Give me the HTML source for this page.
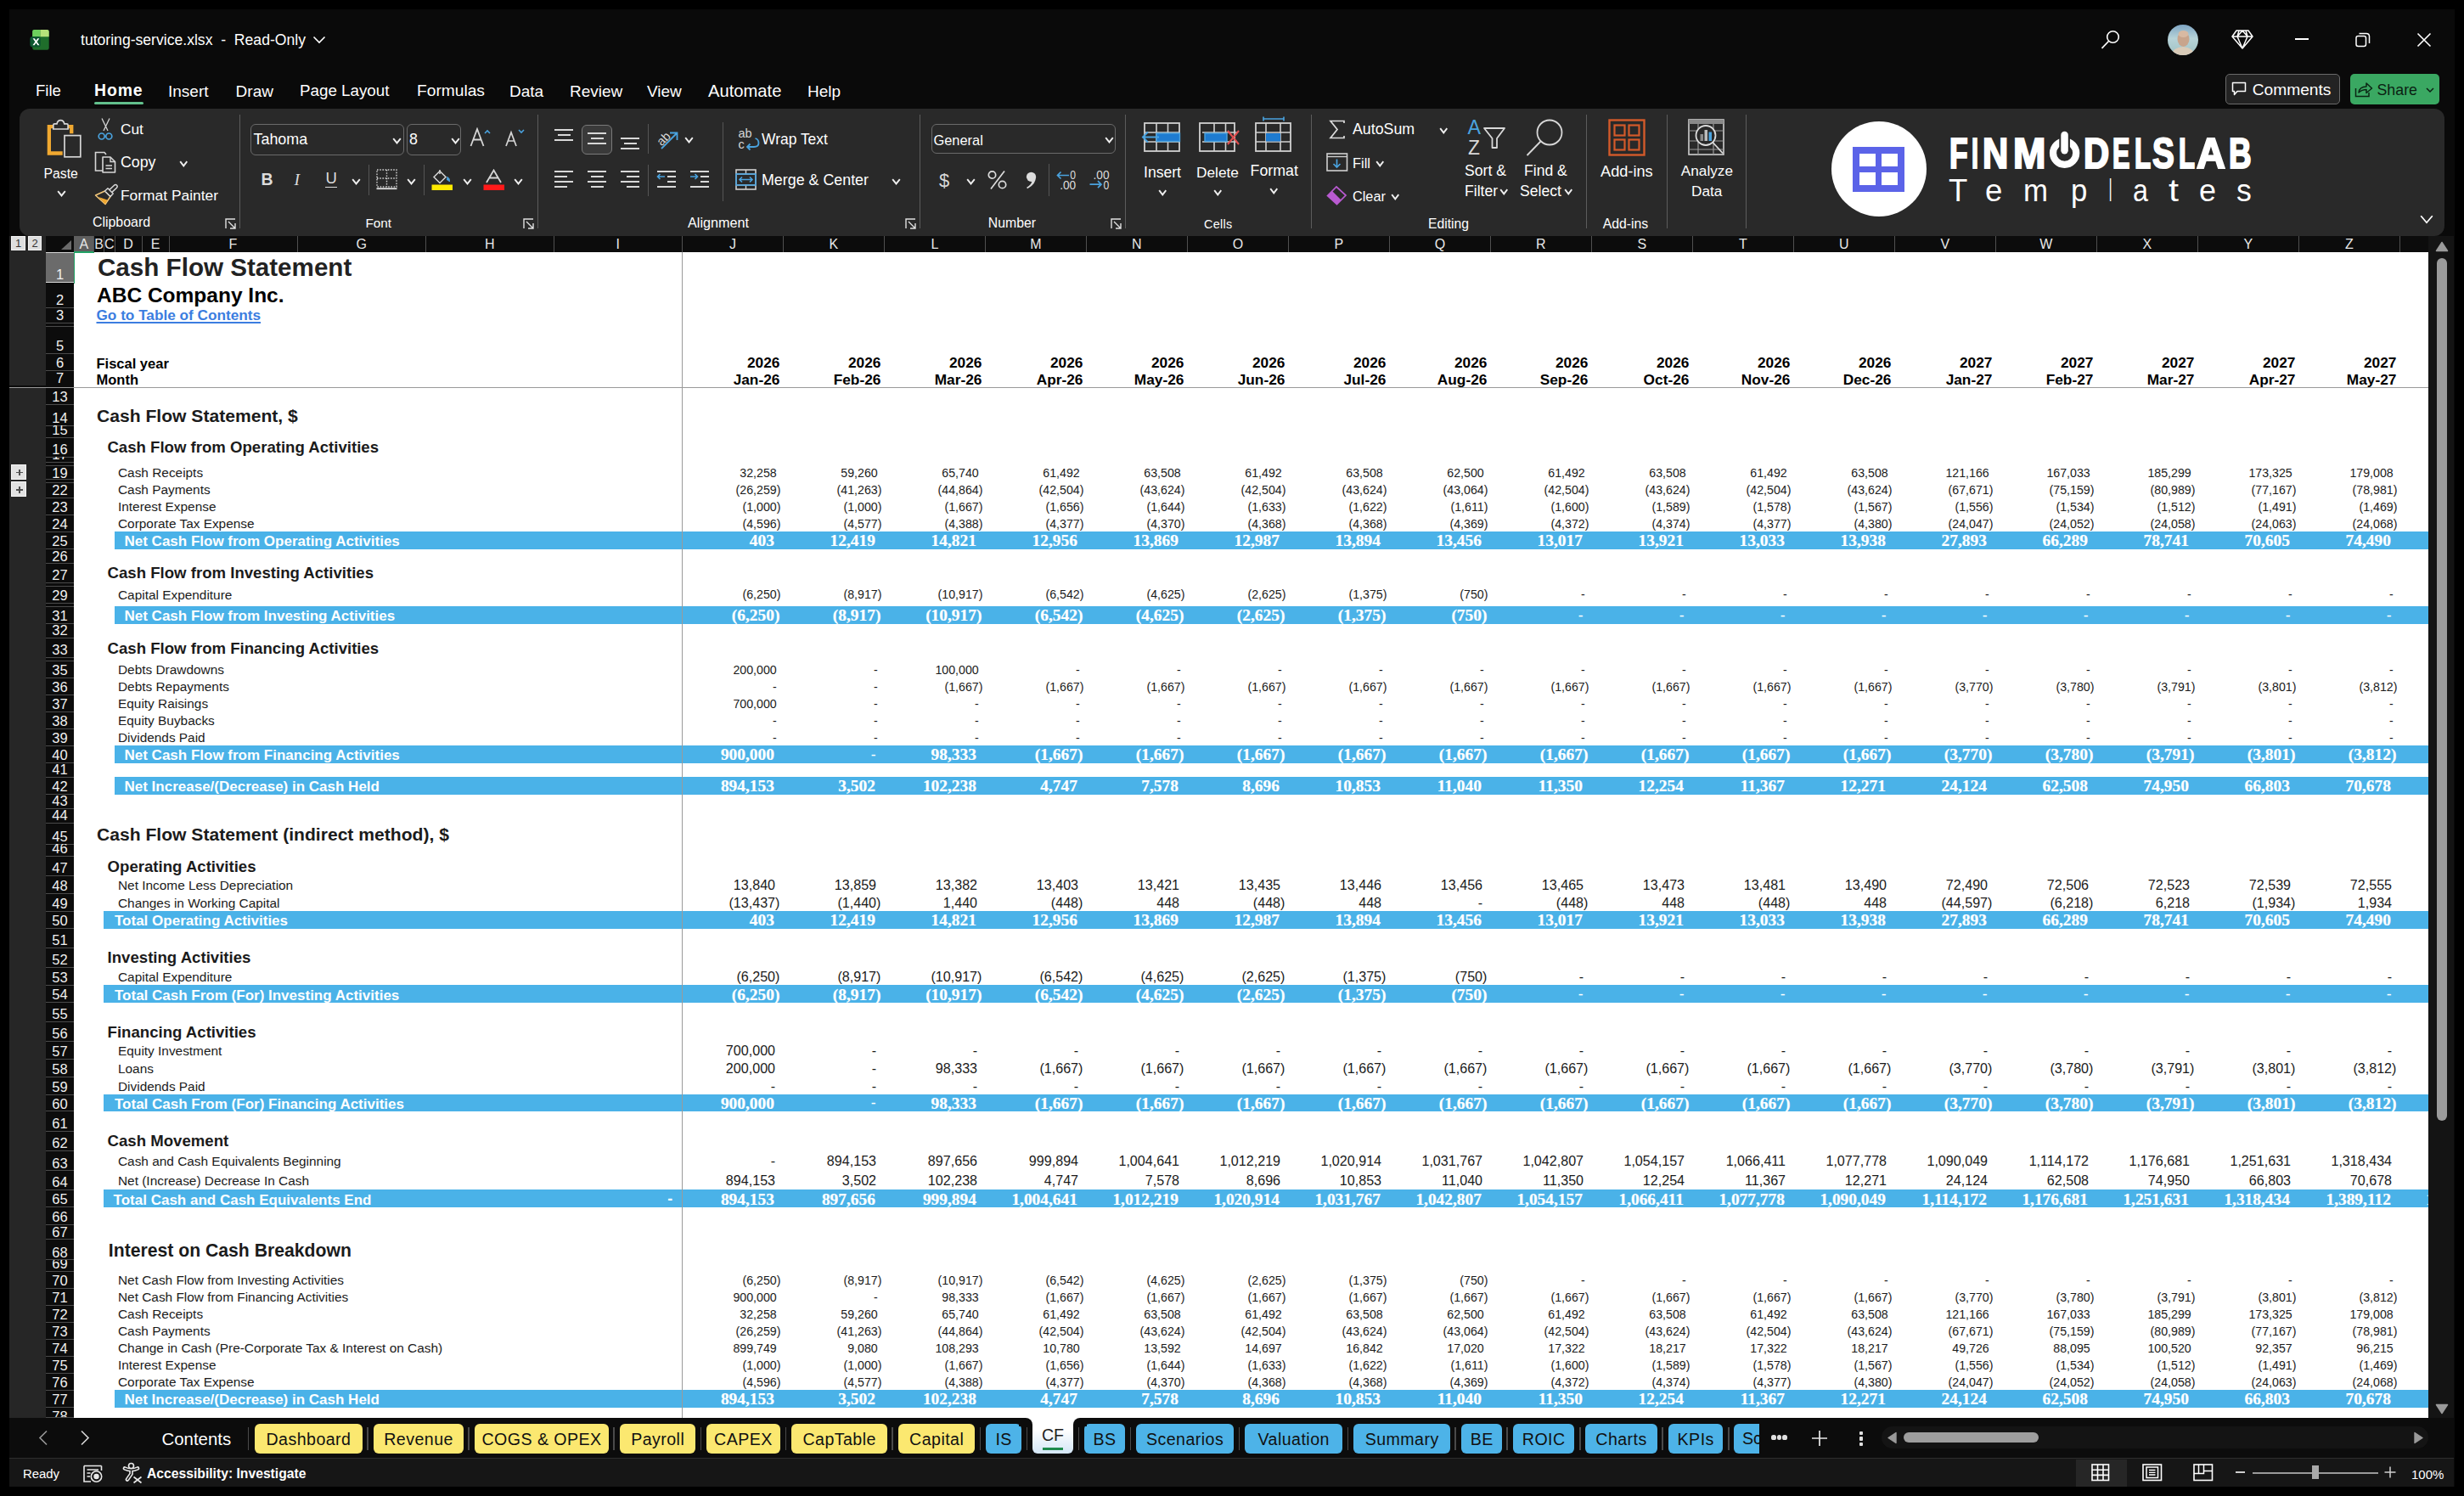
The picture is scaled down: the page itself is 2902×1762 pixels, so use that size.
<!DOCTYPE html>
<html><head><meta charset="utf-8"><title>Cash Flow Statement</title>
<style>html,body{margin:0;padding:0;width:2902px;height:1762px;overflow:hidden;background:#000;font-family:'Liberation Sans',sans-serif}
body{position:relative}</style></head><body>
<div style="position:absolute;left:0.00px;top:0.00px;width:2902.00px;height:1762.00px;background:#000000;"></div>
<div style="position:absolute;left:11.00px;top:11.00px;width:2880.00px;height:1740.00px;background:#0a0a0a;"></div>
<svg style="position:absolute;left:34.00px;top:34.00px;" width="26" height="26" viewBox="0 0 26 26">
      <rect x="4.2" y="0.9" width="19.5" height="23.8" rx="2.2" fill="#1f6e2b"/>
      <path d="M6.4 0.9 H13.5 V9.2 H4.2 V3.1 Q4.2 0.9 6.4 0.9 Z" fill="#6dd15d"/>
      <path d="M13.5 0.9 H21.5 Q23.7 0.9 23.7 3.1 V9.2 H13.5 Z" fill="#b7e37a"/>
      <rect x="1.4" y="9" width="12.4" height="12.4" rx="3" fill="#0d5730"/>
      <path d="M4.6 11.3 L7.4 15.2 L4.4 19.3 H6.6 L8.5 16.6 L10.4 19.3 H12.5 L9.6 15.2 L12.3 11.3 H10.2 L8.5 13.8 L6.8 11.3 Z" fill="#ffffff"/>
    </svg>
<div style="position:absolute;left:95.00px;top:39.30px;font-family:'Liberation Sans', sans-serif;font-size:17.6px;line-height:17.6px;font-weight:normal;color:#ffffff;white-space:pre;">tutoring-service.xlsx  -  Read-Only</div>
<svg style="position:absolute;left:368.00px;top:42.00px;" width="16" height="10" viewBox="0 0 16 10"><path d="M1.5 1.5 L8 8 L14.5 1.5" stroke="#fff" stroke-width="1.6" fill="none"/></svg>
<svg style="position:absolute;left:2474.00px;top:35.00px;" width="25" height="25" viewBox="0 0 25 25"><circle cx="14.5" cy="8.5" r="6.8" stroke="#fff" stroke-width="1.6" fill="none"/><path d="M9.5 13.5 L1.5 21.8" stroke="#fff" stroke-width="1.7"/></svg>
<svg style="position:absolute;left:2553.00px;top:29.00px;" width="36" height="36" viewBox="0 0 36 36"><defs><clipPath id="av"><circle cx="18" cy="18" r="18"/></clipPath><linearGradient id="avg" x1="0" y1="0" x2="0" y2="1"><stop offset="0" stop-color="#7fa6c4"/><stop offset="0.45" stop-color="#b7d3d8"/><stop offset="1" stop-color="#9fc2c4"/></linearGradient></defs>
      <g clip-path="url(#av)"><rect width="36" height="36" fill="url(#avg)"/>
      <path d="M4 36 Q6 27 18 26 Q30 27 32 36 Z" fill="#d9cbb8"/>
      <ellipse cx="18.5" cy="17" rx="7" ry="9" fill="#c8a48c"/>
      <ellipse cx="18.5" cy="11" rx="6" ry="4" fill="#d8b9a2"/></g></svg>
<svg style="position:absolute;left:2628.00px;top:35.00px;" width="26" height="23" viewBox="0 0 26 23"><path d="M6 1 H20 L25 8 L13 22 L1 8 Z M1 8 H25 M9 1 L7 8 L13 22 L19 8 L17 1 M7 8 L13 1 L19 8" stroke="#fff" stroke-width="1.5" fill="none" stroke-linejoin="round"/></svg>
<div style="position:absolute;left:2703.00px;top:45.30px;width:16.00px;height:1.60px;background:#ffffff;"></div>
<svg style="position:absolute;left:2774.00px;top:38.00px;" width="18" height="18" viewBox="0 0 18 18"><rect x="1" y="4.5" width="11.5" height="12" rx="2.2" stroke="#fff" stroke-width="1.5" fill="none"/><path d="M4.5 1.5 H13 Q16.5 1.5 16.5 5 V13" stroke="#fff" stroke-width="1.5" fill="none"/></svg>
<svg style="position:absolute;left:2846.00px;top:38.00px;" width="18" height="18" viewBox="0 0 18 18"><path d="M1.5 1.5 L16.5 16.5 M16.5 1.5 L1.5 16.5" stroke="#fff" stroke-width="1.6"/></svg>
<div style="position:absolute;left:2621px;top:87.3px;width:132.5px;height:33.4px;border:1px solid #6a6a6a;border-radius:5px;background:#232323"></div>
<svg style="position:absolute;left:2628.00px;top:96.00px;" width="19" height="18" viewBox="0 0 19 18"><path d="M1.5 1.5 H16.5 V11.5 H7 L3.5 15.5 V11.5 H1.5 Z" stroke="#fff" stroke-width="1.5" fill="none" stroke-linejoin="round"/></svg>
<div style="position:absolute;left:2652.70px;top:96.35px;font-family:'Liberation Sans', sans-serif;font-size:19.2px;line-height:19.2px;font-weight:normal;color:#ffffff;white-space:pre;">Comments</div>
<div style="position:absolute;left:2768px;top:87.3px;width:105px;height:35.4px;border-radius:5px;background:#3aa862"></div>
<svg style="position:absolute;left:2773.00px;top:96.00px;" width="22" height="19" viewBox="0 0 22 19"><path d="M1.5 8 V17.5 H17 V13" stroke="#0b2614" stroke-width="1.5" fill="none"/><path d="M5 13 Q6 6 14 6 V2 L20.5 8 L14 13.5 V9.5 Q9 9.5 5 13 Z" stroke="#0b2614" stroke-width="1.5" fill="none" stroke-linejoin="round"/></svg>
<div style="position:absolute;left:2799.50px;top:97.53px;font-family:'Liberation Sans', sans-serif;font-size:17.8px;line-height:17.8px;font-weight:normal;color:#0b1f12;white-space:pre;">Share</div>
<svg style="position:absolute;left:2857.00px;top:103.00px;" width="10" height="7" viewBox="0 0 10 7"><path d="M1 1 L5 5 L9 1" stroke="#0b1f12" stroke-width="1.5" fill="none"/></svg>
<div style="position:absolute;left:42.00px;top:97.86px;font-family:'Liberation Sans', sans-serif;font-size:18.6px;line-height:18.6px;font-weight:normal;color:#ffffff;white-space:pre;">File</div>
<div style="position:absolute;left:111.00px;top:97.18px;font-family:'Liberation Sans', sans-serif;font-size:19.4px;line-height:19.4px;font-weight:bold;color:#ffffff;white-space:pre;letter-spacing:0.9px">Home</div>
<div style="position:absolute;left:198.00px;top:97.52px;font-family:'Liberation Sans', sans-serif;font-size:19.0px;line-height:19.0px;font-weight:normal;color:#ffffff;white-space:pre;">Insert</div>
<div style="position:absolute;left:277.60px;top:97.52px;font-family:'Liberation Sans', sans-serif;font-size:19.0px;line-height:19.0px;font-weight:normal;color:#ffffff;white-space:pre;">Draw</div>
<div style="position:absolute;left:353.00px;top:97.69px;font-family:'Liberation Sans', sans-serif;font-size:18.8px;line-height:18.8px;font-weight:normal;color:#ffffff;white-space:pre;">Page Layout</div>
<div style="position:absolute;left:491.00px;top:97.35px;font-family:'Liberation Sans', sans-serif;font-size:19.2px;line-height:19.2px;font-weight:normal;color:#ffffff;white-space:pre;">Formulas</div>
<div style="position:absolute;left:600.00px;top:97.52px;font-family:'Liberation Sans', sans-serif;font-size:19.0px;line-height:19.0px;font-weight:normal;color:#ffffff;white-space:pre;">Data</div>
<div style="position:absolute;left:671.00px;top:97.52px;font-family:'Liberation Sans', sans-serif;font-size:19.0px;line-height:19.0px;font-weight:normal;color:#ffffff;white-space:pre;">Review</div>
<div style="position:absolute;left:762.00px;top:97.52px;font-family:'Liberation Sans', sans-serif;font-size:19.0px;line-height:19.0px;font-weight:normal;color:#ffffff;white-space:pre;">View</div>
<div style="position:absolute;left:834.00px;top:96.50px;font-family:'Liberation Sans', sans-serif;font-size:20.2px;line-height:20.2px;font-weight:normal;color:#ffffff;white-space:pre;">Automate</div>
<div style="position:absolute;left:951.00px;top:97.52px;font-family:'Liberation Sans', sans-serif;font-size:19.0px;line-height:19.0px;font-weight:normal;color:#ffffff;white-space:pre;">Help</div>
<div style="position:absolute;left:111px;top:119.8px;width:58px;height:3px;border-radius:2px;background:#62c08c"></div>
<div style="position:absolute;left:23px;top:128px;width:2856px;height:149.5px;border-radius:12px;background:#292929"></div>
<svg style="position:absolute;left:54.00px;top:140.00px;" width="44" height="48" viewBox="0 0 44 48">
      <path d="M8.8 9.2 H3.85 V40.5 H19.7" stroke="#f0a830" stroke-width="4.3" fill="none"/>
      <path d="M30.25 17.3 V9.2 H26.5" stroke="#f0a830" stroke-width="4.3" fill="none"/>
      <path d="M8.8 12 V7.2 Q8.8 5.8 10.3 5.8 H13 Q13.8 1.6 17.4 1.6 Q21 1.6 21.8 5.8 H24.6 Q26.1 5.8 26.1 7.2 V12 Z" stroke="#d6d6d6" stroke-width="1.7" fill="#292929"/>
      <rect x="22" y="19.6" width="18.8" height="25.2" stroke="#d6d6d6" stroke-width="1.7" fill="#292929"/>
    </svg>
<div style="position:absolute;left:51.50px;top:196.63px;font-family:'Liberation Sans', sans-serif;font-size:15.8px;line-height:15.8px;font-weight:normal;color:#ffffff;white-space:pre;">Paste</div>
<svg style="position:absolute;left:67.00px;top:223.50px;" width="11" height="9" viewBox="0 0 11 9"><path d="M1.2 1.2 L5.5 6.4 L9.8 1.2" stroke="#f0f0f0" stroke-width="1.9" fill="none" stroke-linejoin="miter"/></svg>
<svg style="position:absolute;left:115.00px;top:139.00px;" width="19" height="26" viewBox="0 0 19 26">
      <path d="M5 0.5 L12 15 M14 0.5 L7 15" stroke="#d6d6d6" stroke-width="1.3" fill="none"/>
      <circle cx="4.7" cy="21.5" r="3.5" stroke="#4aa3df" stroke-width="1.7" fill="none"/>
      <circle cx="13.3" cy="21.5" r="3.5" stroke="#4aa3df" stroke-width="1.7" fill="none"/>
    </svg>
<div style="position:absolute;left:142.00px;top:144.36px;font-family:'Liberation Sans', sans-serif;font-size:17.3px;line-height:17.3px;font-weight:normal;color:#ffffff;white-space:pre;">Cut</div>
<svg style="position:absolute;left:111.00px;top:178.00px;" width="26" height="27" viewBox="0 0 26 27">
      <path d="M12 23 H1.5 V1.5 H12 L14 4" stroke="#d6d6d6" stroke-width="1.6" fill="none"/>
      <path d="M10 7 H19 L24.5 12.5 V25 H10 Z" stroke="#d6d6d6" stroke-width="1.6" fill="#292929" stroke-linejoin="round"/>
      <path d="M19 7 V12.5 H24.5 M13.5 17 H21 M13.5 20.5 H21" stroke="#d6d6d6" stroke-width="1.4" fill="none"/>
    </svg>
<div style="position:absolute;left:142.00px;top:182.93px;font-family:'Liberation Sans', sans-serif;font-size:17.8px;line-height:17.8px;font-weight:normal;color:#ffffff;white-space:pre;">Copy</div>
<svg style="position:absolute;left:210.50px;top:188.50px;" width="10.5" height="8.5" viewBox="0 0 10.5 8.5"><path d="M1.2 1.2 L5.25 6.4 L9.3 1.2" stroke="#f0f0f0" stroke-width="1.9" fill="none" stroke-linejoin="miter"/></svg>
<svg style="position:absolute;left:111.00px;top:216.00px;" width="28" height="27" viewBox="0 0 28 27">
      <path d="M1.5 14 L12.5 9 L19 15.5 L13 24.5 Z" fill="none" stroke="#f3c77a" stroke-width="1.5" stroke-linejoin="round"/>
      <path d="M5 16 L13 24.5 L15.5 19.5 Z" fill="#f0a830"/>
      <path d="M12.5 9 L16 5.8 L22.2 12 L19 15.5 Z" fill="#292929" stroke="#d6d6d6" stroke-width="1.5" stroke-linejoin="round"/>
      <path d="M17.8 7.6 L23.5 2.2 Q25.2 0.8 26.6 2.2 Q27.9 3.6 26.4 5.2 L20.6 10.6" fill="none" stroke="#d6d6d6" stroke-width="1.5"/>
    </svg>
<div style="position:absolute;left:142.00px;top:222.27px;font-family:'Liberation Sans', sans-serif;font-size:17.4px;line-height:17.4px;font-weight:normal;color:#ffffff;white-space:pre;">Format Painter</div>
<div style="position:absolute;left:109.00px;top:254.04px;font-family:'Liberation Sans', sans-serif;font-size:15.9px;line-height:15.9px;font-weight:normal;color:#ffffff;white-space:pre;">Clipboard</div>
<svg style="position:absolute;left:264.50px;top:256.50px;" width="13" height="13" viewBox="0 0 13 13"><path d="M1 12 V1 H12" stroke="#e0e0e0" stroke-width="1.4" fill="none"/><path d="M12 6 V12 H6 M4 4 L11.5 11.5" stroke="#e0e0e0" stroke-width="1.4" fill="none"/></svg>
<div style="position:absolute;left:281.50px;top:135.00px;width:1.00px;height:134.00px;background:#5c5c5c;"></div>
<div style="position:absolute;left:295px;top:146px;width:179px;height:34.5px;border:1.2px solid #6a6a6a;border-radius:6px"></div>
<div style="position:absolute;left:298.50px;top:155.85px;font-family:'Liberation Sans', sans-serif;font-size:17.9px;line-height:17.9px;font-weight:normal;color:#ffffff;white-space:pre;">Tahoma</div>
<svg style="position:absolute;left:462.00px;top:161.50px;" width="11" height="9" viewBox="0 0 11 9"><path d="M1.2 1.2 L5.5 6.4 L9.8 1.2" stroke="#f0f0f0" stroke-width="1.9" fill="none" stroke-linejoin="miter"/></svg>
<div style="position:absolute;left:479.4px;top:146px;width:62px;height:34.5px;border:1.2px solid #6a6a6a;border-radius:6px"></div>
<div style="position:absolute;left:482.00px;top:155.85px;font-family:'Liberation Sans', sans-serif;font-size:17.9px;line-height:17.9px;font-weight:normal;color:#ffffff;white-space:pre;">8</div>
<svg style="position:absolute;left:530.50px;top:161.50px;" width="11" height="9" viewBox="0 0 11 9"><path d="M1.2 1.2 L5.5 6.4 L9.8 1.2" stroke="#f0f0f0" stroke-width="1.9" fill="none" stroke-linejoin="miter"/></svg>
<svg style="position:absolute;left:553.00px;top:150.00px;" width="26" height="24" viewBox="0 0 26 24"><path d="M1.5 22 L9 2 L16.5 22 M4.5 14.5 H13.5" stroke="#d6d6d6" stroke-width="1.8" fill="none"/><path d="M18 7 L21 4 L24 7" stroke="#4aa3df" stroke-width="1.6" fill="none"/></svg>
<svg style="position:absolute;left:594.00px;top:150.00px;" width="25" height="24" viewBox="0 0 25 24"><path d="M2 22 L8 6 L14 22 M4.5 16 H11.5" stroke="#d6d6d6" stroke-width="1.7" fill="none"/><path d="M17 3 L20 6 L23 3" stroke="#4aa3df" stroke-width="1.6" fill="none"/></svg>
<div style="position:absolute;left:307.50px;top:201.79px;font-family:'Liberation Sans', sans-serif;font-size:19.5px;line-height:19.5px;font-weight:bold;color:#dcdcdc;white-space:pre;">B</div>
<div style="position:absolute;left:346.50px;top:201.79px;font-family:'Liberation Sans', sans-serif;font-size:19.5px;line-height:19.5px;font-weight:normal;color:#dcdcdc;white-space:pre;font-family:'Liberation Serif',serif;font-style:italic">I</div>
<div style="position:absolute;left:383.50px;top:200.84px;font-family:'Liberation Sans', sans-serif;font-size:18.5px;line-height:18.5px;font-weight:normal;color:#dcdcdc;white-space:pre;">U</div>
<div style="position:absolute;left:383.00px;top:219.50px;width:14.00px;height:1.50px;background:#dcdcdc;"></div>
<svg style="position:absolute;left:414.00px;top:209.50px;" width="11" height="9" viewBox="0 0 11 9"><path d="M1.2 1.2 L5.5 6.4 L9.8 1.2" stroke="#f0f0f0" stroke-width="1.9" fill="none" stroke-linejoin="miter"/></svg>
<div style="position:absolute;left:433.90px;top:194.00px;width:1.00px;height:35.50px;background:#555;"></div>
<svg style="position:absolute;left:443.00px;top:199.00px;" width="25" height="25" viewBox="0 0 25 25"><path d="M1 1 H24 V21 H1 Z M12.5 1 V21 M1 11 H24" stroke="#cfcfcf" stroke-width="1.4" stroke-dasharray="1.6 1.6" fill="none"/><path d="M0.5 23.2 H24.5" stroke="#e0e0e0" stroke-width="1.8"/></svg>
<svg style="position:absolute;left:479.00px;top:209.50px;" width="11" height="9" viewBox="0 0 11 9"><path d="M1.2 1.2 L5.5 6.4 L9.8 1.2" stroke="#f0f0f0" stroke-width="1.9" fill="none" stroke-linejoin="miter"/></svg>
<div style="position:absolute;left:499.00px;top:194.00px;width:1.00px;height:35.50px;background:#555;"></div>
<svg style="position:absolute;left:508.00px;top:199.00px;" width="26" height="26" viewBox="0 0 26 26"><path d="M3 9.5 L10 2.5 L17 9.5 L10 16.5 Z" stroke="#d6d6d6" stroke-width="1.5" fill="none"/><path d="M10 1 V6" stroke="#d6d6d6" stroke-width="1.5"/><path d="M18.5 9 Q22 11 21.5 15 Q20 13 18 12.5" fill="#4aa3df" stroke="#4aa3df" stroke-width="1"/><rect x="0.5" y="18.5" width="24.5" height="6.5" fill="#ffea00"/></svg>
<svg style="position:absolute;left:544.50px;top:209.50px;" width="11" height="9" viewBox="0 0 11 9"><path d="M1.2 1.2 L5.5 6.4 L9.8 1.2" stroke="#f0f0f0" stroke-width="1.9" fill="none" stroke-linejoin="miter"/></svg>
<svg style="position:absolute;left:569.00px;top:199.00px;" width="26" height="26" viewBox="0 0 26 26"><path d="M4 16 L12.5 1.5 L21 16 M7.5 10.5 H17.5" stroke="#d6d6d6" stroke-width="1.8" fill="none"/><rect x="0.5" y="18.5" width="24.5" height="6.5" fill="#ff1a1a"/></svg>
<svg style="position:absolute;left:605.00px;top:209.50px;" width="11" height="9" viewBox="0 0 11 9"><path d="M1.2 1.2 L5.5 6.4 L9.8 1.2" stroke="#f0f0f0" stroke-width="1.9" fill="none" stroke-linejoin="miter"/></svg>
<div style="position:absolute;left:430.50px;top:255.05px;font-family:'Liberation Sans', sans-serif;font-size:15.3px;line-height:15.3px;font-weight:normal;color:#ffffff;white-space:pre;">Font</div>
<svg style="position:absolute;left:616.00px;top:257.00px;" width="13" height="13" viewBox="0 0 13 13"><path d="M1 12 V1 H12" stroke="#e0e0e0" stroke-width="1.4" fill="none"/><path d="M12 6 V12 H6 M4 4 L11.5 11.5" stroke="#e0e0e0" stroke-width="1.4" fill="none"/></svg>
<div style="position:absolute;left:633.10px;top:135.00px;width:1.00px;height:134.00px;background:#5c5c5c;"></div>
<div style="position:absolute;left:653.00px;top:152.20px;width:22.00px;height:1.60px;background:#d8d8d8;"></div>
<div style="position:absolute;left:656.50px;top:158.20px;width:15.00px;height:1.60px;background:#d8d8d8;"></div>
<div style="position:absolute;left:653.00px;top:164.20px;width:22.00px;height:1.60px;background:#d8d8d8;"></div>
<div style="position:absolute;left:685.4px;top:146.5px;width:34px;height:33.5px;border:1.2px solid #7a7a7a;border-radius:6px;background:#3a3a3a"></div>
<div style="position:absolute;left:692.00px;top:156.20px;width:22.00px;height:1.60px;background:#d8d8d8;"></div>
<div style="position:absolute;left:695.50px;top:162.20px;width:15.00px;height:1.60px;background:#d8d8d8;"></div>
<div style="position:absolute;left:692.00px;top:168.20px;width:22.00px;height:1.60px;background:#d8d8d8;"></div>
<div style="position:absolute;left:731.00px;top:162.20px;width:22.00px;height:1.60px;background:#d8d8d8;"></div>
<div style="position:absolute;left:734.50px;top:168.20px;width:15.00px;height:1.60px;background:#d8d8d8;"></div>
<div style="position:absolute;left:731.00px;top:174.20px;width:22.00px;height:1.60px;background:#d8d8d8;"></div>
<div style="position:absolute;left:763.00px;top:146.00px;width:1.00px;height:35.00px;background:#555;"></div>
<svg style="position:absolute;left:770.00px;top:148.00px;" width="32" height="30" viewBox="0 0 32 30"><text x="2" y="21" transform="rotate(-45 10 14)" font-family="Liberation Sans" font-size="14.5" fill="#d6d6d6">ab</text><path d="M9 27 L27 9 M19 8.5 H27.5 V17" stroke="#4aa3df" stroke-width="1.8" fill="none"/></svg>
<svg style="position:absolute;left:805.50px;top:161.00px;" width="11" height="9" viewBox="0 0 11 9"><path d="M1.2 1.2 L5.5 6.4 L9.8 1.2" stroke="#f0f0f0" stroke-width="1.9" fill="none" stroke-linejoin="miter"/></svg>
<div style="position:absolute;left:851.10px;top:143.70px;width:1.00px;height:93.30px;background:#555;"></div>
<svg style="position:absolute;left:868.00px;top:150.00px;" width="27" height="28" viewBox="0 0 27 28"><text x="1.5" y="12" font-family="Liberation Sans" font-size="14.5" fill="#d6d6d6">ab</text><text x="1.5" y="25" font-family="Liberation Sans" font-size="14.5" fill="#d6d6d6">c</text><path d="M21.5 13 Q25.5 14 25.5 18.5 Q25.5 23 20 23 H12 M15.5 19.5 L12 23 L15.5 26.5" stroke="#4aa3df" stroke-width="1.8" fill="none"/></svg>
<div style="position:absolute;left:897.00px;top:155.93px;font-family:'Liberation Sans', sans-serif;font-size:17.45px;line-height:17.45px;font-weight:normal;color:#ffffff;white-space:pre;">Wrap Text</div>
<div style="position:absolute;left:653.00px;top:201.20px;width:22.00px;height:1.60px;background:#d8d8d8;"></div>
<div style="position:absolute;left:653.00px;top:207.20px;width:15.00px;height:1.60px;background:#d8d8d8;"></div>
<div style="position:absolute;left:653.00px;top:213.20px;width:22.00px;height:1.60px;background:#d8d8d8;"></div>
<div style="position:absolute;left:653.00px;top:219.20px;width:15.00px;height:1.60px;background:#d8d8d8;"></div>
<div style="position:absolute;left:692.00px;top:201.20px;width:22.00px;height:1.60px;background:#d8d8d8;"></div>
<div style="position:absolute;left:695.50px;top:207.20px;width:15.00px;height:1.60px;background:#d8d8d8;"></div>
<div style="position:absolute;left:692.00px;top:213.20px;width:22.00px;height:1.60px;background:#d8d8d8;"></div>
<div style="position:absolute;left:695.50px;top:219.20px;width:15.00px;height:1.60px;background:#d8d8d8;"></div>
<div style="position:absolute;left:731.00px;top:201.20px;width:22.00px;height:1.60px;background:#d8d8d8;"></div>
<div style="position:absolute;left:738.00px;top:207.20px;width:15.00px;height:1.60px;background:#d8d8d8;"></div>
<div style="position:absolute;left:731.00px;top:213.20px;width:22.00px;height:1.60px;background:#d8d8d8;"></div>
<div style="position:absolute;left:738.00px;top:219.20px;width:15.00px;height:1.60px;background:#d8d8d8;"></div>
<div style="position:absolute;left:763.00px;top:194.00px;width:1.00px;height:36.50px;background:#555;"></div>
<div style="position:absolute;left:774.00px;top:201.20px;width:22.00px;height:1.60px;background:#d8d8d8;"></div>
<div style="position:absolute;left:774.00px;top:219.20px;width:22.00px;height:1.60px;background:#d8d8d8;"></div>
<div style="position:absolute;left:786.00px;top:207.20px;width:10.00px;height:1.60px;background:#d8d8d8;"></div>
<div style="position:absolute;left:786.00px;top:213.20px;width:10.00px;height:1.60px;background:#d8d8d8;"></div>
<svg style="position:absolute;left:773.00px;top:204.00px;" width="11" height="8" viewBox="0 0 11 8"><path d="M10 4 H1.5 M4.5 1 L1.5 4 L4.5 7" stroke="#4aa3df" stroke-width="1.6" fill="none"/></svg>
<div style="position:absolute;left:813.00px;top:201.20px;width:22.00px;height:1.60px;background:#d8d8d8;"></div>
<div style="position:absolute;left:813.00px;top:219.20px;width:22.00px;height:1.60px;background:#d8d8d8;"></div>
<div style="position:absolute;left:825.00px;top:207.20px;width:10.00px;height:1.60px;background:#d8d8d8;"></div>
<div style="position:absolute;left:825.00px;top:213.20px;width:10.00px;height:1.60px;background:#d8d8d8;"></div>
<svg style="position:absolute;left:812.00px;top:204.00px;" width="11" height="8" viewBox="0 0 11 8"><path d="M1 4 H9.5 M6.5 1 L9.5 4 L6.5 7" stroke="#4aa3df" stroke-width="1.6" fill="none"/></svg>
<svg style="position:absolute;left:866.00px;top:199.00px;" width="25" height="25" viewBox="0 0 25 25"><rect x="1" y="1" width="23" height="23" stroke="#d0d0d0" stroke-width="1.6" fill="none"/><path d="M1 6 H24 M1 19 H24 M12.5 1 V6 M12.5 19 V24" stroke="#d0d0d0" stroke-width="1.4"/><rect x="1" y="6" width="23" height="13" stroke="#4aa3df" stroke-width="1.6" fill="none"/><path d="M5 12.5 H20 M8 9.5 L5 12.5 L8 15.5 M17 9.5 L20 12.5 L17 15.5" stroke="#4aa3df" stroke-width="1.6" fill="none"/></svg>
<div style="position:absolute;left:897.00px;top:203.89px;font-family:'Liberation Sans', sans-serif;font-size:17.85px;line-height:17.85px;font-weight:normal;color:#ffffff;white-space:pre;">Merge &amp; Center</div>
<svg style="position:absolute;left:1049.50px;top:209.50px;" width="11" height="9" viewBox="0 0 11 9"><path d="M1.2 1.2 L5.5 6.4 L9.8 1.2" stroke="#f0f0f0" stroke-width="1.9" fill="none" stroke-linejoin="miter"/></svg>
<div style="position:absolute;left:810.00px;top:254.09px;font-family:'Liberation Sans', sans-serif;font-size:16.2px;line-height:16.2px;font-weight:normal;color:#ffffff;white-space:pre;">Alignment</div>
<svg style="position:absolute;left:1066.00px;top:257.00px;" width="13" height="13" viewBox="0 0 13 13"><path d="M1 12 V1 H12" stroke="#e0e0e0" stroke-width="1.4" fill="none"/><path d="M12 6 V12 H6 M4 4 L11.5 11.5" stroke="#e0e0e0" stroke-width="1.4" fill="none"/></svg>
<div style="position:absolute;left:1083.00px;top:135.00px;width:1.00px;height:134.00px;background:#5c5c5c;"></div>
<div style="position:absolute;left:1096.6px;top:146.4px;width:215px;height:33px;border:1.2px solid #6a6a6a;border-radius:6px"></div>
<div style="position:absolute;left:1099.50px;top:156.92px;font-family:'Liberation Sans', sans-serif;font-size:16.4px;line-height:16.4px;font-weight:normal;color:#ffffff;white-space:pre;">General</div>
<svg style="position:absolute;left:1300.50px;top:161.00px;" width="11" height="9" viewBox="0 0 11 9"><path d="M1.2 1.2 L5.5 6.4 L9.8 1.2" stroke="#f0f0f0" stroke-width="1.9" fill="none" stroke-linejoin="miter"/></svg>
<div style="position:absolute;left:1106.00px;top:201.88px;font-family:'Liberation Sans', sans-serif;font-size:22px;line-height:22px;font-weight:normal;color:#d8d8d8;white-space:pre;">$</div>
<svg style="position:absolute;left:1137.50px;top:210.00px;" width="11" height="9" viewBox="0 0 11 9"><path d="M1.2 1.2 L5.5 6.4 L9.8 1.2" stroke="#f0f0f0" stroke-width="1.9" fill="none" stroke-linejoin="miter"/></svg>
<svg style="position:absolute;left:1162.00px;top:200.00px;" width="26" height="24" viewBox="0 0 26 24"><circle cx="6.5" cy="6" r="4.2" stroke="#dcdcdc" stroke-width="1.7" fill="none"/><circle cx="18.5" cy="17.5" r="4.2" stroke="#dcdcdc" stroke-width="1.7" fill="none"/><path d="M21 1.5 L5 22.5" stroke="#dcdcdc" stroke-width="1.7"/></svg>
<svg style="position:absolute;left:1207.00px;top:201.00px;" width="16" height="23" viewBox="0 0 16 23"><circle cx="7.5" cy="7.3" r="5.6" fill="#dcdcdc"/><path d="M12.9 6.5 Q13.5 16 3 21.3 L2.2 19.8 Q8.5 16 8.3 11.5 Z" fill="#dcdcdc"/></svg>
<div style="position:absolute;left:1235.00px;top:193.40px;width:1.00px;height:37.30px;background:#555;"></div>
<svg style="position:absolute;left:1243.00px;top:198.00px;" width="27" height="27" viewBox="0 0 27 27"><text x="17.3" y="12.7" font-family="Liberation Sans" font-size="14" fill="#dcdcdc" textLength="6.8" lengthAdjust="spacingAndGlyphs">0</text><text x="5.2" y="24.8" font-family="Liberation Sans" font-size="14" fill="#dcdcdc" textLength="19" lengthAdjust="spacingAndGlyphs">.00</text><path d="M16 8.5 H2.5 M6.5 4.5 L2.5 8.5 L6.5 12.5" stroke="#4aa3df" stroke-width="1.7" fill="none"/></svg>
<svg style="position:absolute;left:1282.00px;top:198.00px;" width="27" height="27" viewBox="0 0 27 27"><text x="5.5" y="12.7" font-family="Liberation Sans" font-size="14" fill="#dcdcdc" textLength="19" lengthAdjust="spacingAndGlyphs">.00</text><text x="17.5" y="24.8" font-family="Liberation Sans" font-size="14" fill="#dcdcdc" textLength="6.8" lengthAdjust="spacingAndGlyphs">0</text><path d="M1.5 19.2 H15 M11 15.2 L15 19.2 L11 23.2" stroke="#4aa3df" stroke-width="1.7" fill="none"/></svg>
<div style="position:absolute;left:1163.80px;top:254.63px;font-family:'Liberation Sans', sans-serif;font-size:15.8px;line-height:15.8px;font-weight:normal;color:#ffffff;white-space:pre;">Number</div>
<svg style="position:absolute;left:1308.00px;top:257.00px;" width="13" height="13" viewBox="0 0 13 13"><path d="M1 12 V1 H12" stroke="#e0e0e0" stroke-width="1.4" fill="none"/><path d="M12 6 V12 H6 M4 4 L11.5 11.5" stroke="#e0e0e0" stroke-width="1.4" fill="none"/></svg>
<div style="position:absolute;left:1325.00px;top:135.00px;width:1.00px;height:134.00px;background:#5c5c5c;"></div>
<svg style="position:absolute;left:1344.00px;top:144.00px;" width="50" height="36" viewBox="0 0 50 36"><rect x="4" y="1" width="41" height="33" stroke="#d0d0d0" stroke-width="1.8" fill="none"/><path d="M4 12 H45 M4 23 H45 M18 1 V34 M31.5 1 V34" stroke="#d0d0d0" stroke-width="1.6"/><rect x="18" y="13" width="27.5" height="9.5" fill="#1e7bd0" stroke="#4aa3df" stroke-width="1.4"/><path d="M21 17.5 H2 M8 11.5 L2 17.5 L8 23.5" stroke="#4aa3df" stroke-width="2" fill="none"/></svg>
<svg style="position:absolute;left:1412.00px;top:144.00px;" width="50" height="36" viewBox="0 0 50 36"><rect x="1" y="1" width="41" height="33" stroke="#d0d0d0" stroke-width="1.8" fill="none"/><path d="M4 12 H45 M4 23 H45 M18 1 V34 M31.5 1 V34" stroke="#d0d0d0" stroke-width="1.6"/><rect x="7" y="13" width="26" height="9.5" fill="#1e7bd0" stroke="#4aa3df" stroke-width="1.4"/><path d="M34 10 L47 26 M47 10 L34 26" stroke="#e05050" stroke-width="2"/></svg>
<svg style="position:absolute;left:1478.00px;top:137.00px;" width="45" height="43" viewBox="0 0 45 43"><path d="M10 3 H34 M10 0.5 V5.5 M34 0.5 V5.5" stroke="#4aa3df" stroke-width="1.6"/><rect x="1" y="8" width="41" height="33" stroke="#d0d0d0" stroke-width="1.8" fill="none"/><path d="M1 19 H42 M1 30 H42 M13 8 V41 M30 8 V41" stroke="#d0d0d0" stroke-width="1.6"/><rect x="13" y="20" width="17" height="9.5" fill="#1e7bd0"/></svg>
<div style="position:absolute;left:1347.00px;top:195.10px;font-family:'Liberation Sans', sans-serif;font-size:17.6px;line-height:17.6px;font-weight:normal;color:#ffffff;white-space:pre;">Insert</div>
<svg style="position:absolute;left:1363.50px;top:222.50px;" width="10.5" height="8.5" viewBox="0 0 10.5 8.5"><path d="M1.2 1.2 L5.25 6.4 L9.3 1.2" stroke="#f0f0f0" stroke-width="1.9" fill="none" stroke-linejoin="miter"/></svg>
<div style="position:absolute;left:1409.00px;top:195.36px;font-family:'Liberation Sans', sans-serif;font-size:17.3px;line-height:17.3px;font-weight:normal;color:#ffffff;white-space:pre;">Delete</div>
<svg style="position:absolute;left:1428.50px;top:222.50px;" width="10.5" height="8.5" viewBox="0 0 10.5 8.5"><path d="M1.2 1.2 L5.25 6.4 L9.3 1.2" stroke="#f0f0f0" stroke-width="1.9" fill="none" stroke-linejoin="miter"/></svg>
<div style="position:absolute;left:1472.60px;top:192.73px;font-family:'Liberation Sans', sans-serif;font-size:17.8px;line-height:17.8px;font-weight:normal;color:#ffffff;white-space:pre;">Format</div>
<svg style="position:absolute;left:1494.50px;top:220.50px;" width="10.5" height="8.5" viewBox="0 0 10.5 8.5"><path d="M1.2 1.2 L5.25 6.4 L9.3 1.2" stroke="#f0f0f0" stroke-width="1.9" fill="none" stroke-linejoin="miter"/></svg>
<div style="position:absolute;left:1418.00px;top:256.81px;font-family:'Liberation Sans', sans-serif;font-size:14.4px;line-height:14.4px;font-weight:normal;color:#ffffff;white-space:pre;letter-spacing:0.3px">Cells</div>
<div style="position:absolute;left:1544.10px;top:135.00px;width:1.00px;height:134.00px;background:#5c5c5c;"></div>
<svg style="position:absolute;left:1565.00px;top:141.00px;" width="20" height="23" viewBox="0 0 20 23"><path d="M18 4 V1.5 H2 L10 11.5 L2 21.5 H18 V19" stroke="#dcdcdc" stroke-width="1.7" fill="none"/></svg>
<div style="position:absolute;left:1593.00px;top:143.93px;font-family:'Liberation Sans', sans-serif;font-size:17.8px;line-height:17.8px;font-weight:normal;color:#ffffff;white-space:pre;">AutoSum</div>
<svg style="position:absolute;left:1694.50px;top:149.50px;" width="10.5" height="8.5" viewBox="0 0 10.5 8.5"><path d="M1.2 1.2 L5.25 6.4 L9.3 1.2" stroke="#f0f0f0" stroke-width="1.9" fill="none" stroke-linejoin="miter"/></svg>
<svg style="position:absolute;left:1562.00px;top:180.00px;" width="26" height="22" viewBox="0 0 26 22"><rect x="1" y="1" width="23.5" height="20" stroke="#d0d0d0" stroke-width="1.6" fill="none"/><path d="M1 4.5 H24.5" stroke="#d0d0d0" stroke-width="1.4"/><path d="M12.5 7.5 V17 M8.5 13 L12.5 17 L16.5 13" stroke="#4aa3df" stroke-width="1.7" fill="none"/></svg>
<div style="position:absolute;left:1593.00px;top:183.82px;font-family:'Liberation Sans', sans-serif;font-size:16.4px;line-height:16.4px;font-weight:normal;color:#ffffff;white-space:pre;">Fill</div>
<svg style="position:absolute;left:1619.50px;top:188.50px;" width="10.5" height="8.5" viewBox="0 0 10.5 8.5"><path d="M1.2 1.2 L5.25 6.4 L9.3 1.2" stroke="#f0f0f0" stroke-width="1.9" fill="none" stroke-linejoin="miter"/></svg>
<svg style="position:absolute;left:1562.00px;top:217.00px;" width="25" height="25" viewBox="0 0 25 25"><path d="M1.5 13.5 L12 3 L23 13 L12.5 23.5 Z" stroke="#b85ad0" stroke-width="1.7" fill="none"/><path d="M1.5 13.5 L7 8 L17.5 18.5 L12.5 23.5 Z" fill="#b85ad0"/></svg>
<div style="position:absolute;left:1593.00px;top:223.20px;font-family:'Liberation Sans', sans-serif;font-size:16.3px;line-height:16.3px;font-weight:normal;color:#ffffff;white-space:pre;">Clear</div>
<svg style="position:absolute;left:1637.50px;top:228.00px;" width="10.5" height="8.5" viewBox="0 0 10.5 8.5"><path d="M1.2 1.2 L5.25 6.4 L9.3 1.2" stroke="#f0f0f0" stroke-width="1.9" fill="none" stroke-linejoin="miter"/></svg>
<svg style="position:absolute;left:1728.00px;top:140.00px;" width="46" height="44" viewBox="0 0 46 44"><text x="0.5" y="18" font-family="Liberation Sans" font-size="24" fill="#4aa3df" textLength="15.5" lengthAdjust="spacingAndGlyphs">A</text><text x="1" y="42" font-family="Liberation Sans" font-size="23" fill="#d8d8d8" textLength="14" lengthAdjust="spacingAndGlyphs">Z</text><path d="M20 11 H44 L35 23 V34 H29.5 V23 Z" stroke="#d8d8d8" stroke-width="1.8" fill="none" stroke-linejoin="round"/></svg>
<div style="position:absolute;left:1725.00px;top:193.10px;font-family:'Liberation Sans', sans-serif;font-size:17.6px;line-height:17.6px;font-weight:normal;color:#ffffff;white-space:pre;">Sort &amp;</div>
<div style="position:absolute;left:1725.00px;top:217.10px;font-family:'Liberation Sans', sans-serif;font-size:17.6px;line-height:17.6px;font-weight:normal;color:#ffffff;white-space:pre;">Filter</div>
<svg style="position:absolute;left:1765.50px;top:222.00px;" width="10.5" height="8.5" viewBox="0 0 10.5 8.5"><path d="M1.2 1.2 L5.25 6.4 L9.3 1.2" stroke="#f0f0f0" stroke-width="1.9" fill="none" stroke-linejoin="miter"/></svg>
<svg style="position:absolute;left:1797.00px;top:140.00px;" width="46" height="46" viewBox="0 0 46 46"><circle cx="28" cy="16" r="14.5" stroke="#d8d8d8" stroke-width="1.8" fill="none"/><path d="M17.5 26.5 L1.5 43" stroke="#d8d8d8" stroke-width="1.8"/></svg>
<div style="position:absolute;left:1795.00px;top:193.10px;font-family:'Liberation Sans', sans-serif;font-size:17.6px;line-height:17.6px;font-weight:normal;color:#ffffff;white-space:pre;">Find &amp;</div>
<div style="position:absolute;left:1790.00px;top:217.10px;font-family:'Liberation Sans', sans-serif;font-size:17.6px;line-height:17.6px;font-weight:normal;color:#ffffff;white-space:pre;">Select</div>
<svg style="position:absolute;left:1841.50px;top:222.00px;" width="10.5" height="8.5" viewBox="0 0 10.5 8.5"><path d="M1.2 1.2 L5.25 6.4 L9.3 1.2" stroke="#f0f0f0" stroke-width="1.9" fill="none" stroke-linejoin="miter"/></svg>
<div style="position:absolute;left:1682.00px;top:255.71px;font-family:'Liberation Sans', sans-serif;font-size:15.7px;line-height:15.7px;font-weight:normal;color:#ffffff;white-space:pre;">Editing</div>
<div style="position:absolute;left:1867.90px;top:135.00px;width:1.00px;height:134.00px;background:#5c5c5c;"></div>
<svg style="position:absolute;left:1894.00px;top:140.00px;" width="44" height="44" viewBox="0 0 44 44"><rect x="1.5" y="1.5" width="41" height="41" stroke="#d35a2a" stroke-width="2.4" fill="none"/><rect x="7.5" y="7.5" width="12" height="12" stroke="#d35a2a" stroke-width="2.2" fill="none"/><rect x="24.5" y="7.5" width="12" height="12" stroke="#d35a2a" stroke-width="2.2" fill="none"/><rect x="7.5" y="24.5" width="12" height="12" stroke="#d35a2a" stroke-width="2.2" fill="none"/><rect x="24.5" y="24.5" width="12" height="12" stroke="#d35a2a" stroke-width="2.2" fill="none"/></svg>
<div style="position:absolute;left:1885.00px;top:192.59px;font-family:'Liberation Sans', sans-serif;font-size:18.2px;line-height:18.2px;font-weight:normal;color:#ffffff;white-space:pre;">Add-ins</div>
<div style="position:absolute;left:1887.70px;top:255.63px;font-family:'Liberation Sans', sans-serif;font-size:15.8px;line-height:15.8px;font-weight:normal;color:#ffffff;white-space:pre;">Add-ins</div>
<div style="position:absolute;left:1962.90px;top:135.00px;width:1.00px;height:134.00px;background:#5c5c5c;"></div>
<svg style="position:absolute;left:1988.00px;top:140.00px;" width="44" height="44" viewBox="0 0 44 44"><rect x="1" y="1" width="41" height="41" stroke="#cfcfcf" stroke-width="1.6" fill="none"/><rect x="1" y="1" width="41" height="5" fill="#8a8a8a"/><path d="M1 14 H42 M1 26 H42 M1 36 H42 M12 6 V42 M30 6 V42" stroke="#9a9a9a" stroke-width="1.2"/><circle cx="21" cy="19.5" r="11.5" stroke="#dcdcdc" stroke-width="1.8" fill="#292929"/><rect x="14.5" y="18" width="3.5" height="8" fill="#8a8a8a"/><rect x="19.5" y="13" width="3.5" height="13" fill="#bcbcbc"/><rect x="24.5" y="15.5" width="3.5" height="10.5" fill="#4aa3df"/><path d="M29.5 28 L41 40.5" stroke="#dcdcdc" stroke-width="1.8"/></svg>
<div style="position:absolute;left:1979.80px;top:193.44px;font-family:'Liberation Sans', sans-serif;font-size:17.2px;line-height:17.2px;font-weight:normal;color:#ffffff;white-space:pre;">Analyze</div>
<div style="position:absolute;left:1992.00px;top:217.44px;font-family:'Liberation Sans', sans-serif;font-size:17.2px;line-height:17.2px;font-weight:normal;color:#ffffff;white-space:pre;">Data</div>
<div style="position:absolute;left:2055.50px;top:135.00px;width:1.00px;height:134.00px;background:#5c5c5c;"></div>
<div style="position:absolute;left:2156.5px;top:142.5px;width:112px;height:112px;border-radius:50%;background:#ffffff"></div>
<div style="position:absolute;left:2181.60px;top:173.00px;width:61.40px;height:52.60px;background:#5b63e8;"></div>
<div style="position:absolute;left:2190.00px;top:181.00px;width:19.00px;height:14.60px;background:#ffffff;"></div>
<div style="position:absolute;left:2216.00px;top:181.00px;width:19.00px;height:14.60px;background:#ffffff;"></div>
<div style="position:absolute;left:2190.00px;top:203.00px;width:19.00px;height:15.00px;background:#ffffff;"></div>
<div style="position:absolute;left:2216.00px;top:203.00px;width:19.00px;height:15.00px;background:#ffffff;"></div>
<div style="position:absolute;left:2295.60px;top:155.68px;font-family:'Liberation Sans', sans-serif;font-size:50px;line-height:50px;font-weight:bold;color:#fff;white-space:pre;transform:scaleX(0.708);transform-origin:0.00px 0;-webkit-text-stroke:2.2px #fff">F</div>
<div style="position:absolute;left:2321.50px;top:155.68px;font-family:'Liberation Sans', sans-serif;font-size:50px;line-height:50px;font-weight:bold;color:#fff;white-space:pre;transform:scaleX(0.576);transform-origin:0.00px 0;-webkit-text-stroke:2.2px #fff">I</div>
<div style="position:absolute;left:2334.90px;top:155.68px;font-family:'Liberation Sans', sans-serif;font-size:50px;line-height:50px;font-weight:bold;color:#fff;white-space:pre;transform:scaleX(0.837);transform-origin:0.00px 0;-webkit-text-stroke:2.2px #fff">N</div>
<div style="position:absolute;left:2371.00px;top:155.68px;font-family:'Liberation Sans', sans-serif;font-size:50px;line-height:50px;font-weight:bold;color:#fff;white-space:pre;transform:scaleX(0.921);transform-origin:0.00px 0;-webkit-text-stroke:2.2px #fff">M</div>
<div style="position:absolute;left:2453.50px;top:155.68px;font-family:'Liberation Sans', sans-serif;font-size:50px;line-height:50px;font-weight:bold;color:#fff;white-space:pre;transform:scaleX(0.837);transform-origin:0.00px 0;-webkit-text-stroke:2.2px #fff">D</div>
<div style="position:absolute;left:2488.30px;top:155.68px;font-family:'Liberation Sans', sans-serif;font-size:50px;line-height:50px;font-weight:bold;color:#fff;white-space:pre;transform:scaleX(0.611);transform-origin:0.00px 0;-webkit-text-stroke:2.2px #fff">E</div>
<div style="position:absolute;left:2513.70px;top:155.68px;font-family:'Liberation Sans', sans-serif;font-size:50px;line-height:50px;font-weight:bold;color:#fff;white-space:pre;transform:scaleX(0.626);transform-origin:0.00px 0;-webkit-text-stroke:2.2px #fff">L</div>
<div style="position:absolute;left:2535.10px;top:155.68px;font-family:'Liberation Sans', sans-serif;font-size:50px;line-height:50px;font-weight:bold;color:#fff;white-space:pre;transform:scaleX(0.772);transform-origin:0.00px 0;-webkit-text-stroke:2.2px #fff">S</div>
<div style="position:absolute;left:2565.50px;top:155.68px;font-family:'Liberation Sans', sans-serif;font-size:50px;line-height:50px;font-weight:bold;color:#fff;white-space:pre;transform:scaleX(0.623);transform-origin:0.00px 0;-webkit-text-stroke:2.2px #fff">L</div>
<div style="position:absolute;left:2586.90px;top:155.68px;font-family:'Liberation Sans', sans-serif;font-size:50px;line-height:50px;font-weight:bold;color:#fff;white-space:pre;transform:scaleX(0.939);transform-origin:0.00px 0;-webkit-text-stroke:2.2px #fff">A</div>
<div style="position:absolute;left:2624.50px;top:155.68px;font-family:'Liberation Sans', sans-serif;font-size:50px;line-height:50px;font-weight:bold;color:#fff;white-space:pre;transform:scaleX(0.737);transform-origin:0.00px 0;-webkit-text-stroke:2.2px #fff">B</div>
<svg style="position:absolute;left:2410.00px;top:150.00px;" width="44" height="52" viewBox="0 0 44 52"><circle cx="21.6" cy="30.3" r="13.6" stroke="#fff" stroke-width="8.2" fill="none"/>
      <rect x="15.3" y="10" width="12.6" height="14" fill="#292929"/>
      <rect x="17.3" y="4.7" width="8.5" height="26.8" rx="4.2" fill="#fff"/></svg>
<div style="position:absolute;left:2295.40px;top:206.73px;font-family:'Liberation Sans', sans-serif;font-size:36px;line-height:36px;font-weight:normal;color:#fff;white-space:pre;transform:scaleX(1.014);transform-origin:0.00px 0;">T</div>
<div style="position:absolute;left:2338.00px;top:206.73px;font-family:'Liberation Sans', sans-serif;font-size:36px;line-height:36px;font-weight:normal;color:#fff;white-space:pre;transform:scaleX(1.015);transform-origin:0.00px 0;">e</div>
<div style="position:absolute;left:2383.00px;top:206.73px;font-family:'Liberation Sans', sans-serif;font-size:36px;line-height:36px;font-weight:normal;color:#fff;white-space:pre;transform:scaleX(0.967);transform-origin:0.00px 0;">m</div>
<div style="position:absolute;left:2438.70px;top:206.73px;font-family:'Liberation Sans', sans-serif;font-size:36px;line-height:36px;font-weight:normal;color:#fff;white-space:pre;transform:scaleX(0.965);transform-origin:0.00px 0;">p</div>
<div style="position:absolute;left:2483.80px;top:206.73px;font-family:'Liberation Sans', sans-serif;font-size:36px;line-height:36px;font-weight:normal;color:#fff;white-space:pre;transform:scaleX(0.400);transform-origin:0.00px 0;">l</div>
<div style="position:absolute;left:2512.00px;top:206.73px;font-family:'Liberation Sans', sans-serif;font-size:36px;line-height:36px;font-weight:normal;color:#fff;white-space:pre;transform:scaleX(0.896);transform-origin:0.00px 0;">a</div>
<div style="position:absolute;left:2554.00px;top:206.73px;font-family:'Liberation Sans', sans-serif;font-size:36px;line-height:36px;font-weight:normal;color:#fff;white-space:pre;transform:scaleX(1.200);transform-origin:0.00px 0;">t</div>
<div style="position:absolute;left:2590.00px;top:206.73px;font-family:'Liberation Sans', sans-serif;font-size:36px;line-height:36px;font-weight:normal;color:#fff;white-space:pre;transform:scaleX(1.000);transform-origin:0.00px 0;">e</div>
<div style="position:absolute;left:2633.80px;top:206.73px;font-family:'Liberation Sans', sans-serif;font-size:36px;line-height:36px;font-weight:normal;color:#fff;white-space:pre;transform:scaleX(0.989);transform-origin:0.00px 0;">s</div>
<svg style="position:absolute;left:2849.50px;top:252.50px;" width="16" height="11" viewBox="0 0 16 11"><path d="M1.2 1.2 L8.0 9.2 L14.8 1.2" stroke="#ffffff" stroke-width="1.7" fill="none" stroke-linejoin="miter"/></svg>
<div style="position:absolute;left:11.00px;top:278.00px;width:43.00px;height:1392.00px;background:#262626;"></div>
<div style="position:absolute;left:54.00px;top:278.00px;width:2806.00px;height:19.00px;background:#0c0c0c;"></div>
<div style="position:absolute;left:54.00px;top:297.00px;width:33.00px;height:1373.00px;background:#0c0c0c;"></div>
<div style="position:absolute;left:87.00px;top:297.00px;width:2773.00px;height:1373.00px;background:#ffffff;"></div>
<div style="position:absolute;left:13.2px;top:278.3px;width:14.8px;height:14.899999999999999px;border:1.5px solid #f4f4f4;background:#dedede;color:#333;font-family:'Liberation Sans', sans-serif;font-size:13px;line-height:15px;text-align:center">1</div>
<div style="position:absolute;left:32.7px;top:278.3px;width:14.8px;height:14.899999999999999px;border:1.5px solid #f4f4f4;background:#dedede;color:#333;font-family:'Liberation Sans', sans-serif;font-size:13px;line-height:15px;text-align:center">2</div>
<div style="position:absolute;left:13.4px;top:547.0px;width:15.6px;height:15.8px;border:1.5px solid #f8f8f8;background:#e2e2e2"></div>
<div style="position:absolute;left:19.00px;top:555.50px;width:8.00px;height:1.80px;background:#505050;"></div>
<div style="position:absolute;left:22.10px;top:552.50px;width:1.80px;height:7.80px;background:#505050;"></div>
<div style="position:absolute;left:13.4px;top:567.3px;width:15.6px;height:15.8px;border:1.5px solid #f8f8f8;background:#e2e2e2"></div>
<div style="position:absolute;left:19.00px;top:575.80px;width:8.00px;height:1.80px;background:#505050;"></div>
<div style="position:absolute;left:22.10px;top:572.80px;width:1.80px;height:7.80px;background:#505050;"></div>
<svg style="position:absolute;left:72.00px;top:283.00px;" width="13" height="12" viewBox="0 0 13 12"><polygon points="12,0 12,11 0,11" fill="#6a6a6a"/></svg>
<div style="position:absolute;left:87.00px;top:278.00px;width:23.60px;height:19.00px;background:#5e5e5e;"></div>
<div style="position:absolute;left:87.00px;top:295.50px;width:23.60px;height:2.00px;background:#21a366;"></div>
<div style="position:absolute;left:110.10px;top:278.00px;width:1.00px;height:19.00px;background:#505050;"></div>
<div style="position:absolute;left:-401.20px;width:1000px;top:280.46px;font-family:'Liberation Sans', sans-serif;font-size:16px;line-height:16px;font-weight:normal;color:#e8e8e8;white-space:pre;text-align:center;">A</div>
<div style="position:absolute;left:122.10px;top:278.00px;width:1.00px;height:19.00px;background:#505050;"></div>
<div style="position:absolute;left:-383.40px;width:1000px;top:280.46px;font-family:'Liberation Sans', sans-serif;font-size:16px;line-height:16px;font-weight:normal;color:#e8e8e8;white-space:pre;text-align:center;">B</div>
<div style="position:absolute;left:134.50px;top:278.00px;width:1.00px;height:19.00px;background:#505050;"></div>
<div style="position:absolute;left:-371.20px;width:1000px;top:280.46px;font-family:'Liberation Sans', sans-serif;font-size:16px;line-height:16px;font-weight:normal;color:#e8e8e8;white-space:pre;text-align:center;">C</div>
<div style="position:absolute;left:166.50px;top:278.00px;width:1.00px;height:19.00px;background:#505050;"></div>
<div style="position:absolute;left:-349.00px;width:1000px;top:280.46px;font-family:'Liberation Sans', sans-serif;font-size:16px;line-height:16px;font-weight:normal;color:#e8e8e8;white-space:pre;text-align:center;">D</div>
<div style="position:absolute;left:198.50px;top:278.00px;width:1.00px;height:19.00px;background:#505050;"></div>
<div style="position:absolute;left:-317.00px;width:1000px;top:280.46px;font-family:'Liberation Sans', sans-serif;font-size:16px;line-height:16px;font-weight:normal;color:#e8e8e8;white-space:pre;text-align:center;">E</div>
<div style="position:absolute;left:349.50px;top:278.00px;width:1.00px;height:19.00px;background:#505050;"></div>
<div style="position:absolute;left:-225.50px;width:1000px;top:280.46px;font-family:'Liberation Sans', sans-serif;font-size:16px;line-height:16px;font-weight:normal;color:#e8e8e8;white-space:pre;text-align:center;">F</div>
<div style="position:absolute;left:501.10px;top:278.00px;width:1.00px;height:19.00px;background:#505050;"></div>
<div style="position:absolute;left:-74.20px;width:1000px;top:280.46px;font-family:'Liberation Sans', sans-serif;font-size:16px;line-height:16px;font-weight:normal;color:#e8e8e8;white-space:pre;text-align:center;">G</div>
<div style="position:absolute;left:651.50px;top:278.00px;width:1.00px;height:19.00px;background:#505050;"></div>
<div style="position:absolute;left:76.80px;width:1000px;top:280.46px;font-family:'Liberation Sans', sans-serif;font-size:16px;line-height:16px;font-weight:normal;color:#e8e8e8;white-space:pre;text-align:center;">H</div>
<div style="position:absolute;left:802.90px;top:278.00px;width:1.00px;height:19.00px;background:#505050;"></div>
<div style="position:absolute;left:227.70px;width:1000px;top:280.46px;font-family:'Liberation Sans', sans-serif;font-size:16px;line-height:16px;font-weight:normal;color:#e8e8e8;white-space:pre;text-align:center;">I</div>
<div style="position:absolute;left:921.90px;top:278.00px;width:1.00px;height:19.00px;background:#505050;"></div>
<div style="position:absolute;left:362.90px;width:1000px;top:280.46px;font-family:'Liberation Sans', sans-serif;font-size:16px;line-height:16px;font-weight:normal;color:#e8e8e8;white-space:pre;text-align:center;">J</div>
<div style="position:absolute;left:1040.90px;top:278.00px;width:1.00px;height:19.00px;background:#505050;"></div>
<div style="position:absolute;left:481.90px;width:1000px;top:280.46px;font-family:'Liberation Sans', sans-serif;font-size:16px;line-height:16px;font-weight:normal;color:#e8e8e8;white-space:pre;text-align:center;">K</div>
<div style="position:absolute;left:1159.90px;top:278.00px;width:1.00px;height:19.00px;background:#505050;"></div>
<div style="position:absolute;left:600.90px;width:1000px;top:280.46px;font-family:'Liberation Sans', sans-serif;font-size:16px;line-height:16px;font-weight:normal;color:#e8e8e8;white-space:pre;text-align:center;">L</div>
<div style="position:absolute;left:1278.90px;top:278.00px;width:1.00px;height:19.00px;background:#505050;"></div>
<div style="position:absolute;left:719.90px;width:1000px;top:280.46px;font-family:'Liberation Sans', sans-serif;font-size:16px;line-height:16px;font-weight:normal;color:#e8e8e8;white-space:pre;text-align:center;">M</div>
<div style="position:absolute;left:1397.90px;top:278.00px;width:1.00px;height:19.00px;background:#505050;"></div>
<div style="position:absolute;left:838.90px;width:1000px;top:280.46px;font-family:'Liberation Sans', sans-serif;font-size:16px;line-height:16px;font-weight:normal;color:#e8e8e8;white-space:pre;text-align:center;">N</div>
<div style="position:absolute;left:1516.90px;top:278.00px;width:1.00px;height:19.00px;background:#505050;"></div>
<div style="position:absolute;left:957.90px;width:1000px;top:280.46px;font-family:'Liberation Sans', sans-serif;font-size:16px;line-height:16px;font-weight:normal;color:#e8e8e8;white-space:pre;text-align:center;">O</div>
<div style="position:absolute;left:1635.90px;top:278.00px;width:1.00px;height:19.00px;background:#505050;"></div>
<div style="position:absolute;left:1076.90px;width:1000px;top:280.46px;font-family:'Liberation Sans', sans-serif;font-size:16px;line-height:16px;font-weight:normal;color:#e8e8e8;white-space:pre;text-align:center;">P</div>
<div style="position:absolute;left:1754.90px;top:278.00px;width:1.00px;height:19.00px;background:#505050;"></div>
<div style="position:absolute;left:1195.90px;width:1000px;top:280.46px;font-family:'Liberation Sans', sans-serif;font-size:16px;line-height:16px;font-weight:normal;color:#e8e8e8;white-space:pre;text-align:center;">Q</div>
<div style="position:absolute;left:1873.90px;top:278.00px;width:1.00px;height:19.00px;background:#505050;"></div>
<div style="position:absolute;left:1314.90px;width:1000px;top:280.46px;font-family:'Liberation Sans', sans-serif;font-size:16px;line-height:16px;font-weight:normal;color:#e8e8e8;white-space:pre;text-align:center;">R</div>
<div style="position:absolute;left:1992.90px;top:278.00px;width:1.00px;height:19.00px;background:#505050;"></div>
<div style="position:absolute;left:1433.90px;width:1000px;top:280.46px;font-family:'Liberation Sans', sans-serif;font-size:16px;line-height:16px;font-weight:normal;color:#e8e8e8;white-space:pre;text-align:center;">S</div>
<div style="position:absolute;left:2111.90px;top:278.00px;width:1.00px;height:19.00px;background:#505050;"></div>
<div style="position:absolute;left:1552.90px;width:1000px;top:280.46px;font-family:'Liberation Sans', sans-serif;font-size:16px;line-height:16px;font-weight:normal;color:#e8e8e8;white-space:pre;text-align:center;">T</div>
<div style="position:absolute;left:2230.90px;top:278.00px;width:1.00px;height:19.00px;background:#505050;"></div>
<div style="position:absolute;left:1671.90px;width:1000px;top:280.46px;font-family:'Liberation Sans', sans-serif;font-size:16px;line-height:16px;font-weight:normal;color:#e8e8e8;white-space:pre;text-align:center;">U</div>
<div style="position:absolute;left:2349.90px;top:278.00px;width:1.00px;height:19.00px;background:#505050;"></div>
<div style="position:absolute;left:1790.90px;width:1000px;top:280.46px;font-family:'Liberation Sans', sans-serif;font-size:16px;line-height:16px;font-weight:normal;color:#e8e8e8;white-space:pre;text-align:center;">V</div>
<div style="position:absolute;left:2468.90px;top:278.00px;width:1.00px;height:19.00px;background:#505050;"></div>
<div style="position:absolute;left:1909.90px;width:1000px;top:280.46px;font-family:'Liberation Sans', sans-serif;font-size:16px;line-height:16px;font-weight:normal;color:#e8e8e8;white-space:pre;text-align:center;">W</div>
<div style="position:absolute;left:2587.90px;top:278.00px;width:1.00px;height:19.00px;background:#505050;"></div>
<div style="position:absolute;left:2028.90px;width:1000px;top:280.46px;font-family:'Liberation Sans', sans-serif;font-size:16px;line-height:16px;font-weight:normal;color:#e8e8e8;white-space:pre;text-align:center;">X</div>
<div style="position:absolute;left:2706.90px;top:278.00px;width:1.00px;height:19.00px;background:#505050;"></div>
<div style="position:absolute;left:2147.90px;width:1000px;top:280.46px;font-family:'Liberation Sans', sans-serif;font-size:16px;line-height:16px;font-weight:normal;color:#e8e8e8;white-space:pre;text-align:center;">Y</div>
<div style="position:absolute;left:2825.90px;top:278.00px;width:1.00px;height:19.00px;background:#505050;"></div>
<div style="position:absolute;left:2266.90px;width:1000px;top:280.46px;font-family:'Liberation Sans', sans-serif;font-size:16px;line-height:16px;font-weight:normal;color:#e8e8e8;white-space:pre;text-align:center;">Z</div>
<div style="position:absolute;left:2944.90px;top:278.00px;width:1.00px;height:19.00px;background:#505050;"></div>
<div style="position:absolute;left:54.00px;top:297.00px;width:33.00px;height:35.70px;background:#6b6b6b;"></div>
<div style="position:absolute;left:54px;top:297.00px;width:33px;height:35.70px;overflow:hidden"><div style="position:absolute;left:0;width:33px;top:18.43px;font-family:'Liberation Sans', sans-serif;font-size:16.5px;line-height:16.5px;color:#f0f0f0;text-align:center">1</div></div>
<div style="position:absolute;left:54.00px;top:332.10px;width:33.00px;height:1.20px;background:#4a4a4a;"></div>
<div style="position:absolute;left:54px;top:332.70px;width:33px;height:29.70px;overflow:hidden"><div style="position:absolute;left:0;width:33px;top:12.43px;font-family:'Liberation Sans', sans-serif;font-size:16.5px;line-height:16.5px;color:#f0f0f0;text-align:center">2</div></div>
<div style="position:absolute;left:54.00px;top:361.80px;width:33.00px;height:1.20px;background:#4a4a4a;"></div>
<div style="position:absolute;left:54px;top:362.40px;width:33px;height:17.90px;overflow:hidden"><div style="position:absolute;left:0;width:33px;top:0.63px;font-family:'Liberation Sans', sans-serif;font-size:16.5px;line-height:16.5px;color:#f0f0f0;text-align:center">3</div></div>
<div style="position:absolute;left:54.00px;top:379.70px;width:33.00px;height:1.20px;background:#4a4a4a;"></div>
<div style="position:absolute;left:54.00px;top:383.70px;width:33.00px;height:1.20px;background:#4a4a4a;"></div>
<div style="position:absolute;left:54px;top:384.30px;width:33px;height:32.00px;overflow:hidden"><div style="position:absolute;left:0;width:33px;top:14.73px;font-family:'Liberation Sans', sans-serif;font-size:16.5px;line-height:16.5px;color:#f0f0f0;text-align:center">5</div></div>
<div style="position:absolute;left:54.00px;top:415.70px;width:33.00px;height:1.20px;background:#4a4a4a;"></div>
<div style="position:absolute;left:54px;top:416.30px;width:33px;height:20.30px;overflow:hidden"><div style="position:absolute;left:0;width:33px;top:3.03px;font-family:'Liberation Sans', sans-serif;font-size:16.5px;line-height:16.5px;color:#f0f0f0;text-align:center">6</div></div>
<div style="position:absolute;left:54.00px;top:436.00px;width:33.00px;height:1.20px;background:#4a4a4a;"></div>
<div style="position:absolute;left:54px;top:436.60px;width:33px;height:17.60px;overflow:hidden"><div style="position:absolute;left:0;width:33px;top:0.33px;font-family:'Liberation Sans', sans-serif;font-size:16.5px;line-height:16.5px;color:#f0f0f0;text-align:center">7</div></div>
<div style="position:absolute;left:54.00px;top:453.60px;width:33.00px;height:1.20px;background:#4a4a4a;"></div>
<div style="position:absolute;left:54px;top:458.20px;width:33px;height:18.00px;overflow:hidden"><div style="position:absolute;left:0;width:33px;top:0.73px;font-family:'Liberation Sans', sans-serif;font-size:16.5px;line-height:16.5px;color:#f0f0f0;text-align:center">13</div></div>
<div style="position:absolute;left:54.00px;top:475.60px;width:33.00px;height:1.20px;background:#4a4a4a;"></div>
<div style="position:absolute;left:54px;top:476.20px;width:33px;height:25.10px;overflow:hidden"><div style="position:absolute;left:0;width:33px;top:7.83px;font-family:'Liberation Sans', sans-serif;font-size:16.5px;line-height:16.5px;color:#f0f0f0;text-align:center">14</div></div>
<div style="position:absolute;left:54.00px;top:500.70px;width:33.00px;height:1.20px;background:#4a4a4a;"></div>
<div style="position:absolute;left:54px;top:501.30px;width:33px;height:14.00px;overflow:hidden"><div style="position:absolute;left:0;width:33px;top:-3.27px;font-family:'Liberation Sans', sans-serif;font-size:16.5px;line-height:16.5px;color:#f0f0f0;text-align:center">15</div></div>
<div style="position:absolute;left:54.00px;top:514.70px;width:33.00px;height:1.20px;background:#4a4a4a;"></div>
<div style="position:absolute;left:54px;top:515.30px;width:33px;height:22.90px;overflow:hidden"><div style="position:absolute;left:0;width:33px;top:5.63px;font-family:'Liberation Sans', sans-serif;font-size:16.5px;line-height:16.5px;color:#f0f0f0;text-align:center">16</div></div>
<div style="position:absolute;left:54.00px;top:537.60px;width:33.00px;height:1.20px;background:#4a4a4a;"></div>
<div style="position:absolute;left:54px;top:538.20px;width:33px;height:6.30px;overflow:hidden"><div style="position:absolute;left:0;width:33px;top:-10.97px;font-family:'Liberation Sans', sans-serif;font-size:16.5px;line-height:16.5px;color:#f0f0f0;text-align:center">17</div></div>
<div style="position:absolute;left:54.00px;top:543.90px;width:33.00px;height:1.20px;background:#4a4a4a;"></div>
<div style="position:absolute;left:54.00px;top:548.10px;width:33.00px;height:1.20px;background:#4a4a4a;"></div>
<div style="position:absolute;left:54px;top:548.70px;width:33px;height:15.70px;overflow:hidden"><div style="position:absolute;left:0;width:33px;top:0.43px;font-family:'Liberation Sans', sans-serif;font-size:16.5px;line-height:16.5px;color:#f0f0f0;text-align:center">19</div></div>
<div style="position:absolute;left:54.00px;top:563.80px;width:33.00px;height:1.20px;background:#4a4a4a;"></div>
<div style="position:absolute;left:54px;top:568.40px;width:33px;height:18.20px;overflow:hidden"><div style="position:absolute;left:0;width:33px;top:0.93px;font-family:'Liberation Sans', sans-serif;font-size:16.5px;line-height:16.5px;color:#f0f0f0;text-align:center">22</div></div>
<div style="position:absolute;left:54.00px;top:586.00px;width:33.00px;height:1.20px;background:#4a4a4a;"></div>
<div style="position:absolute;left:54px;top:586.60px;width:33px;height:19.80px;overflow:hidden"><div style="position:absolute;left:0;width:33px;top:2.53px;font-family:'Liberation Sans', sans-serif;font-size:16.5px;line-height:16.5px;color:#f0f0f0;text-align:center">23</div></div>
<div style="position:absolute;left:54.00px;top:605.80px;width:33.00px;height:1.20px;background:#4a4a4a;"></div>
<div style="position:absolute;left:54px;top:606.40px;width:33px;height:19.80px;overflow:hidden"><div style="position:absolute;left:0;width:33px;top:2.53px;font-family:'Liberation Sans', sans-serif;font-size:16.5px;line-height:16.5px;color:#f0f0f0;text-align:center">24</div></div>
<div style="position:absolute;left:54.00px;top:625.60px;width:33.00px;height:1.20px;background:#4a4a4a;"></div>
<div style="position:absolute;left:54px;top:626.20px;width:33px;height:20.30px;overflow:hidden"><div style="position:absolute;left:0;width:33px;top:3.03px;font-family:'Liberation Sans', sans-serif;font-size:16.5px;line-height:16.5px;color:#f0f0f0;text-align:center">25</div></div>
<div style="position:absolute;left:54.00px;top:645.90px;width:33.00px;height:1.20px;background:#4a4a4a;"></div>
<div style="position:absolute;left:54px;top:646.50px;width:33px;height:17.30px;overflow:hidden"><div style="position:absolute;left:0;width:33px;top:0.03px;font-family:'Liberation Sans', sans-serif;font-size:16.5px;line-height:16.5px;color:#f0f0f0;text-align:center">26</div></div>
<div style="position:absolute;left:54.00px;top:663.20px;width:33.00px;height:1.20px;background:#4a4a4a;"></div>
<div style="position:absolute;left:54px;top:663.80px;width:33px;height:22.70px;overflow:hidden"><div style="position:absolute;left:0;width:33px;top:5.43px;font-family:'Liberation Sans', sans-serif;font-size:16.5px;line-height:16.5px;color:#f0f0f0;text-align:center">27</div></div>
<div style="position:absolute;left:54.00px;top:685.90px;width:33.00px;height:1.20px;background:#4a4a4a;"></div>
<div style="position:absolute;left:54.00px;top:689.60px;width:33.00px;height:1.20px;background:#4a4a4a;"></div>
<div style="position:absolute;left:54px;top:690.20px;width:33px;height:19.90px;overflow:hidden"><div style="position:absolute;left:0;width:33px;top:2.63px;font-family:'Liberation Sans', sans-serif;font-size:16.5px;line-height:16.5px;color:#f0f0f0;text-align:center">29</div></div>
<div style="position:absolute;left:54.00px;top:709.50px;width:33.00px;height:1.20px;background:#4a4a4a;"></div>
<div style="position:absolute;left:54.00px;top:713.80px;width:33.00px;height:1.20px;background:#4a4a4a;"></div>
<div style="position:absolute;left:54px;top:714.40px;width:33px;height:20.00px;overflow:hidden"><div style="position:absolute;left:0;width:33px;top:2.73px;font-family:'Liberation Sans', sans-serif;font-size:16.5px;line-height:16.5px;color:#f0f0f0;text-align:center">31</div></div>
<div style="position:absolute;left:54.00px;top:733.80px;width:33.00px;height:1.20px;background:#4a4a4a;"></div>
<div style="position:absolute;left:54px;top:734.40px;width:33px;height:17.30px;overflow:hidden"><div style="position:absolute;left:0;width:33px;top:0.03px;font-family:'Liberation Sans', sans-serif;font-size:16.5px;line-height:16.5px;color:#f0f0f0;text-align:center">32</div></div>
<div style="position:absolute;left:54.00px;top:751.10px;width:33.00px;height:1.20px;background:#4a4a4a;"></div>
<div style="position:absolute;left:54px;top:751.70px;width:33px;height:22.90px;overflow:hidden"><div style="position:absolute;left:0;width:33px;top:5.63px;font-family:'Liberation Sans', sans-serif;font-size:16.5px;line-height:16.5px;color:#f0f0f0;text-align:center">33</div></div>
<div style="position:absolute;left:54.00px;top:774.00px;width:33.00px;height:1.20px;background:#4a4a4a;"></div>
<div style="position:absolute;left:54.00px;top:778.00px;width:33.00px;height:1.20px;background:#4a4a4a;"></div>
<div style="position:absolute;left:54px;top:778.60px;width:33px;height:19.90px;overflow:hidden"><div style="position:absolute;left:0;width:33px;top:2.63px;font-family:'Liberation Sans', sans-serif;font-size:16.5px;line-height:16.5px;color:#f0f0f0;text-align:center">35</div></div>
<div style="position:absolute;left:54.00px;top:797.90px;width:33.00px;height:1.20px;background:#4a4a4a;"></div>
<div style="position:absolute;left:54px;top:798.50px;width:33px;height:20.20px;overflow:hidden"><div style="position:absolute;left:0;width:33px;top:2.93px;font-family:'Liberation Sans', sans-serif;font-size:16.5px;line-height:16.5px;color:#f0f0f0;text-align:center">36</div></div>
<div style="position:absolute;left:54.00px;top:818.10px;width:33.00px;height:1.20px;background:#4a4a4a;"></div>
<div style="position:absolute;left:54px;top:818.70px;width:33px;height:19.60px;overflow:hidden"><div style="position:absolute;left:0;width:33px;top:2.33px;font-family:'Liberation Sans', sans-serif;font-size:16.5px;line-height:16.5px;color:#f0f0f0;text-align:center">37</div></div>
<div style="position:absolute;left:54.00px;top:837.70px;width:33.00px;height:1.20px;background:#4a4a4a;"></div>
<div style="position:absolute;left:54px;top:838.30px;width:33px;height:20.10px;overflow:hidden"><div style="position:absolute;left:0;width:33px;top:2.83px;font-family:'Liberation Sans', sans-serif;font-size:16.5px;line-height:16.5px;color:#f0f0f0;text-align:center">38</div></div>
<div style="position:absolute;left:54.00px;top:857.80px;width:33.00px;height:1.20px;background:#4a4a4a;"></div>
<div style="position:absolute;left:54px;top:858.40px;width:33px;height:20.00px;overflow:hidden"><div style="position:absolute;left:0;width:33px;top:2.73px;font-family:'Liberation Sans', sans-serif;font-size:16.5px;line-height:16.5px;color:#f0f0f0;text-align:center">39</div></div>
<div style="position:absolute;left:54.00px;top:877.80px;width:33.00px;height:1.20px;background:#4a4a4a;"></div>
<div style="position:absolute;left:54px;top:878.40px;width:33px;height:20.00px;overflow:hidden"><div style="position:absolute;left:0;width:33px;top:2.73px;font-family:'Liberation Sans', sans-serif;font-size:16.5px;line-height:16.5px;color:#f0f0f0;text-align:center">40</div></div>
<div style="position:absolute;left:54.00px;top:897.80px;width:33.00px;height:1.20px;background:#4a4a4a;"></div>
<div style="position:absolute;left:54px;top:898.40px;width:33px;height:17.20px;overflow:hidden"><div style="position:absolute;left:0;width:33px;top:-0.07px;font-family:'Liberation Sans', sans-serif;font-size:16.5px;line-height:16.5px;color:#f0f0f0;text-align:center">41</div></div>
<div style="position:absolute;left:54.00px;top:915.00px;width:33.00px;height:1.20px;background:#4a4a4a;"></div>
<div style="position:absolute;left:54px;top:915.60px;width:33px;height:20.00px;overflow:hidden"><div style="position:absolute;left:0;width:33px;top:2.73px;font-family:'Liberation Sans', sans-serif;font-size:16.5px;line-height:16.5px;color:#f0f0f0;text-align:center">42</div></div>
<div style="position:absolute;left:54.00px;top:935.00px;width:33.00px;height:1.20px;background:#4a4a4a;"></div>
<div style="position:absolute;left:54px;top:935.60px;width:33px;height:17.00px;overflow:hidden"><div style="position:absolute;left:0;width:33px;top:-0.27px;font-family:'Liberation Sans', sans-serif;font-size:16.5px;line-height:16.5px;color:#f0f0f0;text-align:center">43</div></div>
<div style="position:absolute;left:54.00px;top:952.00px;width:33.00px;height:1.20px;background:#4a4a4a;"></div>
<div style="position:absolute;left:54px;top:952.60px;width:33px;height:16.90px;overflow:hidden"><div style="position:absolute;left:0;width:33px;top:-0.37px;font-family:'Liberation Sans', sans-serif;font-size:16.5px;line-height:16.5px;color:#f0f0f0;text-align:center">44</div></div>
<div style="position:absolute;left:54.00px;top:968.90px;width:33.00px;height:1.20px;background:#4a4a4a;"></div>
<div style="position:absolute;left:54px;top:969.50px;width:33px;height:24.90px;overflow:hidden"><div style="position:absolute;left:0;width:33px;top:7.63px;font-family:'Liberation Sans', sans-serif;font-size:16.5px;line-height:16.5px;color:#f0f0f0;text-align:center">45</div></div>
<div style="position:absolute;left:54.00px;top:993.80px;width:33.00px;height:1.20px;background:#4a4a4a;"></div>
<div style="position:absolute;left:54px;top:994.40px;width:33px;height:14.20px;overflow:hidden"><div style="position:absolute;left:0;width:33px;top:-3.07px;font-family:'Liberation Sans', sans-serif;font-size:16.5px;line-height:16.5px;color:#f0f0f0;text-align:center">46</div></div>
<div style="position:absolute;left:54.00px;top:1008.00px;width:33.00px;height:1.20px;background:#4a4a4a;"></div>
<div style="position:absolute;left:54px;top:1008.60px;width:33px;height:23.10px;overflow:hidden"><div style="position:absolute;left:0;width:33px;top:5.83px;font-family:'Liberation Sans', sans-serif;font-size:16.5px;line-height:16.5px;color:#f0f0f0;text-align:center">47</div></div>
<div style="position:absolute;left:54.00px;top:1031.10px;width:33.00px;height:1.20px;background:#4a4a4a;"></div>
<div style="position:absolute;left:54px;top:1031.70px;width:33px;height:20.70px;overflow:hidden"><div style="position:absolute;left:0;width:33px;top:3.43px;font-family:'Liberation Sans', sans-serif;font-size:16.5px;line-height:16.5px;color:#f0f0f0;text-align:center">48</div></div>
<div style="position:absolute;left:54.00px;top:1051.80px;width:33.00px;height:1.20px;background:#4a4a4a;"></div>
<div style="position:absolute;left:54px;top:1052.40px;width:33px;height:20.90px;overflow:hidden"><div style="position:absolute;left:0;width:33px;top:3.63px;font-family:'Liberation Sans', sans-serif;font-size:16.5px;line-height:16.5px;color:#f0f0f0;text-align:center">49</div></div>
<div style="position:absolute;left:54.00px;top:1072.70px;width:33.00px;height:1.20px;background:#4a4a4a;"></div>
<div style="position:absolute;left:54px;top:1073.30px;width:33px;height:20.10px;overflow:hidden"><div style="position:absolute;left:0;width:33px;top:2.83px;font-family:'Liberation Sans', sans-serif;font-size:16.5px;line-height:16.5px;color:#f0f0f0;text-align:center">50</div></div>
<div style="position:absolute;left:54.00px;top:1092.80px;width:33.00px;height:1.20px;background:#4a4a4a;"></div>
<div style="position:absolute;left:54px;top:1093.40px;width:33px;height:22.90px;overflow:hidden"><div style="position:absolute;left:0;width:33px;top:5.63px;font-family:'Liberation Sans', sans-serif;font-size:16.5px;line-height:16.5px;color:#f0f0f0;text-align:center">51</div></div>
<div style="position:absolute;left:54.00px;top:1115.70px;width:33.00px;height:1.20px;background:#4a4a4a;"></div>
<div style="position:absolute;left:54px;top:1116.30px;width:33px;height:23.10px;overflow:hidden"><div style="position:absolute;left:0;width:33px;top:5.83px;font-family:'Liberation Sans', sans-serif;font-size:16.5px;line-height:16.5px;color:#f0f0f0;text-align:center">52</div></div>
<div style="position:absolute;left:54.00px;top:1138.80px;width:33.00px;height:1.20px;background:#4a4a4a;"></div>
<div style="position:absolute;left:54px;top:1139.40px;width:33px;height:21.30px;overflow:hidden"><div style="position:absolute;left:0;width:33px;top:4.03px;font-family:'Liberation Sans', sans-serif;font-size:16.5px;line-height:16.5px;color:#f0f0f0;text-align:center">53</div></div>
<div style="position:absolute;left:54.00px;top:1160.10px;width:33.00px;height:1.20px;background:#4a4a4a;"></div>
<div style="position:absolute;left:54px;top:1160.70px;width:33px;height:20.00px;overflow:hidden"><div style="position:absolute;left:0;width:33px;top:2.73px;font-family:'Liberation Sans', sans-serif;font-size:16.5px;line-height:16.5px;color:#f0f0f0;text-align:center">54</div></div>
<div style="position:absolute;left:54.00px;top:1180.10px;width:33.00px;height:1.20px;background:#4a4a4a;"></div>
<div style="position:absolute;left:54px;top:1180.70px;width:33px;height:22.90px;overflow:hidden"><div style="position:absolute;left:0;width:33px;top:5.63px;font-family:'Liberation Sans', sans-serif;font-size:16.5px;line-height:16.5px;color:#f0f0f0;text-align:center">55</div></div>
<div style="position:absolute;left:54.00px;top:1203.00px;width:33.00px;height:1.20px;background:#4a4a4a;"></div>
<div style="position:absolute;left:54px;top:1203.60px;width:33px;height:23.00px;overflow:hidden"><div style="position:absolute;left:0;width:33px;top:5.73px;font-family:'Liberation Sans', sans-serif;font-size:16.5px;line-height:16.5px;color:#f0f0f0;text-align:center">56</div></div>
<div style="position:absolute;left:54.00px;top:1226.00px;width:33.00px;height:1.20px;background:#4a4a4a;"></div>
<div style="position:absolute;left:54px;top:1226.60px;width:33px;height:20.70px;overflow:hidden"><div style="position:absolute;left:0;width:33px;top:3.43px;font-family:'Liberation Sans', sans-serif;font-size:16.5px;line-height:16.5px;color:#f0f0f0;text-align:center">57</div></div>
<div style="position:absolute;left:54.00px;top:1246.70px;width:33.00px;height:1.20px;background:#4a4a4a;"></div>
<div style="position:absolute;left:54px;top:1247.30px;width:33px;height:21.10px;overflow:hidden"><div style="position:absolute;left:0;width:33px;top:3.83px;font-family:'Liberation Sans', sans-serif;font-size:16.5px;line-height:16.5px;color:#f0f0f0;text-align:center">58</div></div>
<div style="position:absolute;left:54.00px;top:1267.80px;width:33.00px;height:1.20px;background:#4a4a4a;"></div>
<div style="position:absolute;left:54px;top:1268.40px;width:33px;height:20.80px;overflow:hidden"><div style="position:absolute;left:0;width:33px;top:3.53px;font-family:'Liberation Sans', sans-serif;font-size:16.5px;line-height:16.5px;color:#f0f0f0;text-align:center">59</div></div>
<div style="position:absolute;left:54.00px;top:1288.60px;width:33.00px;height:1.20px;background:#4a4a4a;"></div>
<div style="position:absolute;left:54px;top:1289.20px;width:33px;height:19.70px;overflow:hidden"><div style="position:absolute;left:0;width:33px;top:2.43px;font-family:'Liberation Sans', sans-serif;font-size:16.5px;line-height:16.5px;color:#f0f0f0;text-align:center">60</div></div>
<div style="position:absolute;left:54.00px;top:1308.30px;width:33.00px;height:1.20px;background:#4a4a4a;"></div>
<div style="position:absolute;left:54px;top:1308.90px;width:33px;height:23.70px;overflow:hidden"><div style="position:absolute;left:0;width:33px;top:6.43px;font-family:'Liberation Sans', sans-serif;font-size:16.5px;line-height:16.5px;color:#f0f0f0;text-align:center">61</div></div>
<div style="position:absolute;left:54.00px;top:1332.00px;width:33.00px;height:1.20px;background:#4a4a4a;"></div>
<div style="position:absolute;left:54px;top:1332.60px;width:33px;height:22.90px;overflow:hidden"><div style="position:absolute;left:0;width:33px;top:5.63px;font-family:'Liberation Sans', sans-serif;font-size:16.5px;line-height:16.5px;color:#f0f0f0;text-align:center">62</div></div>
<div style="position:absolute;left:54.00px;top:1354.90px;width:33.00px;height:1.20px;background:#4a4a4a;"></div>
<div style="position:absolute;left:54px;top:1355.50px;width:33px;height:23.30px;overflow:hidden"><div style="position:absolute;left:0;width:33px;top:6.03px;font-family:'Liberation Sans', sans-serif;font-size:16.5px;line-height:16.5px;color:#f0f0f0;text-align:center">63</div></div>
<div style="position:absolute;left:54.00px;top:1378.20px;width:33.00px;height:1.20px;background:#4a4a4a;"></div>
<div style="position:absolute;left:54px;top:1378.80px;width:33px;height:22.80px;overflow:hidden"><div style="position:absolute;left:0;width:33px;top:5.53px;font-family:'Liberation Sans', sans-serif;font-size:16.5px;line-height:16.5px;color:#f0f0f0;text-align:center">64</div></div>
<div style="position:absolute;left:54.00px;top:1401.00px;width:33.00px;height:1.20px;background:#4a4a4a;"></div>
<div style="position:absolute;left:54px;top:1401.60px;width:33px;height:20.10px;overflow:hidden"><div style="position:absolute;left:0;width:33px;top:2.83px;font-family:'Liberation Sans', sans-serif;font-size:16.5px;line-height:16.5px;color:#f0f0f0;text-align:center">65</div></div>
<div style="position:absolute;left:54.00px;top:1421.10px;width:33.00px;height:1.20px;background:#4a4a4a;"></div>
<div style="position:absolute;left:54px;top:1421.70px;width:33px;height:20.50px;overflow:hidden"><div style="position:absolute;left:0;width:33px;top:3.23px;font-family:'Liberation Sans', sans-serif;font-size:16.5px;line-height:16.5px;color:#f0f0f0;text-align:center">66</div></div>
<div style="position:absolute;left:54.00px;top:1441.60px;width:33.00px;height:1.20px;background:#4a4a4a;"></div>
<div style="position:absolute;left:54px;top:1442.20px;width:33px;height:17.60px;overflow:hidden"><div style="position:absolute;left:0;width:33px;top:0.33px;font-family:'Liberation Sans', sans-serif;font-size:16.5px;line-height:16.5px;color:#f0f0f0;text-align:center">67</div></div>
<div style="position:absolute;left:54.00px;top:1459.20px;width:33.00px;height:1.20px;background:#4a4a4a;"></div>
<div style="position:absolute;left:54px;top:1459.80px;width:33px;height:24.10px;overflow:hidden"><div style="position:absolute;left:0;width:33px;top:6.83px;font-family:'Liberation Sans', sans-serif;font-size:16.5px;line-height:16.5px;color:#f0f0f0;text-align:center">68</div></div>
<div style="position:absolute;left:54.00px;top:1483.30px;width:33.00px;height:1.20px;background:#4a4a4a;"></div>
<div style="position:absolute;left:54px;top:1483.90px;width:33px;height:13.50px;overflow:hidden"><div style="position:absolute;left:0;width:33px;top:-3.77px;font-family:'Liberation Sans', sans-serif;font-size:16.5px;line-height:16.5px;color:#f0f0f0;text-align:center">69</div></div>
<div style="position:absolute;left:54.00px;top:1496.80px;width:33.00px;height:1.20px;background:#4a4a4a;"></div>
<div style="position:absolute;left:54px;top:1497.40px;width:33px;height:19.90px;overflow:hidden"><div style="position:absolute;left:0;width:33px;top:2.63px;font-family:'Liberation Sans', sans-serif;font-size:16.5px;line-height:16.5px;color:#f0f0f0;text-align:center">70</div></div>
<div style="position:absolute;left:54.00px;top:1516.70px;width:33.00px;height:1.20px;background:#4a4a4a;"></div>
<div style="position:absolute;left:54px;top:1517.30px;width:33px;height:19.90px;overflow:hidden"><div style="position:absolute;left:0;width:33px;top:2.63px;font-family:'Liberation Sans', sans-serif;font-size:16.5px;line-height:16.5px;color:#f0f0f0;text-align:center">71</div></div>
<div style="position:absolute;left:54.00px;top:1536.60px;width:33.00px;height:1.20px;background:#4a4a4a;"></div>
<div style="position:absolute;left:54px;top:1537.20px;width:33px;height:20.10px;overflow:hidden"><div style="position:absolute;left:0;width:33px;top:2.83px;font-family:'Liberation Sans', sans-serif;font-size:16.5px;line-height:16.5px;color:#f0f0f0;text-align:center">72</div></div>
<div style="position:absolute;left:54.00px;top:1556.70px;width:33.00px;height:1.20px;background:#4a4a4a;"></div>
<div style="position:absolute;left:54px;top:1557.30px;width:33px;height:20.10px;overflow:hidden"><div style="position:absolute;left:0;width:33px;top:2.83px;font-family:'Liberation Sans', sans-serif;font-size:16.5px;line-height:16.5px;color:#f0f0f0;text-align:center">73</div></div>
<div style="position:absolute;left:54.00px;top:1576.80px;width:33.00px;height:1.20px;background:#4a4a4a;"></div>
<div style="position:absolute;left:54px;top:1577.40px;width:33px;height:19.90px;overflow:hidden"><div style="position:absolute;left:0;width:33px;top:2.63px;font-family:'Liberation Sans', sans-serif;font-size:16.5px;line-height:16.5px;color:#f0f0f0;text-align:center">74</div></div>
<div style="position:absolute;left:54.00px;top:1596.70px;width:33.00px;height:1.20px;background:#4a4a4a;"></div>
<div style="position:absolute;left:54px;top:1597.30px;width:33px;height:20.10px;overflow:hidden"><div style="position:absolute;left:0;width:33px;top:2.83px;font-family:'Liberation Sans', sans-serif;font-size:16.5px;line-height:16.5px;color:#f0f0f0;text-align:center">75</div></div>
<div style="position:absolute;left:54.00px;top:1616.80px;width:33.00px;height:1.20px;background:#4a4a4a;"></div>
<div style="position:absolute;left:54px;top:1617.40px;width:33px;height:19.90px;overflow:hidden"><div style="position:absolute;left:0;width:33px;top:2.63px;font-family:'Liberation Sans', sans-serif;font-size:16.5px;line-height:16.5px;color:#f0f0f0;text-align:center">76</div></div>
<div style="position:absolute;left:54.00px;top:1636.70px;width:33.00px;height:1.20px;background:#4a4a4a;"></div>
<div style="position:absolute;left:54px;top:1637.30px;width:33px;height:20.10px;overflow:hidden"><div style="position:absolute;left:0;width:33px;top:2.83px;font-family:'Liberation Sans', sans-serif;font-size:16.5px;line-height:16.5px;color:#f0f0f0;text-align:center">77</div></div>
<div style="position:absolute;left:54.00px;top:1656.80px;width:33.00px;height:1.20px;background:#4a4a4a;"></div>
<div style="position:absolute;left:54px;top:1657.40px;width:33px;height:12.60px;overflow:hidden"><div style="position:absolute;left:0;width:33px;top:2.73px;font-family:'Liberation Sans', sans-serif;font-size:16.5px;line-height:16.5px;color:#f0f0f0;text-align:center">78</div></div>
<div style="position:absolute;left:54.00px;top:1669.40px;width:33.00px;height:1.20px;background:#4a4a4a;"></div>
<div style="position:absolute;left:54.00px;top:296.50px;width:33.00px;height:1.30px;background:#d8d8d8;"></div>
<div style="position:absolute;left:54.00px;top:332.20px;width:33.00px;height:1.20px;background:#d8d8d8;"></div>
<div style="position:absolute;left:86.60px;top:296.00px;width:1.60px;height:38.00px;background:#21a366;"></div>
<div style="position:absolute;left:54.00px;top:567.80px;width:33.00px;height:1.20px;background:#4a4a4a;"></div>
<div style="position:absolute;left:11.00px;top:455.60px;width:2849.00px;height:1.40px;background:#9a9a9a;"></div>
<div style="position:absolute;left:11.00px;top:454.20px;width:76.00px;height:1.40px;background:#0c0c0c;"></div>
<div style="position:absolute;left:0;top:0;width:2902px;height:1762px;clip-path:inset(0 42px 92px 0)">
<div style="position:absolute;left:115.00px;top:300.44px;font-family:'Liberation Sans', sans-serif;font-size:29.6px;line-height:29.6px;font-weight:bold;color:#222222;white-space:pre;">Cash Flow Statement</div>
<div style="position:absolute;left:114.00px;top:336.06px;font-family:'Liberation Sans', sans-serif;font-size:24.5px;line-height:24.5px;font-weight:bold;color:#000000;white-space:pre;">ABC Company Inc.</div>
<div style="position:absolute;left:113.50px;top:362.84px;font-family:'Liberation Sans', sans-serif;font-size:17.2px;line-height:17.2px;font-weight:bold;color:#3b7de0;white-space:pre;text-decoration:underline;text-underline-offset:2px;text-decoration-thickness:1.5px">Go to Table of Contents</div>
<div style="position:absolute;left:113.50px;top:419.53px;font-family:'Liberation Sans', sans-serif;font-size:16.5px;line-height:16.5px;font-weight:bold;color:#000;white-space:pre;">Fiscal year</div>
<div style="position:absolute;left:113.50px;top:439.43px;font-family:'Liberation Sans', sans-serif;font-size:16.5px;line-height:16.5px;font-weight:bold;color:#000;white-space:pre;">Month</div>
<div style="position:absolute;right:1983.60px;top:418.96px;font-family:'Liberation Sans', sans-serif;font-size:17.3px;line-height:17.3px;font-weight:bold;color:#000;white-space:pre;text-align:right;">2026</div>
<div style="position:absolute;right:1983.60px;top:438.86px;font-family:'Liberation Sans', sans-serif;font-size:17.3px;line-height:17.3px;font-weight:bold;color:#000;white-space:pre;text-align:right;">Jan-26</div>
<div style="position:absolute;right:1864.60px;top:418.96px;font-family:'Liberation Sans', sans-serif;font-size:17.3px;line-height:17.3px;font-weight:bold;color:#000;white-space:pre;text-align:right;">2026</div>
<div style="position:absolute;right:1864.60px;top:438.86px;font-family:'Liberation Sans', sans-serif;font-size:17.3px;line-height:17.3px;font-weight:bold;color:#000;white-space:pre;text-align:right;">Feb-26</div>
<div style="position:absolute;right:1745.60px;top:418.96px;font-family:'Liberation Sans', sans-serif;font-size:17.3px;line-height:17.3px;font-weight:bold;color:#000;white-space:pre;text-align:right;">2026</div>
<div style="position:absolute;right:1745.60px;top:438.86px;font-family:'Liberation Sans', sans-serif;font-size:17.3px;line-height:17.3px;font-weight:bold;color:#000;white-space:pre;text-align:right;">Mar-26</div>
<div style="position:absolute;right:1626.60px;top:418.96px;font-family:'Liberation Sans', sans-serif;font-size:17.3px;line-height:17.3px;font-weight:bold;color:#000;white-space:pre;text-align:right;">2026</div>
<div style="position:absolute;right:1626.60px;top:438.86px;font-family:'Liberation Sans', sans-serif;font-size:17.3px;line-height:17.3px;font-weight:bold;color:#000;white-space:pre;text-align:right;">Apr-26</div>
<div style="position:absolute;right:1507.60px;top:418.96px;font-family:'Liberation Sans', sans-serif;font-size:17.3px;line-height:17.3px;font-weight:bold;color:#000;white-space:pre;text-align:right;">2026</div>
<div style="position:absolute;right:1507.60px;top:438.86px;font-family:'Liberation Sans', sans-serif;font-size:17.3px;line-height:17.3px;font-weight:bold;color:#000;white-space:pre;text-align:right;">May-26</div>
<div style="position:absolute;right:1388.60px;top:418.96px;font-family:'Liberation Sans', sans-serif;font-size:17.3px;line-height:17.3px;font-weight:bold;color:#000;white-space:pre;text-align:right;">2026</div>
<div style="position:absolute;right:1388.60px;top:438.86px;font-family:'Liberation Sans', sans-serif;font-size:17.3px;line-height:17.3px;font-weight:bold;color:#000;white-space:pre;text-align:right;">Jun-26</div>
<div style="position:absolute;right:1269.60px;top:418.96px;font-family:'Liberation Sans', sans-serif;font-size:17.3px;line-height:17.3px;font-weight:bold;color:#000;white-space:pre;text-align:right;">2026</div>
<div style="position:absolute;right:1269.60px;top:438.86px;font-family:'Liberation Sans', sans-serif;font-size:17.3px;line-height:17.3px;font-weight:bold;color:#000;white-space:pre;text-align:right;">Jul-26</div>
<div style="position:absolute;right:1150.60px;top:418.96px;font-family:'Liberation Sans', sans-serif;font-size:17.3px;line-height:17.3px;font-weight:bold;color:#000;white-space:pre;text-align:right;">2026</div>
<div style="position:absolute;right:1150.60px;top:438.86px;font-family:'Liberation Sans', sans-serif;font-size:17.3px;line-height:17.3px;font-weight:bold;color:#000;white-space:pre;text-align:right;">Aug-26</div>
<div style="position:absolute;right:1031.60px;top:418.96px;font-family:'Liberation Sans', sans-serif;font-size:17.3px;line-height:17.3px;font-weight:bold;color:#000;white-space:pre;text-align:right;">2026</div>
<div style="position:absolute;right:1031.60px;top:438.86px;font-family:'Liberation Sans', sans-serif;font-size:17.3px;line-height:17.3px;font-weight:bold;color:#000;white-space:pre;text-align:right;">Sep-26</div>
<div style="position:absolute;right:912.60px;top:418.96px;font-family:'Liberation Sans', sans-serif;font-size:17.3px;line-height:17.3px;font-weight:bold;color:#000;white-space:pre;text-align:right;">2026</div>
<div style="position:absolute;right:912.60px;top:438.86px;font-family:'Liberation Sans', sans-serif;font-size:17.3px;line-height:17.3px;font-weight:bold;color:#000;white-space:pre;text-align:right;">Oct-26</div>
<div style="position:absolute;right:793.60px;top:418.96px;font-family:'Liberation Sans', sans-serif;font-size:17.3px;line-height:17.3px;font-weight:bold;color:#000;white-space:pre;text-align:right;">2026</div>
<div style="position:absolute;right:793.60px;top:438.86px;font-family:'Liberation Sans', sans-serif;font-size:17.3px;line-height:17.3px;font-weight:bold;color:#000;white-space:pre;text-align:right;">Nov-26</div>
<div style="position:absolute;right:674.60px;top:418.96px;font-family:'Liberation Sans', sans-serif;font-size:17.3px;line-height:17.3px;font-weight:bold;color:#000;white-space:pre;text-align:right;">2026</div>
<div style="position:absolute;right:674.60px;top:438.86px;font-family:'Liberation Sans', sans-serif;font-size:17.3px;line-height:17.3px;font-weight:bold;color:#000;white-space:pre;text-align:right;">Dec-26</div>
<div style="position:absolute;right:555.60px;top:418.96px;font-family:'Liberation Sans', sans-serif;font-size:17.3px;line-height:17.3px;font-weight:bold;color:#000;white-space:pre;text-align:right;">2027</div>
<div style="position:absolute;right:555.60px;top:438.86px;font-family:'Liberation Sans', sans-serif;font-size:17.3px;line-height:17.3px;font-weight:bold;color:#000;white-space:pre;text-align:right;">Jan-27</div>
<div style="position:absolute;right:436.60px;top:418.96px;font-family:'Liberation Sans', sans-serif;font-size:17.3px;line-height:17.3px;font-weight:bold;color:#000;white-space:pre;text-align:right;">2027</div>
<div style="position:absolute;right:436.60px;top:438.86px;font-family:'Liberation Sans', sans-serif;font-size:17.3px;line-height:17.3px;font-weight:bold;color:#000;white-space:pre;text-align:right;">Feb-27</div>
<div style="position:absolute;right:317.60px;top:418.96px;font-family:'Liberation Sans', sans-serif;font-size:17.3px;line-height:17.3px;font-weight:bold;color:#000;white-space:pre;text-align:right;">2027</div>
<div style="position:absolute;right:317.60px;top:438.86px;font-family:'Liberation Sans', sans-serif;font-size:17.3px;line-height:17.3px;font-weight:bold;color:#000;white-space:pre;text-align:right;">Mar-27</div>
<div style="position:absolute;right:198.60px;top:418.96px;font-family:'Liberation Sans', sans-serif;font-size:17.3px;line-height:17.3px;font-weight:bold;color:#000;white-space:pre;text-align:right;">2027</div>
<div style="position:absolute;right:198.60px;top:438.86px;font-family:'Liberation Sans', sans-serif;font-size:17.3px;line-height:17.3px;font-weight:bold;color:#000;white-space:pre;text-align:right;">Apr-27</div>
<div style="position:absolute;right:79.60px;top:418.96px;font-family:'Liberation Sans', sans-serif;font-size:17.3px;line-height:17.3px;font-weight:bold;color:#000;white-space:pre;text-align:right;">2027</div>
<div style="position:absolute;right:79.60px;top:438.86px;font-family:'Liberation Sans', sans-serif;font-size:17.3px;line-height:17.3px;font-weight:bold;color:#000;white-space:pre;text-align:right;">May-27</div>
<div style="position:absolute;left:114.00px;top:479.14px;font-family:'Liberation Sans', sans-serif;font-size:21.1px;line-height:21.1px;font-weight:bold;color:#1b1b1b;white-space:pre;">Cash Flow Statement, $</div>
<div style="position:absolute;left:126.40px;top:518.16px;font-family:'Liberation Sans', sans-serif;font-size:18.6px;line-height:18.6px;font-weight:bold;color:#1b1b1b;white-space:pre;">Cash Flow from Operating Activities</div>
<div style="position:absolute;left:139.00px;top:549.46px;font-family:'Liberation Sans', sans-serif;font-size:15.4px;line-height:15.4px;font-weight:normal;color:#1b1b1b;white-space:pre;">Cash Receipts</div>
<div style="position:absolute;right:1982.60px;top:549.68px;font-family:'Liberation Sans', sans-serif;font-size:14.2px;line-height:14.2px;font-weight:normal;color:#1b1b1b;white-space:pre;text-align:right;">32,258<span style="visibility:hidden">)</span></div>
<div style="position:absolute;right:1863.60px;top:549.68px;font-family:'Liberation Sans', sans-serif;font-size:14.2px;line-height:14.2px;font-weight:normal;color:#1b1b1b;white-space:pre;text-align:right;">59,260<span style="visibility:hidden">)</span></div>
<div style="position:absolute;right:1744.60px;top:549.68px;font-family:'Liberation Sans', sans-serif;font-size:14.2px;line-height:14.2px;font-weight:normal;color:#1b1b1b;white-space:pre;text-align:right;">65,740<span style="visibility:hidden">)</span></div>
<div style="position:absolute;right:1625.60px;top:549.68px;font-family:'Liberation Sans', sans-serif;font-size:14.2px;line-height:14.2px;font-weight:normal;color:#1b1b1b;white-space:pre;text-align:right;">61,492<span style="visibility:hidden">)</span></div>
<div style="position:absolute;right:1506.60px;top:549.68px;font-family:'Liberation Sans', sans-serif;font-size:14.2px;line-height:14.2px;font-weight:normal;color:#1b1b1b;white-space:pre;text-align:right;">63,508<span style="visibility:hidden">)</span></div>
<div style="position:absolute;right:1387.60px;top:549.68px;font-family:'Liberation Sans', sans-serif;font-size:14.2px;line-height:14.2px;font-weight:normal;color:#1b1b1b;white-space:pre;text-align:right;">61,492<span style="visibility:hidden">)</span></div>
<div style="position:absolute;right:1268.60px;top:549.68px;font-family:'Liberation Sans', sans-serif;font-size:14.2px;line-height:14.2px;font-weight:normal;color:#1b1b1b;white-space:pre;text-align:right;">63,508<span style="visibility:hidden">)</span></div>
<div style="position:absolute;right:1149.60px;top:549.68px;font-family:'Liberation Sans', sans-serif;font-size:14.2px;line-height:14.2px;font-weight:normal;color:#1b1b1b;white-space:pre;text-align:right;">62,500<span style="visibility:hidden">)</span></div>
<div style="position:absolute;right:1030.60px;top:549.68px;font-family:'Liberation Sans', sans-serif;font-size:14.2px;line-height:14.2px;font-weight:normal;color:#1b1b1b;white-space:pre;text-align:right;">61,492<span style="visibility:hidden">)</span></div>
<div style="position:absolute;right:911.60px;top:549.68px;font-family:'Liberation Sans', sans-serif;font-size:14.2px;line-height:14.2px;font-weight:normal;color:#1b1b1b;white-space:pre;text-align:right;">63,508<span style="visibility:hidden">)</span></div>
<div style="position:absolute;right:792.60px;top:549.68px;font-family:'Liberation Sans', sans-serif;font-size:14.2px;line-height:14.2px;font-weight:normal;color:#1b1b1b;white-space:pre;text-align:right;">61,492<span style="visibility:hidden">)</span></div>
<div style="position:absolute;right:673.60px;top:549.68px;font-family:'Liberation Sans', sans-serif;font-size:14.2px;line-height:14.2px;font-weight:normal;color:#1b1b1b;white-space:pre;text-align:right;">63,508<span style="visibility:hidden">)</span></div>
<div style="position:absolute;right:554.60px;top:549.68px;font-family:'Liberation Sans', sans-serif;font-size:14.2px;line-height:14.2px;font-weight:normal;color:#1b1b1b;white-space:pre;text-align:right;">121,166<span style="visibility:hidden">)</span></div>
<div style="position:absolute;right:435.60px;top:549.68px;font-family:'Liberation Sans', sans-serif;font-size:14.2px;line-height:14.2px;font-weight:normal;color:#1b1b1b;white-space:pre;text-align:right;">167,033<span style="visibility:hidden">)</span></div>
<div style="position:absolute;right:316.60px;top:549.68px;font-family:'Liberation Sans', sans-serif;font-size:14.2px;line-height:14.2px;font-weight:normal;color:#1b1b1b;white-space:pre;text-align:right;">185,299<span style="visibility:hidden">)</span></div>
<div style="position:absolute;right:197.60px;top:549.68px;font-family:'Liberation Sans', sans-serif;font-size:14.2px;line-height:14.2px;font-weight:normal;color:#1b1b1b;white-space:pre;text-align:right;">173,325<span style="visibility:hidden">)</span></div>
<div style="position:absolute;right:78.60px;top:549.68px;font-family:'Liberation Sans', sans-serif;font-size:14.2px;line-height:14.2px;font-weight:normal;color:#1b1b1b;white-space:pre;text-align:right;">179,008<span style="visibility:hidden">)</span></div>
<div style="position:absolute;left:139.00px;top:569.36px;font-family:'Liberation Sans', sans-serif;font-size:15.4px;line-height:15.4px;font-weight:normal;color:#1b1b1b;white-space:pre;">Cash Payments</div>
<div style="position:absolute;right:1982.60px;top:569.98px;font-family:'Liberation Sans', sans-serif;font-size:14.2px;line-height:14.2px;font-weight:normal;color:#1b1b1b;white-space:pre;text-align:right;">(26,259)</div>
<div style="position:absolute;right:1863.60px;top:569.98px;font-family:'Liberation Sans', sans-serif;font-size:14.2px;line-height:14.2px;font-weight:normal;color:#1b1b1b;white-space:pre;text-align:right;">(41,263)</div>
<div style="position:absolute;right:1744.60px;top:569.98px;font-family:'Liberation Sans', sans-serif;font-size:14.2px;line-height:14.2px;font-weight:normal;color:#1b1b1b;white-space:pre;text-align:right;">(44,864)</div>
<div style="position:absolute;right:1625.60px;top:569.98px;font-family:'Liberation Sans', sans-serif;font-size:14.2px;line-height:14.2px;font-weight:normal;color:#1b1b1b;white-space:pre;text-align:right;">(42,504)</div>
<div style="position:absolute;right:1506.60px;top:569.98px;font-family:'Liberation Sans', sans-serif;font-size:14.2px;line-height:14.2px;font-weight:normal;color:#1b1b1b;white-space:pre;text-align:right;">(43,624)</div>
<div style="position:absolute;right:1387.60px;top:569.98px;font-family:'Liberation Sans', sans-serif;font-size:14.2px;line-height:14.2px;font-weight:normal;color:#1b1b1b;white-space:pre;text-align:right;">(42,504)</div>
<div style="position:absolute;right:1268.60px;top:569.98px;font-family:'Liberation Sans', sans-serif;font-size:14.2px;line-height:14.2px;font-weight:normal;color:#1b1b1b;white-space:pre;text-align:right;">(43,624)</div>
<div style="position:absolute;right:1149.60px;top:569.98px;font-family:'Liberation Sans', sans-serif;font-size:14.2px;line-height:14.2px;font-weight:normal;color:#1b1b1b;white-space:pre;text-align:right;">(43,064)</div>
<div style="position:absolute;right:1030.60px;top:569.98px;font-family:'Liberation Sans', sans-serif;font-size:14.2px;line-height:14.2px;font-weight:normal;color:#1b1b1b;white-space:pre;text-align:right;">(42,504)</div>
<div style="position:absolute;right:911.60px;top:569.98px;font-family:'Liberation Sans', sans-serif;font-size:14.2px;line-height:14.2px;font-weight:normal;color:#1b1b1b;white-space:pre;text-align:right;">(43,624)</div>
<div style="position:absolute;right:792.60px;top:569.98px;font-family:'Liberation Sans', sans-serif;font-size:14.2px;line-height:14.2px;font-weight:normal;color:#1b1b1b;white-space:pre;text-align:right;">(42,504)</div>
<div style="position:absolute;right:673.60px;top:569.98px;font-family:'Liberation Sans', sans-serif;font-size:14.2px;line-height:14.2px;font-weight:normal;color:#1b1b1b;white-space:pre;text-align:right;">(43,624)</div>
<div style="position:absolute;right:554.60px;top:569.98px;font-family:'Liberation Sans', sans-serif;font-size:14.2px;line-height:14.2px;font-weight:normal;color:#1b1b1b;white-space:pre;text-align:right;">(67,671)</div>
<div style="position:absolute;right:435.60px;top:569.98px;font-family:'Liberation Sans', sans-serif;font-size:14.2px;line-height:14.2px;font-weight:normal;color:#1b1b1b;white-space:pre;text-align:right;">(75,159)</div>
<div style="position:absolute;right:316.60px;top:569.98px;font-family:'Liberation Sans', sans-serif;font-size:14.2px;line-height:14.2px;font-weight:normal;color:#1b1b1b;white-space:pre;text-align:right;">(80,989)</div>
<div style="position:absolute;right:197.60px;top:569.98px;font-family:'Liberation Sans', sans-serif;font-size:14.2px;line-height:14.2px;font-weight:normal;color:#1b1b1b;white-space:pre;text-align:right;">(77,167)</div>
<div style="position:absolute;right:78.60px;top:569.98px;font-family:'Liberation Sans', sans-serif;font-size:14.2px;line-height:14.2px;font-weight:normal;color:#1b1b1b;white-space:pre;text-align:right;">(78,981)</div>
<div style="position:absolute;left:139.00px;top:589.16px;font-family:'Liberation Sans', sans-serif;font-size:15.4px;line-height:15.4px;font-weight:normal;color:#1b1b1b;white-space:pre;">Interest Expense</div>
<div style="position:absolute;right:1982.60px;top:589.78px;font-family:'Liberation Sans', sans-serif;font-size:14.2px;line-height:14.2px;font-weight:normal;color:#1b1b1b;white-space:pre;text-align:right;">(1,000)</div>
<div style="position:absolute;right:1863.60px;top:589.78px;font-family:'Liberation Sans', sans-serif;font-size:14.2px;line-height:14.2px;font-weight:normal;color:#1b1b1b;white-space:pre;text-align:right;">(1,000)</div>
<div style="position:absolute;right:1744.60px;top:589.78px;font-family:'Liberation Sans', sans-serif;font-size:14.2px;line-height:14.2px;font-weight:normal;color:#1b1b1b;white-space:pre;text-align:right;">(1,667)</div>
<div style="position:absolute;right:1625.60px;top:589.78px;font-family:'Liberation Sans', sans-serif;font-size:14.2px;line-height:14.2px;font-weight:normal;color:#1b1b1b;white-space:pre;text-align:right;">(1,656)</div>
<div style="position:absolute;right:1506.60px;top:589.78px;font-family:'Liberation Sans', sans-serif;font-size:14.2px;line-height:14.2px;font-weight:normal;color:#1b1b1b;white-space:pre;text-align:right;">(1,644)</div>
<div style="position:absolute;right:1387.60px;top:589.78px;font-family:'Liberation Sans', sans-serif;font-size:14.2px;line-height:14.2px;font-weight:normal;color:#1b1b1b;white-space:pre;text-align:right;">(1,633)</div>
<div style="position:absolute;right:1268.60px;top:589.78px;font-family:'Liberation Sans', sans-serif;font-size:14.2px;line-height:14.2px;font-weight:normal;color:#1b1b1b;white-space:pre;text-align:right;">(1,622)</div>
<div style="position:absolute;right:1149.60px;top:589.78px;font-family:'Liberation Sans', sans-serif;font-size:14.2px;line-height:14.2px;font-weight:normal;color:#1b1b1b;white-space:pre;text-align:right;">(1,611)</div>
<div style="position:absolute;right:1030.60px;top:589.78px;font-family:'Liberation Sans', sans-serif;font-size:14.2px;line-height:14.2px;font-weight:normal;color:#1b1b1b;white-space:pre;text-align:right;">(1,600)</div>
<div style="position:absolute;right:911.60px;top:589.78px;font-family:'Liberation Sans', sans-serif;font-size:14.2px;line-height:14.2px;font-weight:normal;color:#1b1b1b;white-space:pre;text-align:right;">(1,589)</div>
<div style="position:absolute;right:792.60px;top:589.78px;font-family:'Liberation Sans', sans-serif;font-size:14.2px;line-height:14.2px;font-weight:normal;color:#1b1b1b;white-space:pre;text-align:right;">(1,578)</div>
<div style="position:absolute;right:673.60px;top:589.78px;font-family:'Liberation Sans', sans-serif;font-size:14.2px;line-height:14.2px;font-weight:normal;color:#1b1b1b;white-space:pre;text-align:right;">(1,567)</div>
<div style="position:absolute;right:554.60px;top:589.78px;font-family:'Liberation Sans', sans-serif;font-size:14.2px;line-height:14.2px;font-weight:normal;color:#1b1b1b;white-space:pre;text-align:right;">(1,556)</div>
<div style="position:absolute;right:435.60px;top:589.78px;font-family:'Liberation Sans', sans-serif;font-size:14.2px;line-height:14.2px;font-weight:normal;color:#1b1b1b;white-space:pre;text-align:right;">(1,534)</div>
<div style="position:absolute;right:316.60px;top:589.78px;font-family:'Liberation Sans', sans-serif;font-size:14.2px;line-height:14.2px;font-weight:normal;color:#1b1b1b;white-space:pre;text-align:right;">(1,512)</div>
<div style="position:absolute;right:197.60px;top:589.78px;font-family:'Liberation Sans', sans-serif;font-size:14.2px;line-height:14.2px;font-weight:normal;color:#1b1b1b;white-space:pre;text-align:right;">(1,491)</div>
<div style="position:absolute;right:78.60px;top:589.78px;font-family:'Liberation Sans', sans-serif;font-size:14.2px;line-height:14.2px;font-weight:normal;color:#1b1b1b;white-space:pre;text-align:right;">(1,469)</div>
<div style="position:absolute;left:139.00px;top:608.96px;font-family:'Liberation Sans', sans-serif;font-size:15.4px;line-height:15.4px;font-weight:normal;color:#1b1b1b;white-space:pre;">Corporate Tax Expense</div>
<div style="position:absolute;right:1982.60px;top:609.58px;font-family:'Liberation Sans', sans-serif;font-size:14.2px;line-height:14.2px;font-weight:normal;color:#1b1b1b;white-space:pre;text-align:right;">(4,596)</div>
<div style="position:absolute;right:1863.60px;top:609.58px;font-family:'Liberation Sans', sans-serif;font-size:14.2px;line-height:14.2px;font-weight:normal;color:#1b1b1b;white-space:pre;text-align:right;">(4,577)</div>
<div style="position:absolute;right:1744.60px;top:609.58px;font-family:'Liberation Sans', sans-serif;font-size:14.2px;line-height:14.2px;font-weight:normal;color:#1b1b1b;white-space:pre;text-align:right;">(4,388)</div>
<div style="position:absolute;right:1625.60px;top:609.58px;font-family:'Liberation Sans', sans-serif;font-size:14.2px;line-height:14.2px;font-weight:normal;color:#1b1b1b;white-space:pre;text-align:right;">(4,377)</div>
<div style="position:absolute;right:1506.60px;top:609.58px;font-family:'Liberation Sans', sans-serif;font-size:14.2px;line-height:14.2px;font-weight:normal;color:#1b1b1b;white-space:pre;text-align:right;">(4,370)</div>
<div style="position:absolute;right:1387.60px;top:609.58px;font-family:'Liberation Sans', sans-serif;font-size:14.2px;line-height:14.2px;font-weight:normal;color:#1b1b1b;white-space:pre;text-align:right;">(4,368)</div>
<div style="position:absolute;right:1268.60px;top:609.58px;font-family:'Liberation Sans', sans-serif;font-size:14.2px;line-height:14.2px;font-weight:normal;color:#1b1b1b;white-space:pre;text-align:right;">(4,368)</div>
<div style="position:absolute;right:1149.60px;top:609.58px;font-family:'Liberation Sans', sans-serif;font-size:14.2px;line-height:14.2px;font-weight:normal;color:#1b1b1b;white-space:pre;text-align:right;">(4,369)</div>
<div style="position:absolute;right:1030.60px;top:609.58px;font-family:'Liberation Sans', sans-serif;font-size:14.2px;line-height:14.2px;font-weight:normal;color:#1b1b1b;white-space:pre;text-align:right;">(4,372)</div>
<div style="position:absolute;right:911.60px;top:609.58px;font-family:'Liberation Sans', sans-serif;font-size:14.2px;line-height:14.2px;font-weight:normal;color:#1b1b1b;white-space:pre;text-align:right;">(4,374)</div>
<div style="position:absolute;right:792.60px;top:609.58px;font-family:'Liberation Sans', sans-serif;font-size:14.2px;line-height:14.2px;font-weight:normal;color:#1b1b1b;white-space:pre;text-align:right;">(4,377)</div>
<div style="position:absolute;right:673.60px;top:609.58px;font-family:'Liberation Sans', sans-serif;font-size:14.2px;line-height:14.2px;font-weight:normal;color:#1b1b1b;white-space:pre;text-align:right;">(4,380)</div>
<div style="position:absolute;right:554.60px;top:609.58px;font-family:'Liberation Sans', sans-serif;font-size:14.2px;line-height:14.2px;font-weight:normal;color:#1b1b1b;white-space:pre;text-align:right;">(24,047)</div>
<div style="position:absolute;right:435.60px;top:609.58px;font-family:'Liberation Sans', sans-serif;font-size:14.2px;line-height:14.2px;font-weight:normal;color:#1b1b1b;white-space:pre;text-align:right;">(24,052)</div>
<div style="position:absolute;right:316.60px;top:609.58px;font-family:'Liberation Sans', sans-serif;font-size:14.2px;line-height:14.2px;font-weight:normal;color:#1b1b1b;white-space:pre;text-align:right;">(24,058)</div>
<div style="position:absolute;right:197.60px;top:609.58px;font-family:'Liberation Sans', sans-serif;font-size:14.2px;line-height:14.2px;font-weight:normal;color:#1b1b1b;white-space:pre;text-align:right;">(24,063)</div>
<div style="position:absolute;right:78.60px;top:609.58px;font-family:'Liberation Sans', sans-serif;font-size:14.2px;line-height:14.2px;font-weight:normal;color:#1b1b1b;white-space:pre;text-align:right;">(24,068)</div>
<div style="position:absolute;left:135.00px;top:625.90px;width:2725.00px;height:21.00px;background:#4ab2e8;"></div>
<div style="position:absolute;left:146.50px;top:629.11px;font-family:'Liberation Sans', sans-serif;font-size:17.0px;line-height:17.0px;font-weight:bold;color:#ffffff;white-space:pre;">Net Cash Flow from Operating Activities</div>
<div style="position:absolute;right:1983.60px;top:627.08px;font-family:'Liberation Serif', serif;font-size:19.4px;line-height:19.4px;font-weight:bold;color:#ffffff;white-space:pre;text-align:right;transform:scaleY(0.93);transform-origin:0 16.25px;-webkit-text-stroke:0.25px #ffffff">403<span style="visibility:hidden">)</span></div>
<div style="position:absolute;right:1864.60px;top:627.08px;font-family:'Liberation Serif', serif;font-size:19.4px;line-height:19.4px;font-weight:bold;color:#ffffff;white-space:pre;text-align:right;transform:scaleY(0.93);transform-origin:0 16.25px;-webkit-text-stroke:0.25px #ffffff">12,419<span style="visibility:hidden">)</span></div>
<div style="position:absolute;right:1745.60px;top:627.08px;font-family:'Liberation Serif', serif;font-size:19.4px;line-height:19.4px;font-weight:bold;color:#ffffff;white-space:pre;text-align:right;transform:scaleY(0.93);transform-origin:0 16.25px;-webkit-text-stroke:0.25px #ffffff">14,821<span style="visibility:hidden">)</span></div>
<div style="position:absolute;right:1626.60px;top:627.08px;font-family:'Liberation Serif', serif;font-size:19.4px;line-height:19.4px;font-weight:bold;color:#ffffff;white-space:pre;text-align:right;transform:scaleY(0.93);transform-origin:0 16.25px;-webkit-text-stroke:0.25px #ffffff">12,956<span style="visibility:hidden">)</span></div>
<div style="position:absolute;right:1507.60px;top:627.08px;font-family:'Liberation Serif', serif;font-size:19.4px;line-height:19.4px;font-weight:bold;color:#ffffff;white-space:pre;text-align:right;transform:scaleY(0.93);transform-origin:0 16.25px;-webkit-text-stroke:0.25px #ffffff">13,869<span style="visibility:hidden">)</span></div>
<div style="position:absolute;right:1388.60px;top:627.08px;font-family:'Liberation Serif', serif;font-size:19.4px;line-height:19.4px;font-weight:bold;color:#ffffff;white-space:pre;text-align:right;transform:scaleY(0.93);transform-origin:0 16.25px;-webkit-text-stroke:0.25px #ffffff">12,987<span style="visibility:hidden">)</span></div>
<div style="position:absolute;right:1269.60px;top:627.08px;font-family:'Liberation Serif', serif;font-size:19.4px;line-height:19.4px;font-weight:bold;color:#ffffff;white-space:pre;text-align:right;transform:scaleY(0.93);transform-origin:0 16.25px;-webkit-text-stroke:0.25px #ffffff">13,894<span style="visibility:hidden">)</span></div>
<div style="position:absolute;right:1150.60px;top:627.08px;font-family:'Liberation Serif', serif;font-size:19.4px;line-height:19.4px;font-weight:bold;color:#ffffff;white-space:pre;text-align:right;transform:scaleY(0.93);transform-origin:0 16.25px;-webkit-text-stroke:0.25px #ffffff">13,456<span style="visibility:hidden">)</span></div>
<div style="position:absolute;right:1031.60px;top:627.08px;font-family:'Liberation Serif', serif;font-size:19.4px;line-height:19.4px;font-weight:bold;color:#ffffff;white-space:pre;text-align:right;transform:scaleY(0.93);transform-origin:0 16.25px;-webkit-text-stroke:0.25px #ffffff">13,017<span style="visibility:hidden">)</span></div>
<div style="position:absolute;right:912.60px;top:627.08px;font-family:'Liberation Serif', serif;font-size:19.4px;line-height:19.4px;font-weight:bold;color:#ffffff;white-space:pre;text-align:right;transform:scaleY(0.93);transform-origin:0 16.25px;-webkit-text-stroke:0.25px #ffffff">13,921<span style="visibility:hidden">)</span></div>
<div style="position:absolute;right:793.60px;top:627.08px;font-family:'Liberation Serif', serif;font-size:19.4px;line-height:19.4px;font-weight:bold;color:#ffffff;white-space:pre;text-align:right;transform:scaleY(0.93);transform-origin:0 16.25px;-webkit-text-stroke:0.25px #ffffff">13,033<span style="visibility:hidden">)</span></div>
<div style="position:absolute;right:674.60px;top:627.08px;font-family:'Liberation Serif', serif;font-size:19.4px;line-height:19.4px;font-weight:bold;color:#ffffff;white-space:pre;text-align:right;transform:scaleY(0.93);transform-origin:0 16.25px;-webkit-text-stroke:0.25px #ffffff">13,938<span style="visibility:hidden">)</span></div>
<div style="position:absolute;right:555.60px;top:627.08px;font-family:'Liberation Serif', serif;font-size:19.4px;line-height:19.4px;font-weight:bold;color:#ffffff;white-space:pre;text-align:right;transform:scaleY(0.93);transform-origin:0 16.25px;-webkit-text-stroke:0.25px #ffffff">27,893<span style="visibility:hidden">)</span></div>
<div style="position:absolute;right:436.60px;top:627.08px;font-family:'Liberation Serif', serif;font-size:19.4px;line-height:19.4px;font-weight:bold;color:#ffffff;white-space:pre;text-align:right;transform:scaleY(0.93);transform-origin:0 16.25px;-webkit-text-stroke:0.25px #ffffff">66,289<span style="visibility:hidden">)</span></div>
<div style="position:absolute;right:317.60px;top:627.08px;font-family:'Liberation Serif', serif;font-size:19.4px;line-height:19.4px;font-weight:bold;color:#ffffff;white-space:pre;text-align:right;transform:scaleY(0.93);transform-origin:0 16.25px;-webkit-text-stroke:0.25px #ffffff">78,741<span style="visibility:hidden">)</span></div>
<div style="position:absolute;right:198.60px;top:627.08px;font-family:'Liberation Serif', serif;font-size:19.4px;line-height:19.4px;font-weight:bold;color:#ffffff;white-space:pre;text-align:right;transform:scaleY(0.93);transform-origin:0 16.25px;-webkit-text-stroke:0.25px #ffffff">70,605<span style="visibility:hidden">)</span></div>
<div style="position:absolute;right:79.60px;top:627.08px;font-family:'Liberation Serif', serif;font-size:19.4px;line-height:19.4px;font-weight:bold;color:#ffffff;white-space:pre;text-align:right;transform:scaleY(0.93);transform-origin:0 16.25px;-webkit-text-stroke:0.25px #ffffff">74,490<span style="visibility:hidden">)</span></div>
<div style="position:absolute;left:126.60px;top:666.46px;font-family:'Liberation Sans', sans-serif;font-size:18.6px;line-height:18.6px;font-weight:bold;color:#1b1b1b;white-space:pre;">Cash Flow from Investing Activities</div>
<div style="position:absolute;left:139.00px;top:692.86px;font-family:'Liberation Sans', sans-serif;font-size:15.4px;line-height:15.4px;font-weight:normal;color:#1b1b1b;white-space:pre;">Capital Expenditure</div>
<div style="position:absolute;right:1982.60px;top:693.48px;font-family:'Liberation Sans', sans-serif;font-size:14.2px;line-height:14.2px;font-weight:normal;color:#1b1b1b;white-space:pre;text-align:right;">(6,250)</div>
<div style="position:absolute;right:1863.60px;top:693.48px;font-family:'Liberation Sans', sans-serif;font-size:14.2px;line-height:14.2px;font-weight:normal;color:#1b1b1b;white-space:pre;text-align:right;">(8,917)</div>
<div style="position:absolute;right:1744.60px;top:693.48px;font-family:'Liberation Sans', sans-serif;font-size:14.2px;line-height:14.2px;font-weight:normal;color:#1b1b1b;white-space:pre;text-align:right;">(10,917)</div>
<div style="position:absolute;right:1625.60px;top:693.48px;font-family:'Liberation Sans', sans-serif;font-size:14.2px;line-height:14.2px;font-weight:normal;color:#1b1b1b;white-space:pre;text-align:right;">(6,542)</div>
<div style="position:absolute;right:1506.60px;top:693.48px;font-family:'Liberation Sans', sans-serif;font-size:14.2px;line-height:14.2px;font-weight:normal;color:#1b1b1b;white-space:pre;text-align:right;">(4,625)</div>
<div style="position:absolute;right:1387.60px;top:693.48px;font-family:'Liberation Sans', sans-serif;font-size:14.2px;line-height:14.2px;font-weight:normal;color:#1b1b1b;white-space:pre;text-align:right;">(2,625)</div>
<div style="position:absolute;right:1268.60px;top:693.48px;font-family:'Liberation Sans', sans-serif;font-size:14.2px;line-height:14.2px;font-weight:normal;color:#1b1b1b;white-space:pre;text-align:right;">(1,375)</div>
<div style="position:absolute;right:1149.60px;top:693.48px;font-family:'Liberation Sans', sans-serif;font-size:14.2px;line-height:14.2px;font-weight:normal;color:#1b1b1b;white-space:pre;text-align:right;">(750)</div>
<div style="position:absolute;right:1030.60px;top:693.48px;font-family:'Liberation Sans', sans-serif;font-size:14.2px;line-height:14.2px;font-weight:normal;color:#1b1b1b;white-space:pre;text-align:right;">-<span style="visibility:hidden">)</span></div>
<div style="position:absolute;right:911.60px;top:693.48px;font-family:'Liberation Sans', sans-serif;font-size:14.2px;line-height:14.2px;font-weight:normal;color:#1b1b1b;white-space:pre;text-align:right;">-<span style="visibility:hidden">)</span></div>
<div style="position:absolute;right:792.60px;top:693.48px;font-family:'Liberation Sans', sans-serif;font-size:14.2px;line-height:14.2px;font-weight:normal;color:#1b1b1b;white-space:pre;text-align:right;">-<span style="visibility:hidden">)</span></div>
<div style="position:absolute;right:673.60px;top:693.48px;font-family:'Liberation Sans', sans-serif;font-size:14.2px;line-height:14.2px;font-weight:normal;color:#1b1b1b;white-space:pre;text-align:right;">-<span style="visibility:hidden">)</span></div>
<div style="position:absolute;right:554.60px;top:693.48px;font-family:'Liberation Sans', sans-serif;font-size:14.2px;line-height:14.2px;font-weight:normal;color:#1b1b1b;white-space:pre;text-align:right;">-<span style="visibility:hidden">)</span></div>
<div style="position:absolute;right:435.60px;top:693.48px;font-family:'Liberation Sans', sans-serif;font-size:14.2px;line-height:14.2px;font-weight:normal;color:#1b1b1b;white-space:pre;text-align:right;">-<span style="visibility:hidden">)</span></div>
<div style="position:absolute;right:316.60px;top:693.48px;font-family:'Liberation Sans', sans-serif;font-size:14.2px;line-height:14.2px;font-weight:normal;color:#1b1b1b;white-space:pre;text-align:right;">-<span style="visibility:hidden">)</span></div>
<div style="position:absolute;right:197.60px;top:693.48px;font-family:'Liberation Sans', sans-serif;font-size:14.2px;line-height:14.2px;font-weight:normal;color:#1b1b1b;white-space:pre;text-align:right;">-<span style="visibility:hidden">)</span></div>
<div style="position:absolute;right:78.60px;top:693.48px;font-family:'Liberation Sans', sans-serif;font-size:14.2px;line-height:14.2px;font-weight:normal;color:#1b1b1b;white-space:pre;text-align:right;">-<span style="visibility:hidden">)</span></div>
<div style="position:absolute;left:135.00px;top:714.10px;width:2725.00px;height:20.70px;background:#4ab2e8;"></div>
<div style="position:absolute;left:146.50px;top:717.01px;font-family:'Liberation Sans', sans-serif;font-size:17.0px;line-height:17.0px;font-weight:bold;color:#ffffff;white-space:pre;">Net Cash Flow from Investing Activities</div>
<div style="position:absolute;right:1983.60px;top:714.98px;font-family:'Liberation Serif', serif;font-size:19.4px;line-height:19.4px;font-weight:bold;color:#ffffff;white-space:pre;text-align:right;transform:scaleY(0.93);transform-origin:0 16.25px;-webkit-text-stroke:0.25px #ffffff">(6,250)</div>
<div style="position:absolute;right:1864.60px;top:714.98px;font-family:'Liberation Serif', serif;font-size:19.4px;line-height:19.4px;font-weight:bold;color:#ffffff;white-space:pre;text-align:right;transform:scaleY(0.93);transform-origin:0 16.25px;-webkit-text-stroke:0.25px #ffffff">(8,917)</div>
<div style="position:absolute;right:1745.60px;top:714.98px;font-family:'Liberation Serif', serif;font-size:19.4px;line-height:19.4px;font-weight:bold;color:#ffffff;white-space:pre;text-align:right;transform:scaleY(0.93);transform-origin:0 16.25px;-webkit-text-stroke:0.25px #ffffff">(10,917)</div>
<div style="position:absolute;right:1626.60px;top:714.98px;font-family:'Liberation Serif', serif;font-size:19.4px;line-height:19.4px;font-weight:bold;color:#ffffff;white-space:pre;text-align:right;transform:scaleY(0.93);transform-origin:0 16.25px;-webkit-text-stroke:0.25px #ffffff">(6,542)</div>
<div style="position:absolute;right:1507.60px;top:714.98px;font-family:'Liberation Serif', serif;font-size:19.4px;line-height:19.4px;font-weight:bold;color:#ffffff;white-space:pre;text-align:right;transform:scaleY(0.93);transform-origin:0 16.25px;-webkit-text-stroke:0.25px #ffffff">(4,625)</div>
<div style="position:absolute;right:1388.60px;top:714.98px;font-family:'Liberation Serif', serif;font-size:19.4px;line-height:19.4px;font-weight:bold;color:#ffffff;white-space:pre;text-align:right;transform:scaleY(0.93);transform-origin:0 16.25px;-webkit-text-stroke:0.25px #ffffff">(2,625)</div>
<div style="position:absolute;right:1269.60px;top:714.98px;font-family:'Liberation Serif', serif;font-size:19.4px;line-height:19.4px;font-weight:bold;color:#ffffff;white-space:pre;text-align:right;transform:scaleY(0.93);transform-origin:0 16.25px;-webkit-text-stroke:0.25px #ffffff">(1,375)</div>
<div style="position:absolute;right:1150.60px;top:714.98px;font-family:'Liberation Serif', serif;font-size:19.4px;line-height:19.4px;font-weight:bold;color:#ffffff;white-space:pre;text-align:right;transform:scaleY(0.93);transform-origin:0 16.25px;-webkit-text-stroke:0.25px #ffffff">(750)</div>
<div style="position:absolute;right:1031.60px;top:716.50px;font-family:'Liberation Sans', sans-serif;font-size:17.6px;line-height:17.6px;font-weight:normal;color:#ffffff;white-space:pre;text-align:right;">-<span style="visibility:hidden">)</span></div>
<div style="position:absolute;right:912.60px;top:716.50px;font-family:'Liberation Sans', sans-serif;font-size:17.6px;line-height:17.6px;font-weight:normal;color:#ffffff;white-space:pre;text-align:right;">-<span style="visibility:hidden">)</span></div>
<div style="position:absolute;right:793.60px;top:716.50px;font-family:'Liberation Sans', sans-serif;font-size:17.6px;line-height:17.6px;font-weight:normal;color:#ffffff;white-space:pre;text-align:right;">-<span style="visibility:hidden">)</span></div>
<div style="position:absolute;right:674.60px;top:716.50px;font-family:'Liberation Sans', sans-serif;font-size:17.6px;line-height:17.6px;font-weight:normal;color:#ffffff;white-space:pre;text-align:right;">-<span style="visibility:hidden">)</span></div>
<div style="position:absolute;right:555.60px;top:716.50px;font-family:'Liberation Sans', sans-serif;font-size:17.6px;line-height:17.6px;font-weight:normal;color:#ffffff;white-space:pre;text-align:right;">-<span style="visibility:hidden">)</span></div>
<div style="position:absolute;right:436.60px;top:716.50px;font-family:'Liberation Sans', sans-serif;font-size:17.6px;line-height:17.6px;font-weight:normal;color:#ffffff;white-space:pre;text-align:right;">-<span style="visibility:hidden">)</span></div>
<div style="position:absolute;right:317.60px;top:716.50px;font-family:'Liberation Sans', sans-serif;font-size:17.6px;line-height:17.6px;font-weight:normal;color:#ffffff;white-space:pre;text-align:right;">-<span style="visibility:hidden">)</span></div>
<div style="position:absolute;right:198.60px;top:716.50px;font-family:'Liberation Sans', sans-serif;font-size:17.6px;line-height:17.6px;font-weight:normal;color:#ffffff;white-space:pre;text-align:right;">-<span style="visibility:hidden">)</span></div>
<div style="position:absolute;right:79.60px;top:716.50px;font-family:'Liberation Sans', sans-serif;font-size:17.6px;line-height:17.6px;font-weight:normal;color:#ffffff;white-space:pre;text-align:right;">-<span style="visibility:hidden">)</span></div>
<div style="position:absolute;left:126.60px;top:754.56px;font-family:'Liberation Sans', sans-serif;font-size:18.6px;line-height:18.6px;font-weight:bold;color:#1b1b1b;white-space:pre;">Cash Flow from Financing Activities</div>
<div style="position:absolute;left:139.00px;top:781.26px;font-family:'Liberation Sans', sans-serif;font-size:15.4px;line-height:15.4px;font-weight:normal;color:#1b1b1b;white-space:pre;">Debts Drawdowns</div>
<div style="position:absolute;right:1982.60px;top:781.88px;font-family:'Liberation Sans', sans-serif;font-size:14.2px;line-height:14.2px;font-weight:normal;color:#1b1b1b;white-space:pre;text-align:right;">200,000<span style="visibility:hidden">)</span></div>
<div style="position:absolute;right:1863.60px;top:781.88px;font-family:'Liberation Sans', sans-serif;font-size:14.2px;line-height:14.2px;font-weight:normal;color:#1b1b1b;white-space:pre;text-align:right;">-<span style="visibility:hidden">)</span></div>
<div style="position:absolute;right:1744.60px;top:781.88px;font-family:'Liberation Sans', sans-serif;font-size:14.2px;line-height:14.2px;font-weight:normal;color:#1b1b1b;white-space:pre;text-align:right;">100,000<span style="visibility:hidden">)</span></div>
<div style="position:absolute;right:1625.60px;top:781.88px;font-family:'Liberation Sans', sans-serif;font-size:14.2px;line-height:14.2px;font-weight:normal;color:#1b1b1b;white-space:pre;text-align:right;">-<span style="visibility:hidden">)</span></div>
<div style="position:absolute;right:1506.60px;top:781.88px;font-family:'Liberation Sans', sans-serif;font-size:14.2px;line-height:14.2px;font-weight:normal;color:#1b1b1b;white-space:pre;text-align:right;">-<span style="visibility:hidden">)</span></div>
<div style="position:absolute;right:1387.60px;top:781.88px;font-family:'Liberation Sans', sans-serif;font-size:14.2px;line-height:14.2px;font-weight:normal;color:#1b1b1b;white-space:pre;text-align:right;">-<span style="visibility:hidden">)</span></div>
<div style="position:absolute;right:1268.60px;top:781.88px;font-family:'Liberation Sans', sans-serif;font-size:14.2px;line-height:14.2px;font-weight:normal;color:#1b1b1b;white-space:pre;text-align:right;">-<span style="visibility:hidden">)</span></div>
<div style="position:absolute;right:1149.60px;top:781.88px;font-family:'Liberation Sans', sans-serif;font-size:14.2px;line-height:14.2px;font-weight:normal;color:#1b1b1b;white-space:pre;text-align:right;">-<span style="visibility:hidden">)</span></div>
<div style="position:absolute;right:1030.60px;top:781.88px;font-family:'Liberation Sans', sans-serif;font-size:14.2px;line-height:14.2px;font-weight:normal;color:#1b1b1b;white-space:pre;text-align:right;">-<span style="visibility:hidden">)</span></div>
<div style="position:absolute;right:911.60px;top:781.88px;font-family:'Liberation Sans', sans-serif;font-size:14.2px;line-height:14.2px;font-weight:normal;color:#1b1b1b;white-space:pre;text-align:right;">-<span style="visibility:hidden">)</span></div>
<div style="position:absolute;right:792.60px;top:781.88px;font-family:'Liberation Sans', sans-serif;font-size:14.2px;line-height:14.2px;font-weight:normal;color:#1b1b1b;white-space:pre;text-align:right;">-<span style="visibility:hidden">)</span></div>
<div style="position:absolute;right:673.60px;top:781.88px;font-family:'Liberation Sans', sans-serif;font-size:14.2px;line-height:14.2px;font-weight:normal;color:#1b1b1b;white-space:pre;text-align:right;">-<span style="visibility:hidden">)</span></div>
<div style="position:absolute;right:554.60px;top:781.88px;font-family:'Liberation Sans', sans-serif;font-size:14.2px;line-height:14.2px;font-weight:normal;color:#1b1b1b;white-space:pre;text-align:right;">-<span style="visibility:hidden">)</span></div>
<div style="position:absolute;right:435.60px;top:781.88px;font-family:'Liberation Sans', sans-serif;font-size:14.2px;line-height:14.2px;font-weight:normal;color:#1b1b1b;white-space:pre;text-align:right;">-<span style="visibility:hidden">)</span></div>
<div style="position:absolute;right:316.60px;top:781.88px;font-family:'Liberation Sans', sans-serif;font-size:14.2px;line-height:14.2px;font-weight:normal;color:#1b1b1b;white-space:pre;text-align:right;">-<span style="visibility:hidden">)</span></div>
<div style="position:absolute;right:197.60px;top:781.88px;font-family:'Liberation Sans', sans-serif;font-size:14.2px;line-height:14.2px;font-weight:normal;color:#1b1b1b;white-space:pre;text-align:right;">-<span style="visibility:hidden">)</span></div>
<div style="position:absolute;right:78.60px;top:781.88px;font-family:'Liberation Sans', sans-serif;font-size:14.2px;line-height:14.2px;font-weight:normal;color:#1b1b1b;white-space:pre;text-align:right;">-<span style="visibility:hidden">)</span></div>
<div style="position:absolute;left:139.00px;top:801.46px;font-family:'Liberation Sans', sans-serif;font-size:15.4px;line-height:15.4px;font-weight:normal;color:#1b1b1b;white-space:pre;">Debts Repayments</div>
<div style="position:absolute;right:1982.60px;top:802.08px;font-family:'Liberation Sans', sans-serif;font-size:14.2px;line-height:14.2px;font-weight:normal;color:#1b1b1b;white-space:pre;text-align:right;">-<span style="visibility:hidden">)</span></div>
<div style="position:absolute;right:1863.60px;top:802.08px;font-family:'Liberation Sans', sans-serif;font-size:14.2px;line-height:14.2px;font-weight:normal;color:#1b1b1b;white-space:pre;text-align:right;">-<span style="visibility:hidden">)</span></div>
<div style="position:absolute;right:1744.60px;top:802.08px;font-family:'Liberation Sans', sans-serif;font-size:14.2px;line-height:14.2px;font-weight:normal;color:#1b1b1b;white-space:pre;text-align:right;">(1,667)</div>
<div style="position:absolute;right:1625.60px;top:802.08px;font-family:'Liberation Sans', sans-serif;font-size:14.2px;line-height:14.2px;font-weight:normal;color:#1b1b1b;white-space:pre;text-align:right;">(1,667)</div>
<div style="position:absolute;right:1506.60px;top:802.08px;font-family:'Liberation Sans', sans-serif;font-size:14.2px;line-height:14.2px;font-weight:normal;color:#1b1b1b;white-space:pre;text-align:right;">(1,667)</div>
<div style="position:absolute;right:1387.60px;top:802.08px;font-family:'Liberation Sans', sans-serif;font-size:14.2px;line-height:14.2px;font-weight:normal;color:#1b1b1b;white-space:pre;text-align:right;">(1,667)</div>
<div style="position:absolute;right:1268.60px;top:802.08px;font-family:'Liberation Sans', sans-serif;font-size:14.2px;line-height:14.2px;font-weight:normal;color:#1b1b1b;white-space:pre;text-align:right;">(1,667)</div>
<div style="position:absolute;right:1149.60px;top:802.08px;font-family:'Liberation Sans', sans-serif;font-size:14.2px;line-height:14.2px;font-weight:normal;color:#1b1b1b;white-space:pre;text-align:right;">(1,667)</div>
<div style="position:absolute;right:1030.60px;top:802.08px;font-family:'Liberation Sans', sans-serif;font-size:14.2px;line-height:14.2px;font-weight:normal;color:#1b1b1b;white-space:pre;text-align:right;">(1,667)</div>
<div style="position:absolute;right:911.60px;top:802.08px;font-family:'Liberation Sans', sans-serif;font-size:14.2px;line-height:14.2px;font-weight:normal;color:#1b1b1b;white-space:pre;text-align:right;">(1,667)</div>
<div style="position:absolute;right:792.60px;top:802.08px;font-family:'Liberation Sans', sans-serif;font-size:14.2px;line-height:14.2px;font-weight:normal;color:#1b1b1b;white-space:pre;text-align:right;">(1,667)</div>
<div style="position:absolute;right:673.60px;top:802.08px;font-family:'Liberation Sans', sans-serif;font-size:14.2px;line-height:14.2px;font-weight:normal;color:#1b1b1b;white-space:pre;text-align:right;">(1,667)</div>
<div style="position:absolute;right:554.60px;top:802.08px;font-family:'Liberation Sans', sans-serif;font-size:14.2px;line-height:14.2px;font-weight:normal;color:#1b1b1b;white-space:pre;text-align:right;">(3,770)</div>
<div style="position:absolute;right:435.60px;top:802.08px;font-family:'Liberation Sans', sans-serif;font-size:14.2px;line-height:14.2px;font-weight:normal;color:#1b1b1b;white-space:pre;text-align:right;">(3,780)</div>
<div style="position:absolute;right:316.60px;top:802.08px;font-family:'Liberation Sans', sans-serif;font-size:14.2px;line-height:14.2px;font-weight:normal;color:#1b1b1b;white-space:pre;text-align:right;">(3,791)</div>
<div style="position:absolute;right:197.60px;top:802.08px;font-family:'Liberation Sans', sans-serif;font-size:14.2px;line-height:14.2px;font-weight:normal;color:#1b1b1b;white-space:pre;text-align:right;">(3,801)</div>
<div style="position:absolute;right:78.60px;top:802.08px;font-family:'Liberation Sans', sans-serif;font-size:14.2px;line-height:14.2px;font-weight:normal;color:#1b1b1b;white-space:pre;text-align:right;">(3,812)</div>
<div style="position:absolute;left:139.00px;top:821.06px;font-family:'Liberation Sans', sans-serif;font-size:15.4px;line-height:15.4px;font-weight:normal;color:#1b1b1b;white-space:pre;">Equity Raisings</div>
<div style="position:absolute;right:1982.60px;top:821.68px;font-family:'Liberation Sans', sans-serif;font-size:14.2px;line-height:14.2px;font-weight:normal;color:#1b1b1b;white-space:pre;text-align:right;">700,000<span style="visibility:hidden">)</span></div>
<div style="position:absolute;right:1863.60px;top:821.68px;font-family:'Liberation Sans', sans-serif;font-size:14.2px;line-height:14.2px;font-weight:normal;color:#1b1b1b;white-space:pre;text-align:right;">-<span style="visibility:hidden">)</span></div>
<div style="position:absolute;right:1744.60px;top:821.68px;font-family:'Liberation Sans', sans-serif;font-size:14.2px;line-height:14.2px;font-weight:normal;color:#1b1b1b;white-space:pre;text-align:right;">-<span style="visibility:hidden">)</span></div>
<div style="position:absolute;right:1625.60px;top:821.68px;font-family:'Liberation Sans', sans-serif;font-size:14.2px;line-height:14.2px;font-weight:normal;color:#1b1b1b;white-space:pre;text-align:right;">-<span style="visibility:hidden">)</span></div>
<div style="position:absolute;right:1506.60px;top:821.68px;font-family:'Liberation Sans', sans-serif;font-size:14.2px;line-height:14.2px;font-weight:normal;color:#1b1b1b;white-space:pre;text-align:right;">-<span style="visibility:hidden">)</span></div>
<div style="position:absolute;right:1387.60px;top:821.68px;font-family:'Liberation Sans', sans-serif;font-size:14.2px;line-height:14.2px;font-weight:normal;color:#1b1b1b;white-space:pre;text-align:right;">-<span style="visibility:hidden">)</span></div>
<div style="position:absolute;right:1268.60px;top:821.68px;font-family:'Liberation Sans', sans-serif;font-size:14.2px;line-height:14.2px;font-weight:normal;color:#1b1b1b;white-space:pre;text-align:right;">-<span style="visibility:hidden">)</span></div>
<div style="position:absolute;right:1149.60px;top:821.68px;font-family:'Liberation Sans', sans-serif;font-size:14.2px;line-height:14.2px;font-weight:normal;color:#1b1b1b;white-space:pre;text-align:right;">-<span style="visibility:hidden">)</span></div>
<div style="position:absolute;right:1030.60px;top:821.68px;font-family:'Liberation Sans', sans-serif;font-size:14.2px;line-height:14.2px;font-weight:normal;color:#1b1b1b;white-space:pre;text-align:right;">-<span style="visibility:hidden">)</span></div>
<div style="position:absolute;right:911.60px;top:821.68px;font-family:'Liberation Sans', sans-serif;font-size:14.2px;line-height:14.2px;font-weight:normal;color:#1b1b1b;white-space:pre;text-align:right;">-<span style="visibility:hidden">)</span></div>
<div style="position:absolute;right:792.60px;top:821.68px;font-family:'Liberation Sans', sans-serif;font-size:14.2px;line-height:14.2px;font-weight:normal;color:#1b1b1b;white-space:pre;text-align:right;">-<span style="visibility:hidden">)</span></div>
<div style="position:absolute;right:673.60px;top:821.68px;font-family:'Liberation Sans', sans-serif;font-size:14.2px;line-height:14.2px;font-weight:normal;color:#1b1b1b;white-space:pre;text-align:right;">-<span style="visibility:hidden">)</span></div>
<div style="position:absolute;right:554.60px;top:821.68px;font-family:'Liberation Sans', sans-serif;font-size:14.2px;line-height:14.2px;font-weight:normal;color:#1b1b1b;white-space:pre;text-align:right;">-<span style="visibility:hidden">)</span></div>
<div style="position:absolute;right:435.60px;top:821.68px;font-family:'Liberation Sans', sans-serif;font-size:14.2px;line-height:14.2px;font-weight:normal;color:#1b1b1b;white-space:pre;text-align:right;">-<span style="visibility:hidden">)</span></div>
<div style="position:absolute;right:316.60px;top:821.68px;font-family:'Liberation Sans', sans-serif;font-size:14.2px;line-height:14.2px;font-weight:normal;color:#1b1b1b;white-space:pre;text-align:right;">-<span style="visibility:hidden">)</span></div>
<div style="position:absolute;right:197.60px;top:821.68px;font-family:'Liberation Sans', sans-serif;font-size:14.2px;line-height:14.2px;font-weight:normal;color:#1b1b1b;white-space:pre;text-align:right;">-<span style="visibility:hidden">)</span></div>
<div style="position:absolute;right:78.60px;top:821.68px;font-family:'Liberation Sans', sans-serif;font-size:14.2px;line-height:14.2px;font-weight:normal;color:#1b1b1b;white-space:pre;text-align:right;">-<span style="visibility:hidden">)</span></div>
<div style="position:absolute;left:139.00px;top:841.16px;font-family:'Liberation Sans', sans-serif;font-size:15.4px;line-height:15.4px;font-weight:normal;color:#1b1b1b;white-space:pre;">Equity Buybacks</div>
<div style="position:absolute;right:1982.60px;top:841.78px;font-family:'Liberation Sans', sans-serif;font-size:14.2px;line-height:14.2px;font-weight:normal;color:#1b1b1b;white-space:pre;text-align:right;">-<span style="visibility:hidden">)</span></div>
<div style="position:absolute;right:1863.60px;top:841.78px;font-family:'Liberation Sans', sans-serif;font-size:14.2px;line-height:14.2px;font-weight:normal;color:#1b1b1b;white-space:pre;text-align:right;">-<span style="visibility:hidden">)</span></div>
<div style="position:absolute;right:1744.60px;top:841.78px;font-family:'Liberation Sans', sans-serif;font-size:14.2px;line-height:14.2px;font-weight:normal;color:#1b1b1b;white-space:pre;text-align:right;">-<span style="visibility:hidden">)</span></div>
<div style="position:absolute;right:1625.60px;top:841.78px;font-family:'Liberation Sans', sans-serif;font-size:14.2px;line-height:14.2px;font-weight:normal;color:#1b1b1b;white-space:pre;text-align:right;">-<span style="visibility:hidden">)</span></div>
<div style="position:absolute;right:1506.60px;top:841.78px;font-family:'Liberation Sans', sans-serif;font-size:14.2px;line-height:14.2px;font-weight:normal;color:#1b1b1b;white-space:pre;text-align:right;">-<span style="visibility:hidden">)</span></div>
<div style="position:absolute;right:1387.60px;top:841.78px;font-family:'Liberation Sans', sans-serif;font-size:14.2px;line-height:14.2px;font-weight:normal;color:#1b1b1b;white-space:pre;text-align:right;">-<span style="visibility:hidden">)</span></div>
<div style="position:absolute;right:1268.60px;top:841.78px;font-family:'Liberation Sans', sans-serif;font-size:14.2px;line-height:14.2px;font-weight:normal;color:#1b1b1b;white-space:pre;text-align:right;">-<span style="visibility:hidden">)</span></div>
<div style="position:absolute;right:1149.60px;top:841.78px;font-family:'Liberation Sans', sans-serif;font-size:14.2px;line-height:14.2px;font-weight:normal;color:#1b1b1b;white-space:pre;text-align:right;">-<span style="visibility:hidden">)</span></div>
<div style="position:absolute;right:1030.60px;top:841.78px;font-family:'Liberation Sans', sans-serif;font-size:14.2px;line-height:14.2px;font-weight:normal;color:#1b1b1b;white-space:pre;text-align:right;">-<span style="visibility:hidden">)</span></div>
<div style="position:absolute;right:911.60px;top:841.78px;font-family:'Liberation Sans', sans-serif;font-size:14.2px;line-height:14.2px;font-weight:normal;color:#1b1b1b;white-space:pre;text-align:right;">-<span style="visibility:hidden">)</span></div>
<div style="position:absolute;right:792.60px;top:841.78px;font-family:'Liberation Sans', sans-serif;font-size:14.2px;line-height:14.2px;font-weight:normal;color:#1b1b1b;white-space:pre;text-align:right;">-<span style="visibility:hidden">)</span></div>
<div style="position:absolute;right:673.60px;top:841.78px;font-family:'Liberation Sans', sans-serif;font-size:14.2px;line-height:14.2px;font-weight:normal;color:#1b1b1b;white-space:pre;text-align:right;">-<span style="visibility:hidden">)</span></div>
<div style="position:absolute;right:554.60px;top:841.78px;font-family:'Liberation Sans', sans-serif;font-size:14.2px;line-height:14.2px;font-weight:normal;color:#1b1b1b;white-space:pre;text-align:right;">-<span style="visibility:hidden">)</span></div>
<div style="position:absolute;right:435.60px;top:841.78px;font-family:'Liberation Sans', sans-serif;font-size:14.2px;line-height:14.2px;font-weight:normal;color:#1b1b1b;white-space:pre;text-align:right;">-<span style="visibility:hidden">)</span></div>
<div style="position:absolute;right:316.60px;top:841.78px;font-family:'Liberation Sans', sans-serif;font-size:14.2px;line-height:14.2px;font-weight:normal;color:#1b1b1b;white-space:pre;text-align:right;">-<span style="visibility:hidden">)</span></div>
<div style="position:absolute;right:197.60px;top:841.78px;font-family:'Liberation Sans', sans-serif;font-size:14.2px;line-height:14.2px;font-weight:normal;color:#1b1b1b;white-space:pre;text-align:right;">-<span style="visibility:hidden">)</span></div>
<div style="position:absolute;right:78.60px;top:841.78px;font-family:'Liberation Sans', sans-serif;font-size:14.2px;line-height:14.2px;font-weight:normal;color:#1b1b1b;white-space:pre;text-align:right;">-<span style="visibility:hidden">)</span></div>
<div style="position:absolute;left:139.00px;top:861.16px;font-family:'Liberation Sans', sans-serif;font-size:15.4px;line-height:15.4px;font-weight:normal;color:#1b1b1b;white-space:pre;">Dividends Paid</div>
<div style="position:absolute;right:1982.60px;top:861.78px;font-family:'Liberation Sans', sans-serif;font-size:14.2px;line-height:14.2px;font-weight:normal;color:#1b1b1b;white-space:pre;text-align:right;">-<span style="visibility:hidden">)</span></div>
<div style="position:absolute;right:1863.60px;top:861.78px;font-family:'Liberation Sans', sans-serif;font-size:14.2px;line-height:14.2px;font-weight:normal;color:#1b1b1b;white-space:pre;text-align:right;">-<span style="visibility:hidden">)</span></div>
<div style="position:absolute;right:1744.60px;top:861.78px;font-family:'Liberation Sans', sans-serif;font-size:14.2px;line-height:14.2px;font-weight:normal;color:#1b1b1b;white-space:pre;text-align:right;">-<span style="visibility:hidden">)</span></div>
<div style="position:absolute;right:1625.60px;top:861.78px;font-family:'Liberation Sans', sans-serif;font-size:14.2px;line-height:14.2px;font-weight:normal;color:#1b1b1b;white-space:pre;text-align:right;">-<span style="visibility:hidden">)</span></div>
<div style="position:absolute;right:1506.60px;top:861.78px;font-family:'Liberation Sans', sans-serif;font-size:14.2px;line-height:14.2px;font-weight:normal;color:#1b1b1b;white-space:pre;text-align:right;">-<span style="visibility:hidden">)</span></div>
<div style="position:absolute;right:1387.60px;top:861.78px;font-family:'Liberation Sans', sans-serif;font-size:14.2px;line-height:14.2px;font-weight:normal;color:#1b1b1b;white-space:pre;text-align:right;">-<span style="visibility:hidden">)</span></div>
<div style="position:absolute;right:1268.60px;top:861.78px;font-family:'Liberation Sans', sans-serif;font-size:14.2px;line-height:14.2px;font-weight:normal;color:#1b1b1b;white-space:pre;text-align:right;">-<span style="visibility:hidden">)</span></div>
<div style="position:absolute;right:1149.60px;top:861.78px;font-family:'Liberation Sans', sans-serif;font-size:14.2px;line-height:14.2px;font-weight:normal;color:#1b1b1b;white-space:pre;text-align:right;">-<span style="visibility:hidden">)</span></div>
<div style="position:absolute;right:1030.60px;top:861.78px;font-family:'Liberation Sans', sans-serif;font-size:14.2px;line-height:14.2px;font-weight:normal;color:#1b1b1b;white-space:pre;text-align:right;">-<span style="visibility:hidden">)</span></div>
<div style="position:absolute;right:911.60px;top:861.78px;font-family:'Liberation Sans', sans-serif;font-size:14.2px;line-height:14.2px;font-weight:normal;color:#1b1b1b;white-space:pre;text-align:right;">-<span style="visibility:hidden">)</span></div>
<div style="position:absolute;right:792.60px;top:861.78px;font-family:'Liberation Sans', sans-serif;font-size:14.2px;line-height:14.2px;font-weight:normal;color:#1b1b1b;white-space:pre;text-align:right;">-<span style="visibility:hidden">)</span></div>
<div style="position:absolute;right:673.60px;top:861.78px;font-family:'Liberation Sans', sans-serif;font-size:14.2px;line-height:14.2px;font-weight:normal;color:#1b1b1b;white-space:pre;text-align:right;">-<span style="visibility:hidden">)</span></div>
<div style="position:absolute;right:554.60px;top:861.78px;font-family:'Liberation Sans', sans-serif;font-size:14.2px;line-height:14.2px;font-weight:normal;color:#1b1b1b;white-space:pre;text-align:right;">-<span style="visibility:hidden">)</span></div>
<div style="position:absolute;right:435.60px;top:861.78px;font-family:'Liberation Sans', sans-serif;font-size:14.2px;line-height:14.2px;font-weight:normal;color:#1b1b1b;white-space:pre;text-align:right;">-<span style="visibility:hidden">)</span></div>
<div style="position:absolute;right:316.60px;top:861.78px;font-family:'Liberation Sans', sans-serif;font-size:14.2px;line-height:14.2px;font-weight:normal;color:#1b1b1b;white-space:pre;text-align:right;">-<span style="visibility:hidden">)</span></div>
<div style="position:absolute;right:197.60px;top:861.78px;font-family:'Liberation Sans', sans-serif;font-size:14.2px;line-height:14.2px;font-weight:normal;color:#1b1b1b;white-space:pre;text-align:right;">-<span style="visibility:hidden">)</span></div>
<div style="position:absolute;right:78.60px;top:861.78px;font-family:'Liberation Sans', sans-serif;font-size:14.2px;line-height:14.2px;font-weight:normal;color:#1b1b1b;white-space:pre;text-align:right;">-<span style="visibility:hidden">)</span></div>
<div style="position:absolute;left:135.00px;top:878.10px;width:2725.00px;height:20.70px;background:#4ab2e8;"></div>
<div style="position:absolute;left:146.50px;top:881.01px;font-family:'Liberation Sans', sans-serif;font-size:17.0px;line-height:17.0px;font-weight:bold;color:#ffffff;white-space:pre;">Net Cash Flow from Financing Activities</div>
<div style="position:absolute;right:1983.60px;top:878.98px;font-family:'Liberation Serif', serif;font-size:19.4px;line-height:19.4px;font-weight:bold;color:#ffffff;white-space:pre;text-align:right;transform:scaleY(0.93);transform-origin:0 16.25px;-webkit-text-stroke:0.25px #ffffff">900,000<span style="visibility:hidden">)</span></div>
<div style="position:absolute;right:1864.60px;top:880.50px;font-family:'Liberation Sans', sans-serif;font-size:17.6px;line-height:17.6px;font-weight:normal;color:#ffffff;white-space:pre;text-align:right;">-<span style="visibility:hidden">)</span></div>
<div style="position:absolute;right:1745.60px;top:878.98px;font-family:'Liberation Serif', serif;font-size:19.4px;line-height:19.4px;font-weight:bold;color:#ffffff;white-space:pre;text-align:right;transform:scaleY(0.93);transform-origin:0 16.25px;-webkit-text-stroke:0.25px #ffffff">98,333<span style="visibility:hidden">)</span></div>
<div style="position:absolute;right:1626.60px;top:878.98px;font-family:'Liberation Serif', serif;font-size:19.4px;line-height:19.4px;font-weight:bold;color:#ffffff;white-space:pre;text-align:right;transform:scaleY(0.93);transform-origin:0 16.25px;-webkit-text-stroke:0.25px #ffffff">(1,667)</div>
<div style="position:absolute;right:1507.60px;top:878.98px;font-family:'Liberation Serif', serif;font-size:19.4px;line-height:19.4px;font-weight:bold;color:#ffffff;white-space:pre;text-align:right;transform:scaleY(0.93);transform-origin:0 16.25px;-webkit-text-stroke:0.25px #ffffff">(1,667)</div>
<div style="position:absolute;right:1388.60px;top:878.98px;font-family:'Liberation Serif', serif;font-size:19.4px;line-height:19.4px;font-weight:bold;color:#ffffff;white-space:pre;text-align:right;transform:scaleY(0.93);transform-origin:0 16.25px;-webkit-text-stroke:0.25px #ffffff">(1,667)</div>
<div style="position:absolute;right:1269.60px;top:878.98px;font-family:'Liberation Serif', serif;font-size:19.4px;line-height:19.4px;font-weight:bold;color:#ffffff;white-space:pre;text-align:right;transform:scaleY(0.93);transform-origin:0 16.25px;-webkit-text-stroke:0.25px #ffffff">(1,667)</div>
<div style="position:absolute;right:1150.60px;top:878.98px;font-family:'Liberation Serif', serif;font-size:19.4px;line-height:19.4px;font-weight:bold;color:#ffffff;white-space:pre;text-align:right;transform:scaleY(0.93);transform-origin:0 16.25px;-webkit-text-stroke:0.25px #ffffff">(1,667)</div>
<div style="position:absolute;right:1031.60px;top:878.98px;font-family:'Liberation Serif', serif;font-size:19.4px;line-height:19.4px;font-weight:bold;color:#ffffff;white-space:pre;text-align:right;transform:scaleY(0.93);transform-origin:0 16.25px;-webkit-text-stroke:0.25px #ffffff">(1,667)</div>
<div style="position:absolute;right:912.60px;top:878.98px;font-family:'Liberation Serif', serif;font-size:19.4px;line-height:19.4px;font-weight:bold;color:#ffffff;white-space:pre;text-align:right;transform:scaleY(0.93);transform-origin:0 16.25px;-webkit-text-stroke:0.25px #ffffff">(1,667)</div>
<div style="position:absolute;right:793.60px;top:878.98px;font-family:'Liberation Serif', serif;font-size:19.4px;line-height:19.4px;font-weight:bold;color:#ffffff;white-space:pre;text-align:right;transform:scaleY(0.93);transform-origin:0 16.25px;-webkit-text-stroke:0.25px #ffffff">(1,667)</div>
<div style="position:absolute;right:674.60px;top:878.98px;font-family:'Liberation Serif', serif;font-size:19.4px;line-height:19.4px;font-weight:bold;color:#ffffff;white-space:pre;text-align:right;transform:scaleY(0.93);transform-origin:0 16.25px;-webkit-text-stroke:0.25px #ffffff">(1,667)</div>
<div style="position:absolute;right:555.60px;top:878.98px;font-family:'Liberation Serif', serif;font-size:19.4px;line-height:19.4px;font-weight:bold;color:#ffffff;white-space:pre;text-align:right;transform:scaleY(0.93);transform-origin:0 16.25px;-webkit-text-stroke:0.25px #ffffff">(3,770)</div>
<div style="position:absolute;right:436.60px;top:878.98px;font-family:'Liberation Serif', serif;font-size:19.4px;line-height:19.4px;font-weight:bold;color:#ffffff;white-space:pre;text-align:right;transform:scaleY(0.93);transform-origin:0 16.25px;-webkit-text-stroke:0.25px #ffffff">(3,780)</div>
<div style="position:absolute;right:317.60px;top:878.98px;font-family:'Liberation Serif', serif;font-size:19.4px;line-height:19.4px;font-weight:bold;color:#ffffff;white-space:pre;text-align:right;transform:scaleY(0.93);transform-origin:0 16.25px;-webkit-text-stroke:0.25px #ffffff">(3,791)</div>
<div style="position:absolute;right:198.60px;top:878.98px;font-family:'Liberation Serif', serif;font-size:19.4px;line-height:19.4px;font-weight:bold;color:#ffffff;white-space:pre;text-align:right;transform:scaleY(0.93);transform-origin:0 16.25px;-webkit-text-stroke:0.25px #ffffff">(3,801)</div>
<div style="position:absolute;right:79.60px;top:878.98px;font-family:'Liberation Serif', serif;font-size:19.4px;line-height:19.4px;font-weight:bold;color:#ffffff;white-space:pre;text-align:right;transform:scaleY(0.93);transform-origin:0 16.25px;-webkit-text-stroke:0.25px #ffffff">(3,812)</div>
<div style="position:absolute;left:135.00px;top:915.30px;width:2725.00px;height:20.70px;background:#4ab2e8;"></div>
<div style="position:absolute;left:146.50px;top:918.21px;font-family:'Liberation Sans', sans-serif;font-size:17.0px;line-height:17.0px;font-weight:bold;color:#ffffff;white-space:pre;">Net Increase/(Decrease) in Cash Held</div>
<div style="position:absolute;right:1983.60px;top:916.18px;font-family:'Liberation Serif', serif;font-size:19.4px;line-height:19.4px;font-weight:bold;color:#ffffff;white-space:pre;text-align:right;transform:scaleY(0.93);transform-origin:0 16.25px;-webkit-text-stroke:0.25px #ffffff">894,153<span style="visibility:hidden">)</span></div>
<div style="position:absolute;right:1864.60px;top:916.18px;font-family:'Liberation Serif', serif;font-size:19.4px;line-height:19.4px;font-weight:bold;color:#ffffff;white-space:pre;text-align:right;transform:scaleY(0.93);transform-origin:0 16.25px;-webkit-text-stroke:0.25px #ffffff">3,502<span style="visibility:hidden">)</span></div>
<div style="position:absolute;right:1745.60px;top:916.18px;font-family:'Liberation Serif', serif;font-size:19.4px;line-height:19.4px;font-weight:bold;color:#ffffff;white-space:pre;text-align:right;transform:scaleY(0.93);transform-origin:0 16.25px;-webkit-text-stroke:0.25px #ffffff">102,238<span style="visibility:hidden">)</span></div>
<div style="position:absolute;right:1626.60px;top:916.18px;font-family:'Liberation Serif', serif;font-size:19.4px;line-height:19.4px;font-weight:bold;color:#ffffff;white-space:pre;text-align:right;transform:scaleY(0.93);transform-origin:0 16.25px;-webkit-text-stroke:0.25px #ffffff">4,747<span style="visibility:hidden">)</span></div>
<div style="position:absolute;right:1507.60px;top:916.18px;font-family:'Liberation Serif', serif;font-size:19.4px;line-height:19.4px;font-weight:bold;color:#ffffff;white-space:pre;text-align:right;transform:scaleY(0.93);transform-origin:0 16.25px;-webkit-text-stroke:0.25px #ffffff">7,578<span style="visibility:hidden">)</span></div>
<div style="position:absolute;right:1388.60px;top:916.18px;font-family:'Liberation Serif', serif;font-size:19.4px;line-height:19.4px;font-weight:bold;color:#ffffff;white-space:pre;text-align:right;transform:scaleY(0.93);transform-origin:0 16.25px;-webkit-text-stroke:0.25px #ffffff">8,696<span style="visibility:hidden">)</span></div>
<div style="position:absolute;right:1269.60px;top:916.18px;font-family:'Liberation Serif', serif;font-size:19.4px;line-height:19.4px;font-weight:bold;color:#ffffff;white-space:pre;text-align:right;transform:scaleY(0.93);transform-origin:0 16.25px;-webkit-text-stroke:0.25px #ffffff">10,853<span style="visibility:hidden">)</span></div>
<div style="position:absolute;right:1150.60px;top:916.18px;font-family:'Liberation Serif', serif;font-size:19.4px;line-height:19.4px;font-weight:bold;color:#ffffff;white-space:pre;text-align:right;transform:scaleY(0.93);transform-origin:0 16.25px;-webkit-text-stroke:0.25px #ffffff">11,040<span style="visibility:hidden">)</span></div>
<div style="position:absolute;right:1031.60px;top:916.18px;font-family:'Liberation Serif', serif;font-size:19.4px;line-height:19.4px;font-weight:bold;color:#ffffff;white-space:pre;text-align:right;transform:scaleY(0.93);transform-origin:0 16.25px;-webkit-text-stroke:0.25px #ffffff">11,350<span style="visibility:hidden">)</span></div>
<div style="position:absolute;right:912.60px;top:916.18px;font-family:'Liberation Serif', serif;font-size:19.4px;line-height:19.4px;font-weight:bold;color:#ffffff;white-space:pre;text-align:right;transform:scaleY(0.93);transform-origin:0 16.25px;-webkit-text-stroke:0.25px #ffffff">12,254<span style="visibility:hidden">)</span></div>
<div style="position:absolute;right:793.60px;top:916.18px;font-family:'Liberation Serif', serif;font-size:19.4px;line-height:19.4px;font-weight:bold;color:#ffffff;white-space:pre;text-align:right;transform:scaleY(0.93);transform-origin:0 16.25px;-webkit-text-stroke:0.25px #ffffff">11,367<span style="visibility:hidden">)</span></div>
<div style="position:absolute;right:674.60px;top:916.18px;font-family:'Liberation Serif', serif;font-size:19.4px;line-height:19.4px;font-weight:bold;color:#ffffff;white-space:pre;text-align:right;transform:scaleY(0.93);transform-origin:0 16.25px;-webkit-text-stroke:0.25px #ffffff">12,271<span style="visibility:hidden">)</span></div>
<div style="position:absolute;right:555.60px;top:916.18px;font-family:'Liberation Serif', serif;font-size:19.4px;line-height:19.4px;font-weight:bold;color:#ffffff;white-space:pre;text-align:right;transform:scaleY(0.93);transform-origin:0 16.25px;-webkit-text-stroke:0.25px #ffffff">24,124<span style="visibility:hidden">)</span></div>
<div style="position:absolute;right:436.60px;top:916.18px;font-family:'Liberation Serif', serif;font-size:19.4px;line-height:19.4px;font-weight:bold;color:#ffffff;white-space:pre;text-align:right;transform:scaleY(0.93);transform-origin:0 16.25px;-webkit-text-stroke:0.25px #ffffff">62,508<span style="visibility:hidden">)</span></div>
<div style="position:absolute;right:317.60px;top:916.18px;font-family:'Liberation Serif', serif;font-size:19.4px;line-height:19.4px;font-weight:bold;color:#ffffff;white-space:pre;text-align:right;transform:scaleY(0.93);transform-origin:0 16.25px;-webkit-text-stroke:0.25px #ffffff">74,950<span style="visibility:hidden">)</span></div>
<div style="position:absolute;right:198.60px;top:916.18px;font-family:'Liberation Serif', serif;font-size:19.4px;line-height:19.4px;font-weight:bold;color:#ffffff;white-space:pre;text-align:right;transform:scaleY(0.93);transform-origin:0 16.25px;-webkit-text-stroke:0.25px #ffffff">66,803<span style="visibility:hidden">)</span></div>
<div style="position:absolute;right:79.60px;top:916.18px;font-family:'Liberation Serif', serif;font-size:19.4px;line-height:19.4px;font-weight:bold;color:#ffffff;white-space:pre;text-align:right;transform:scaleY(0.93);transform-origin:0 16.25px;-webkit-text-stroke:0.25px #ffffff">70,678<span style="visibility:hidden">)</span></div>
<div style="position:absolute;left:114.00px;top:971.94px;font-family:'Liberation Sans', sans-serif;font-size:21.1px;line-height:21.1px;font-weight:bold;color:#1b1b1b;white-space:pre;">Cash Flow Statement (indirect method), $</div>
<div style="position:absolute;left:126.60px;top:1011.66px;font-family:'Liberation Sans', sans-serif;font-size:18.6px;line-height:18.6px;font-weight:bold;color:#1b1b1b;white-space:pre;">Operating Activities</div>
<div style="position:absolute;left:139.00px;top:1035.16px;font-family:'Liberation Sans', sans-serif;font-size:15.4px;line-height:15.4px;font-weight:normal;color:#1b1b1b;white-space:pre;">Net Income Less Depreciation</div>
<div style="position:absolute;right:1983.60px;top:1034.17px;font-family:'Liberation Sans', sans-serif;font-size:16.1px;line-height:16.1px;font-weight:normal;color:#1b1b1b;white-space:pre;text-align:right;">13,840<span style="visibility:hidden">)</span></div>
<div style="position:absolute;right:1864.60px;top:1034.17px;font-family:'Liberation Sans', sans-serif;font-size:16.1px;line-height:16.1px;font-weight:normal;color:#1b1b1b;white-space:pre;text-align:right;">13,859<span style="visibility:hidden">)</span></div>
<div style="position:absolute;right:1745.60px;top:1034.17px;font-family:'Liberation Sans', sans-serif;font-size:16.1px;line-height:16.1px;font-weight:normal;color:#1b1b1b;white-space:pre;text-align:right;">13,382<span style="visibility:hidden">)</span></div>
<div style="position:absolute;right:1626.60px;top:1034.17px;font-family:'Liberation Sans', sans-serif;font-size:16.1px;line-height:16.1px;font-weight:normal;color:#1b1b1b;white-space:pre;text-align:right;">13,403<span style="visibility:hidden">)</span></div>
<div style="position:absolute;right:1507.60px;top:1034.17px;font-family:'Liberation Sans', sans-serif;font-size:16.1px;line-height:16.1px;font-weight:normal;color:#1b1b1b;white-space:pre;text-align:right;">13,421<span style="visibility:hidden">)</span></div>
<div style="position:absolute;right:1388.60px;top:1034.17px;font-family:'Liberation Sans', sans-serif;font-size:16.1px;line-height:16.1px;font-weight:normal;color:#1b1b1b;white-space:pre;text-align:right;">13,435<span style="visibility:hidden">)</span></div>
<div style="position:absolute;right:1269.60px;top:1034.17px;font-family:'Liberation Sans', sans-serif;font-size:16.1px;line-height:16.1px;font-weight:normal;color:#1b1b1b;white-space:pre;text-align:right;">13,446<span style="visibility:hidden">)</span></div>
<div style="position:absolute;right:1150.60px;top:1034.17px;font-family:'Liberation Sans', sans-serif;font-size:16.1px;line-height:16.1px;font-weight:normal;color:#1b1b1b;white-space:pre;text-align:right;">13,456<span style="visibility:hidden">)</span></div>
<div style="position:absolute;right:1031.60px;top:1034.17px;font-family:'Liberation Sans', sans-serif;font-size:16.1px;line-height:16.1px;font-weight:normal;color:#1b1b1b;white-space:pre;text-align:right;">13,465<span style="visibility:hidden">)</span></div>
<div style="position:absolute;right:912.60px;top:1034.17px;font-family:'Liberation Sans', sans-serif;font-size:16.1px;line-height:16.1px;font-weight:normal;color:#1b1b1b;white-space:pre;text-align:right;">13,473<span style="visibility:hidden">)</span></div>
<div style="position:absolute;right:793.60px;top:1034.17px;font-family:'Liberation Sans', sans-serif;font-size:16.1px;line-height:16.1px;font-weight:normal;color:#1b1b1b;white-space:pre;text-align:right;">13,481<span style="visibility:hidden">)</span></div>
<div style="position:absolute;right:674.60px;top:1034.17px;font-family:'Liberation Sans', sans-serif;font-size:16.1px;line-height:16.1px;font-weight:normal;color:#1b1b1b;white-space:pre;text-align:right;">13,490<span style="visibility:hidden">)</span></div>
<div style="position:absolute;right:555.60px;top:1034.17px;font-family:'Liberation Sans', sans-serif;font-size:16.1px;line-height:16.1px;font-weight:normal;color:#1b1b1b;white-space:pre;text-align:right;">72,490<span style="visibility:hidden">)</span></div>
<div style="position:absolute;right:436.60px;top:1034.17px;font-family:'Liberation Sans', sans-serif;font-size:16.1px;line-height:16.1px;font-weight:normal;color:#1b1b1b;white-space:pre;text-align:right;">72,506<span style="visibility:hidden">)</span></div>
<div style="position:absolute;right:317.60px;top:1034.17px;font-family:'Liberation Sans', sans-serif;font-size:16.1px;line-height:16.1px;font-weight:normal;color:#1b1b1b;white-space:pre;text-align:right;">72,523<span style="visibility:hidden">)</span></div>
<div style="position:absolute;right:198.60px;top:1034.17px;font-family:'Liberation Sans', sans-serif;font-size:16.1px;line-height:16.1px;font-weight:normal;color:#1b1b1b;white-space:pre;text-align:right;">72,539<span style="visibility:hidden">)</span></div>
<div style="position:absolute;right:79.60px;top:1034.17px;font-family:'Liberation Sans', sans-serif;font-size:16.1px;line-height:16.1px;font-weight:normal;color:#1b1b1b;white-space:pre;text-align:right;">72,555<span style="visibility:hidden">)</span></div>
<div style="position:absolute;left:139.00px;top:1056.06px;font-family:'Liberation Sans', sans-serif;font-size:15.4px;line-height:15.4px;font-weight:normal;color:#1b1b1b;white-space:pre;">Changes in Working Capital</div>
<div style="position:absolute;right:1983.60px;top:1055.07px;font-family:'Liberation Sans', sans-serif;font-size:16.1px;line-height:16.1px;font-weight:normal;color:#1b1b1b;white-space:pre;text-align:right;">(13,437)</div>
<div style="position:absolute;right:1864.60px;top:1055.07px;font-family:'Liberation Sans', sans-serif;font-size:16.1px;line-height:16.1px;font-weight:normal;color:#1b1b1b;white-space:pre;text-align:right;">(1,440)</div>
<div style="position:absolute;right:1745.60px;top:1055.07px;font-family:'Liberation Sans', sans-serif;font-size:16.1px;line-height:16.1px;font-weight:normal;color:#1b1b1b;white-space:pre;text-align:right;">1,440<span style="visibility:hidden">)</span></div>
<div style="position:absolute;right:1626.60px;top:1055.07px;font-family:'Liberation Sans', sans-serif;font-size:16.1px;line-height:16.1px;font-weight:normal;color:#1b1b1b;white-space:pre;text-align:right;">(448)</div>
<div style="position:absolute;right:1507.60px;top:1055.07px;font-family:'Liberation Sans', sans-serif;font-size:16.1px;line-height:16.1px;font-weight:normal;color:#1b1b1b;white-space:pre;text-align:right;">448<span style="visibility:hidden">)</span></div>
<div style="position:absolute;right:1388.60px;top:1055.07px;font-family:'Liberation Sans', sans-serif;font-size:16.1px;line-height:16.1px;font-weight:normal;color:#1b1b1b;white-space:pre;text-align:right;">(448)</div>
<div style="position:absolute;right:1269.60px;top:1055.07px;font-family:'Liberation Sans', sans-serif;font-size:16.1px;line-height:16.1px;font-weight:normal;color:#1b1b1b;white-space:pre;text-align:right;">448<span style="visibility:hidden">)</span></div>
<div style="position:absolute;right:1150.60px;top:1055.07px;font-family:'Liberation Sans', sans-serif;font-size:16.1px;line-height:16.1px;font-weight:normal;color:#1b1b1b;white-space:pre;text-align:right;">-<span style="visibility:hidden">)</span></div>
<div style="position:absolute;right:1031.60px;top:1055.07px;font-family:'Liberation Sans', sans-serif;font-size:16.1px;line-height:16.1px;font-weight:normal;color:#1b1b1b;white-space:pre;text-align:right;">(448)</div>
<div style="position:absolute;right:912.60px;top:1055.07px;font-family:'Liberation Sans', sans-serif;font-size:16.1px;line-height:16.1px;font-weight:normal;color:#1b1b1b;white-space:pre;text-align:right;">448<span style="visibility:hidden">)</span></div>
<div style="position:absolute;right:793.60px;top:1055.07px;font-family:'Liberation Sans', sans-serif;font-size:16.1px;line-height:16.1px;font-weight:normal;color:#1b1b1b;white-space:pre;text-align:right;">(448)</div>
<div style="position:absolute;right:674.60px;top:1055.07px;font-family:'Liberation Sans', sans-serif;font-size:16.1px;line-height:16.1px;font-weight:normal;color:#1b1b1b;white-space:pre;text-align:right;">448<span style="visibility:hidden">)</span></div>
<div style="position:absolute;right:555.60px;top:1055.07px;font-family:'Liberation Sans', sans-serif;font-size:16.1px;line-height:16.1px;font-weight:normal;color:#1b1b1b;white-space:pre;text-align:right;">(44,597)</div>
<div style="position:absolute;right:436.60px;top:1055.07px;font-family:'Liberation Sans', sans-serif;font-size:16.1px;line-height:16.1px;font-weight:normal;color:#1b1b1b;white-space:pre;text-align:right;">(6,218)</div>
<div style="position:absolute;right:317.60px;top:1055.07px;font-family:'Liberation Sans', sans-serif;font-size:16.1px;line-height:16.1px;font-weight:normal;color:#1b1b1b;white-space:pre;text-align:right;">6,218<span style="visibility:hidden">)</span></div>
<div style="position:absolute;right:198.60px;top:1055.07px;font-family:'Liberation Sans', sans-serif;font-size:16.1px;line-height:16.1px;font-weight:normal;color:#1b1b1b;white-space:pre;text-align:right;">(1,934)</div>
<div style="position:absolute;right:79.60px;top:1055.07px;font-family:'Liberation Sans', sans-serif;font-size:16.1px;line-height:16.1px;font-weight:normal;color:#1b1b1b;white-space:pre;text-align:right;">1,934<span style="visibility:hidden">)</span></div>
<div style="position:absolute;left:121.70px;top:1073.00px;width:2738.30px;height:20.80px;background:#4ab2e8;"></div>
<div style="position:absolute;left:135.00px;top:1076.41px;font-family:'Liberation Sans', sans-serif;font-size:17.0px;line-height:17.0px;font-weight:bold;color:#ffffff;white-space:pre;">Total Operating Activities</div>
<div style="position:absolute;right:1983.60px;top:1074.38px;font-family:'Liberation Serif', serif;font-size:19.4px;line-height:19.4px;font-weight:bold;color:#ffffff;white-space:pre;text-align:right;transform:scaleY(0.93);transform-origin:0 16.25px;-webkit-text-stroke:0.25px #ffffff">403<span style="visibility:hidden">)</span></div>
<div style="position:absolute;right:1864.60px;top:1074.38px;font-family:'Liberation Serif', serif;font-size:19.4px;line-height:19.4px;font-weight:bold;color:#ffffff;white-space:pre;text-align:right;transform:scaleY(0.93);transform-origin:0 16.25px;-webkit-text-stroke:0.25px #ffffff">12,419<span style="visibility:hidden">)</span></div>
<div style="position:absolute;right:1745.60px;top:1074.38px;font-family:'Liberation Serif', serif;font-size:19.4px;line-height:19.4px;font-weight:bold;color:#ffffff;white-space:pre;text-align:right;transform:scaleY(0.93);transform-origin:0 16.25px;-webkit-text-stroke:0.25px #ffffff">14,821<span style="visibility:hidden">)</span></div>
<div style="position:absolute;right:1626.60px;top:1074.38px;font-family:'Liberation Serif', serif;font-size:19.4px;line-height:19.4px;font-weight:bold;color:#ffffff;white-space:pre;text-align:right;transform:scaleY(0.93);transform-origin:0 16.25px;-webkit-text-stroke:0.25px #ffffff">12,956<span style="visibility:hidden">)</span></div>
<div style="position:absolute;right:1507.60px;top:1074.38px;font-family:'Liberation Serif', serif;font-size:19.4px;line-height:19.4px;font-weight:bold;color:#ffffff;white-space:pre;text-align:right;transform:scaleY(0.93);transform-origin:0 16.25px;-webkit-text-stroke:0.25px #ffffff">13,869<span style="visibility:hidden">)</span></div>
<div style="position:absolute;right:1388.60px;top:1074.38px;font-family:'Liberation Serif', serif;font-size:19.4px;line-height:19.4px;font-weight:bold;color:#ffffff;white-space:pre;text-align:right;transform:scaleY(0.93);transform-origin:0 16.25px;-webkit-text-stroke:0.25px #ffffff">12,987<span style="visibility:hidden">)</span></div>
<div style="position:absolute;right:1269.60px;top:1074.38px;font-family:'Liberation Serif', serif;font-size:19.4px;line-height:19.4px;font-weight:bold;color:#ffffff;white-space:pre;text-align:right;transform:scaleY(0.93);transform-origin:0 16.25px;-webkit-text-stroke:0.25px #ffffff">13,894<span style="visibility:hidden">)</span></div>
<div style="position:absolute;right:1150.60px;top:1074.38px;font-family:'Liberation Serif', serif;font-size:19.4px;line-height:19.4px;font-weight:bold;color:#ffffff;white-space:pre;text-align:right;transform:scaleY(0.93);transform-origin:0 16.25px;-webkit-text-stroke:0.25px #ffffff">13,456<span style="visibility:hidden">)</span></div>
<div style="position:absolute;right:1031.60px;top:1074.38px;font-family:'Liberation Serif', serif;font-size:19.4px;line-height:19.4px;font-weight:bold;color:#ffffff;white-space:pre;text-align:right;transform:scaleY(0.93);transform-origin:0 16.25px;-webkit-text-stroke:0.25px #ffffff">13,017<span style="visibility:hidden">)</span></div>
<div style="position:absolute;right:912.60px;top:1074.38px;font-family:'Liberation Serif', serif;font-size:19.4px;line-height:19.4px;font-weight:bold;color:#ffffff;white-space:pre;text-align:right;transform:scaleY(0.93);transform-origin:0 16.25px;-webkit-text-stroke:0.25px #ffffff">13,921<span style="visibility:hidden">)</span></div>
<div style="position:absolute;right:793.60px;top:1074.38px;font-family:'Liberation Serif', serif;font-size:19.4px;line-height:19.4px;font-weight:bold;color:#ffffff;white-space:pre;text-align:right;transform:scaleY(0.93);transform-origin:0 16.25px;-webkit-text-stroke:0.25px #ffffff">13,033<span style="visibility:hidden">)</span></div>
<div style="position:absolute;right:674.60px;top:1074.38px;font-family:'Liberation Serif', serif;font-size:19.4px;line-height:19.4px;font-weight:bold;color:#ffffff;white-space:pre;text-align:right;transform:scaleY(0.93);transform-origin:0 16.25px;-webkit-text-stroke:0.25px #ffffff">13,938<span style="visibility:hidden">)</span></div>
<div style="position:absolute;right:555.60px;top:1074.38px;font-family:'Liberation Serif', serif;font-size:19.4px;line-height:19.4px;font-weight:bold;color:#ffffff;white-space:pre;text-align:right;transform:scaleY(0.93);transform-origin:0 16.25px;-webkit-text-stroke:0.25px #ffffff">27,893<span style="visibility:hidden">)</span></div>
<div style="position:absolute;right:436.60px;top:1074.38px;font-family:'Liberation Serif', serif;font-size:19.4px;line-height:19.4px;font-weight:bold;color:#ffffff;white-space:pre;text-align:right;transform:scaleY(0.93);transform-origin:0 16.25px;-webkit-text-stroke:0.25px #ffffff">66,289<span style="visibility:hidden">)</span></div>
<div style="position:absolute;right:317.60px;top:1074.38px;font-family:'Liberation Serif', serif;font-size:19.4px;line-height:19.4px;font-weight:bold;color:#ffffff;white-space:pre;text-align:right;transform:scaleY(0.93);transform-origin:0 16.25px;-webkit-text-stroke:0.25px #ffffff">78,741<span style="visibility:hidden">)</span></div>
<div style="position:absolute;right:198.60px;top:1074.38px;font-family:'Liberation Serif', serif;font-size:19.4px;line-height:19.4px;font-weight:bold;color:#ffffff;white-space:pre;text-align:right;transform:scaleY(0.93);transform-origin:0 16.25px;-webkit-text-stroke:0.25px #ffffff">70,605<span style="visibility:hidden">)</span></div>
<div style="position:absolute;right:79.60px;top:1074.38px;font-family:'Liberation Serif', serif;font-size:19.4px;line-height:19.4px;font-weight:bold;color:#ffffff;white-space:pre;text-align:right;transform:scaleY(0.93);transform-origin:0 16.25px;-webkit-text-stroke:0.25px #ffffff">74,490<span style="visibility:hidden">)</span></div>
<div style="position:absolute;left:126.60px;top:1119.36px;font-family:'Liberation Sans', sans-serif;font-size:18.6px;line-height:18.6px;font-weight:bold;color:#1b1b1b;white-space:pre;">Investing Activities</div>
<div style="position:absolute;left:139.00px;top:1143.46px;font-family:'Liberation Sans', sans-serif;font-size:15.4px;line-height:15.4px;font-weight:normal;color:#1b1b1b;white-space:pre;">Capital Expenditure</div>
<div style="position:absolute;right:1983.60px;top:1142.47px;font-family:'Liberation Sans', sans-serif;font-size:16.1px;line-height:16.1px;font-weight:normal;color:#1b1b1b;white-space:pre;text-align:right;">(6,250)</div>
<div style="position:absolute;right:1864.60px;top:1142.47px;font-family:'Liberation Sans', sans-serif;font-size:16.1px;line-height:16.1px;font-weight:normal;color:#1b1b1b;white-space:pre;text-align:right;">(8,917)</div>
<div style="position:absolute;right:1745.60px;top:1142.47px;font-family:'Liberation Sans', sans-serif;font-size:16.1px;line-height:16.1px;font-weight:normal;color:#1b1b1b;white-space:pre;text-align:right;">(10,917)</div>
<div style="position:absolute;right:1626.60px;top:1142.47px;font-family:'Liberation Sans', sans-serif;font-size:16.1px;line-height:16.1px;font-weight:normal;color:#1b1b1b;white-space:pre;text-align:right;">(6,542)</div>
<div style="position:absolute;right:1507.60px;top:1142.47px;font-family:'Liberation Sans', sans-serif;font-size:16.1px;line-height:16.1px;font-weight:normal;color:#1b1b1b;white-space:pre;text-align:right;">(4,625)</div>
<div style="position:absolute;right:1388.60px;top:1142.47px;font-family:'Liberation Sans', sans-serif;font-size:16.1px;line-height:16.1px;font-weight:normal;color:#1b1b1b;white-space:pre;text-align:right;">(2,625)</div>
<div style="position:absolute;right:1269.60px;top:1142.47px;font-family:'Liberation Sans', sans-serif;font-size:16.1px;line-height:16.1px;font-weight:normal;color:#1b1b1b;white-space:pre;text-align:right;">(1,375)</div>
<div style="position:absolute;right:1150.60px;top:1142.47px;font-family:'Liberation Sans', sans-serif;font-size:16.1px;line-height:16.1px;font-weight:normal;color:#1b1b1b;white-space:pre;text-align:right;">(750)</div>
<div style="position:absolute;right:1031.60px;top:1142.47px;font-family:'Liberation Sans', sans-serif;font-size:16.1px;line-height:16.1px;font-weight:normal;color:#1b1b1b;white-space:pre;text-align:right;">-<span style="visibility:hidden">)</span></div>
<div style="position:absolute;right:912.60px;top:1142.47px;font-family:'Liberation Sans', sans-serif;font-size:16.1px;line-height:16.1px;font-weight:normal;color:#1b1b1b;white-space:pre;text-align:right;">-<span style="visibility:hidden">)</span></div>
<div style="position:absolute;right:793.60px;top:1142.47px;font-family:'Liberation Sans', sans-serif;font-size:16.1px;line-height:16.1px;font-weight:normal;color:#1b1b1b;white-space:pre;text-align:right;">-<span style="visibility:hidden">)</span></div>
<div style="position:absolute;right:674.60px;top:1142.47px;font-family:'Liberation Sans', sans-serif;font-size:16.1px;line-height:16.1px;font-weight:normal;color:#1b1b1b;white-space:pre;text-align:right;">-<span style="visibility:hidden">)</span></div>
<div style="position:absolute;right:555.60px;top:1142.47px;font-family:'Liberation Sans', sans-serif;font-size:16.1px;line-height:16.1px;font-weight:normal;color:#1b1b1b;white-space:pre;text-align:right;">-<span style="visibility:hidden">)</span></div>
<div style="position:absolute;right:436.60px;top:1142.47px;font-family:'Liberation Sans', sans-serif;font-size:16.1px;line-height:16.1px;font-weight:normal;color:#1b1b1b;white-space:pre;text-align:right;">-<span style="visibility:hidden">)</span></div>
<div style="position:absolute;right:317.60px;top:1142.47px;font-family:'Liberation Sans', sans-serif;font-size:16.1px;line-height:16.1px;font-weight:normal;color:#1b1b1b;white-space:pre;text-align:right;">-<span style="visibility:hidden">)</span></div>
<div style="position:absolute;right:198.60px;top:1142.47px;font-family:'Liberation Sans', sans-serif;font-size:16.1px;line-height:16.1px;font-weight:normal;color:#1b1b1b;white-space:pre;text-align:right;">-<span style="visibility:hidden">)</span></div>
<div style="position:absolute;right:79.60px;top:1142.47px;font-family:'Liberation Sans', sans-serif;font-size:16.1px;line-height:16.1px;font-weight:normal;color:#1b1b1b;white-space:pre;text-align:right;">-<span style="visibility:hidden">)</span></div>
<div style="position:absolute;left:121.70px;top:1160.40px;width:2738.30px;height:20.70px;background:#4ab2e8;"></div>
<div style="position:absolute;left:135.00px;top:1163.71px;font-family:'Liberation Sans', sans-serif;font-size:17.0px;line-height:17.0px;font-weight:bold;color:#ffffff;white-space:pre;">Total Cash From (For) Investing Activities</div>
<div style="position:absolute;right:1983.60px;top:1161.68px;font-family:'Liberation Serif', serif;font-size:19.4px;line-height:19.4px;font-weight:bold;color:#ffffff;white-space:pre;text-align:right;transform:scaleY(0.93);transform-origin:0 16.25px;-webkit-text-stroke:0.25px #ffffff">(6,250)</div>
<div style="position:absolute;right:1864.60px;top:1161.68px;font-family:'Liberation Serif', serif;font-size:19.4px;line-height:19.4px;font-weight:bold;color:#ffffff;white-space:pre;text-align:right;transform:scaleY(0.93);transform-origin:0 16.25px;-webkit-text-stroke:0.25px #ffffff">(8,917)</div>
<div style="position:absolute;right:1745.60px;top:1161.68px;font-family:'Liberation Serif', serif;font-size:19.4px;line-height:19.4px;font-weight:bold;color:#ffffff;white-space:pre;text-align:right;transform:scaleY(0.93);transform-origin:0 16.25px;-webkit-text-stroke:0.25px #ffffff">(10,917)</div>
<div style="position:absolute;right:1626.60px;top:1161.68px;font-family:'Liberation Serif', serif;font-size:19.4px;line-height:19.4px;font-weight:bold;color:#ffffff;white-space:pre;text-align:right;transform:scaleY(0.93);transform-origin:0 16.25px;-webkit-text-stroke:0.25px #ffffff">(6,542)</div>
<div style="position:absolute;right:1507.60px;top:1161.68px;font-family:'Liberation Serif', serif;font-size:19.4px;line-height:19.4px;font-weight:bold;color:#ffffff;white-space:pre;text-align:right;transform:scaleY(0.93);transform-origin:0 16.25px;-webkit-text-stroke:0.25px #ffffff">(4,625)</div>
<div style="position:absolute;right:1388.60px;top:1161.68px;font-family:'Liberation Serif', serif;font-size:19.4px;line-height:19.4px;font-weight:bold;color:#ffffff;white-space:pre;text-align:right;transform:scaleY(0.93);transform-origin:0 16.25px;-webkit-text-stroke:0.25px #ffffff">(2,625)</div>
<div style="position:absolute;right:1269.60px;top:1161.68px;font-family:'Liberation Serif', serif;font-size:19.4px;line-height:19.4px;font-weight:bold;color:#ffffff;white-space:pre;text-align:right;transform:scaleY(0.93);transform-origin:0 16.25px;-webkit-text-stroke:0.25px #ffffff">(1,375)</div>
<div style="position:absolute;right:1150.60px;top:1161.68px;font-family:'Liberation Serif', serif;font-size:19.4px;line-height:19.4px;font-weight:bold;color:#ffffff;white-space:pre;text-align:right;transform:scaleY(0.93);transform-origin:0 16.25px;-webkit-text-stroke:0.25px #ffffff">(750)</div>
<div style="position:absolute;right:1031.60px;top:1163.20px;font-family:'Liberation Sans', sans-serif;font-size:17.6px;line-height:17.6px;font-weight:normal;color:#ffffff;white-space:pre;text-align:right;">-<span style="visibility:hidden">)</span></div>
<div style="position:absolute;right:912.60px;top:1163.20px;font-family:'Liberation Sans', sans-serif;font-size:17.6px;line-height:17.6px;font-weight:normal;color:#ffffff;white-space:pre;text-align:right;">-<span style="visibility:hidden">)</span></div>
<div style="position:absolute;right:793.60px;top:1163.20px;font-family:'Liberation Sans', sans-serif;font-size:17.6px;line-height:17.6px;font-weight:normal;color:#ffffff;white-space:pre;text-align:right;">-<span style="visibility:hidden">)</span></div>
<div style="position:absolute;right:674.60px;top:1163.20px;font-family:'Liberation Sans', sans-serif;font-size:17.6px;line-height:17.6px;font-weight:normal;color:#ffffff;white-space:pre;text-align:right;">-<span style="visibility:hidden">)</span></div>
<div style="position:absolute;right:555.60px;top:1163.20px;font-family:'Liberation Sans', sans-serif;font-size:17.6px;line-height:17.6px;font-weight:normal;color:#ffffff;white-space:pre;text-align:right;">-<span style="visibility:hidden">)</span></div>
<div style="position:absolute;right:436.60px;top:1163.20px;font-family:'Liberation Sans', sans-serif;font-size:17.6px;line-height:17.6px;font-weight:normal;color:#ffffff;white-space:pre;text-align:right;">-<span style="visibility:hidden">)</span></div>
<div style="position:absolute;right:317.60px;top:1163.20px;font-family:'Liberation Sans', sans-serif;font-size:17.6px;line-height:17.6px;font-weight:normal;color:#ffffff;white-space:pre;text-align:right;">-<span style="visibility:hidden">)</span></div>
<div style="position:absolute;right:198.60px;top:1163.20px;font-family:'Liberation Sans', sans-serif;font-size:17.6px;line-height:17.6px;font-weight:normal;color:#ffffff;white-space:pre;text-align:right;">-<span style="visibility:hidden">)</span></div>
<div style="position:absolute;right:79.60px;top:1163.20px;font-family:'Liberation Sans', sans-serif;font-size:17.6px;line-height:17.6px;font-weight:normal;color:#ffffff;white-space:pre;text-align:right;">-<span style="visibility:hidden">)</span></div>
<div style="position:absolute;left:126.60px;top:1206.56px;font-family:'Liberation Sans', sans-serif;font-size:18.6px;line-height:18.6px;font-weight:bold;color:#1b1b1b;white-space:pre;">Financing Activities</div>
<div style="position:absolute;left:139.00px;top:1230.06px;font-family:'Liberation Sans', sans-serif;font-size:15.4px;line-height:15.4px;font-weight:normal;color:#1b1b1b;white-space:pre;">Equity Investment</div>
<div style="position:absolute;right:1983.60px;top:1229.07px;font-family:'Liberation Sans', sans-serif;font-size:16.1px;line-height:16.1px;font-weight:normal;color:#1b1b1b;white-space:pre;text-align:right;">700,000<span style="visibility:hidden">)</span></div>
<div style="position:absolute;right:1864.60px;top:1229.07px;font-family:'Liberation Sans', sans-serif;font-size:16.1px;line-height:16.1px;font-weight:normal;color:#1b1b1b;white-space:pre;text-align:right;">-<span style="visibility:hidden">)</span></div>
<div style="position:absolute;right:1745.60px;top:1229.07px;font-family:'Liberation Sans', sans-serif;font-size:16.1px;line-height:16.1px;font-weight:normal;color:#1b1b1b;white-space:pre;text-align:right;">-<span style="visibility:hidden">)</span></div>
<div style="position:absolute;right:1626.60px;top:1229.07px;font-family:'Liberation Sans', sans-serif;font-size:16.1px;line-height:16.1px;font-weight:normal;color:#1b1b1b;white-space:pre;text-align:right;">-<span style="visibility:hidden">)</span></div>
<div style="position:absolute;right:1507.60px;top:1229.07px;font-family:'Liberation Sans', sans-serif;font-size:16.1px;line-height:16.1px;font-weight:normal;color:#1b1b1b;white-space:pre;text-align:right;">-<span style="visibility:hidden">)</span></div>
<div style="position:absolute;right:1388.60px;top:1229.07px;font-family:'Liberation Sans', sans-serif;font-size:16.1px;line-height:16.1px;font-weight:normal;color:#1b1b1b;white-space:pre;text-align:right;">-<span style="visibility:hidden">)</span></div>
<div style="position:absolute;right:1269.60px;top:1229.07px;font-family:'Liberation Sans', sans-serif;font-size:16.1px;line-height:16.1px;font-weight:normal;color:#1b1b1b;white-space:pre;text-align:right;">-<span style="visibility:hidden">)</span></div>
<div style="position:absolute;right:1150.60px;top:1229.07px;font-family:'Liberation Sans', sans-serif;font-size:16.1px;line-height:16.1px;font-weight:normal;color:#1b1b1b;white-space:pre;text-align:right;">-<span style="visibility:hidden">)</span></div>
<div style="position:absolute;right:1031.60px;top:1229.07px;font-family:'Liberation Sans', sans-serif;font-size:16.1px;line-height:16.1px;font-weight:normal;color:#1b1b1b;white-space:pre;text-align:right;">-<span style="visibility:hidden">)</span></div>
<div style="position:absolute;right:912.60px;top:1229.07px;font-family:'Liberation Sans', sans-serif;font-size:16.1px;line-height:16.1px;font-weight:normal;color:#1b1b1b;white-space:pre;text-align:right;">-<span style="visibility:hidden">)</span></div>
<div style="position:absolute;right:793.60px;top:1229.07px;font-family:'Liberation Sans', sans-serif;font-size:16.1px;line-height:16.1px;font-weight:normal;color:#1b1b1b;white-space:pre;text-align:right;">-<span style="visibility:hidden">)</span></div>
<div style="position:absolute;right:674.60px;top:1229.07px;font-family:'Liberation Sans', sans-serif;font-size:16.1px;line-height:16.1px;font-weight:normal;color:#1b1b1b;white-space:pre;text-align:right;">-<span style="visibility:hidden">)</span></div>
<div style="position:absolute;right:555.60px;top:1229.07px;font-family:'Liberation Sans', sans-serif;font-size:16.1px;line-height:16.1px;font-weight:normal;color:#1b1b1b;white-space:pre;text-align:right;">-<span style="visibility:hidden">)</span></div>
<div style="position:absolute;right:436.60px;top:1229.07px;font-family:'Liberation Sans', sans-serif;font-size:16.1px;line-height:16.1px;font-weight:normal;color:#1b1b1b;white-space:pre;text-align:right;">-<span style="visibility:hidden">)</span></div>
<div style="position:absolute;right:317.60px;top:1229.07px;font-family:'Liberation Sans', sans-serif;font-size:16.1px;line-height:16.1px;font-weight:normal;color:#1b1b1b;white-space:pre;text-align:right;">-<span style="visibility:hidden">)</span></div>
<div style="position:absolute;right:198.60px;top:1229.07px;font-family:'Liberation Sans', sans-serif;font-size:16.1px;line-height:16.1px;font-weight:normal;color:#1b1b1b;white-space:pre;text-align:right;">-<span style="visibility:hidden">)</span></div>
<div style="position:absolute;right:79.60px;top:1229.07px;font-family:'Liberation Sans', sans-serif;font-size:16.1px;line-height:16.1px;font-weight:normal;color:#1b1b1b;white-space:pre;text-align:right;">-<span style="visibility:hidden">)</span></div>
<div style="position:absolute;left:139.00px;top:1251.16px;font-family:'Liberation Sans', sans-serif;font-size:15.4px;line-height:15.4px;font-weight:normal;color:#1b1b1b;white-space:pre;">Loans</div>
<div style="position:absolute;right:1983.60px;top:1250.17px;font-family:'Liberation Sans', sans-serif;font-size:16.1px;line-height:16.1px;font-weight:normal;color:#1b1b1b;white-space:pre;text-align:right;">200,000<span style="visibility:hidden">)</span></div>
<div style="position:absolute;right:1864.60px;top:1250.17px;font-family:'Liberation Sans', sans-serif;font-size:16.1px;line-height:16.1px;font-weight:normal;color:#1b1b1b;white-space:pre;text-align:right;">-<span style="visibility:hidden">)</span></div>
<div style="position:absolute;right:1745.60px;top:1250.17px;font-family:'Liberation Sans', sans-serif;font-size:16.1px;line-height:16.1px;font-weight:normal;color:#1b1b1b;white-space:pre;text-align:right;">98,333<span style="visibility:hidden">)</span></div>
<div style="position:absolute;right:1626.60px;top:1250.17px;font-family:'Liberation Sans', sans-serif;font-size:16.1px;line-height:16.1px;font-weight:normal;color:#1b1b1b;white-space:pre;text-align:right;">(1,667)</div>
<div style="position:absolute;right:1507.60px;top:1250.17px;font-family:'Liberation Sans', sans-serif;font-size:16.1px;line-height:16.1px;font-weight:normal;color:#1b1b1b;white-space:pre;text-align:right;">(1,667)</div>
<div style="position:absolute;right:1388.60px;top:1250.17px;font-family:'Liberation Sans', sans-serif;font-size:16.1px;line-height:16.1px;font-weight:normal;color:#1b1b1b;white-space:pre;text-align:right;">(1,667)</div>
<div style="position:absolute;right:1269.60px;top:1250.17px;font-family:'Liberation Sans', sans-serif;font-size:16.1px;line-height:16.1px;font-weight:normal;color:#1b1b1b;white-space:pre;text-align:right;">(1,667)</div>
<div style="position:absolute;right:1150.60px;top:1250.17px;font-family:'Liberation Sans', sans-serif;font-size:16.1px;line-height:16.1px;font-weight:normal;color:#1b1b1b;white-space:pre;text-align:right;">(1,667)</div>
<div style="position:absolute;right:1031.60px;top:1250.17px;font-family:'Liberation Sans', sans-serif;font-size:16.1px;line-height:16.1px;font-weight:normal;color:#1b1b1b;white-space:pre;text-align:right;">(1,667)</div>
<div style="position:absolute;right:912.60px;top:1250.17px;font-family:'Liberation Sans', sans-serif;font-size:16.1px;line-height:16.1px;font-weight:normal;color:#1b1b1b;white-space:pre;text-align:right;">(1,667)</div>
<div style="position:absolute;right:793.60px;top:1250.17px;font-family:'Liberation Sans', sans-serif;font-size:16.1px;line-height:16.1px;font-weight:normal;color:#1b1b1b;white-space:pre;text-align:right;">(1,667)</div>
<div style="position:absolute;right:674.60px;top:1250.17px;font-family:'Liberation Sans', sans-serif;font-size:16.1px;line-height:16.1px;font-weight:normal;color:#1b1b1b;white-space:pre;text-align:right;">(1,667)</div>
<div style="position:absolute;right:555.60px;top:1250.17px;font-family:'Liberation Sans', sans-serif;font-size:16.1px;line-height:16.1px;font-weight:normal;color:#1b1b1b;white-space:pre;text-align:right;">(3,770)</div>
<div style="position:absolute;right:436.60px;top:1250.17px;font-family:'Liberation Sans', sans-serif;font-size:16.1px;line-height:16.1px;font-weight:normal;color:#1b1b1b;white-space:pre;text-align:right;">(3,780)</div>
<div style="position:absolute;right:317.60px;top:1250.17px;font-family:'Liberation Sans', sans-serif;font-size:16.1px;line-height:16.1px;font-weight:normal;color:#1b1b1b;white-space:pre;text-align:right;">(3,791)</div>
<div style="position:absolute;right:198.60px;top:1250.17px;font-family:'Liberation Sans', sans-serif;font-size:16.1px;line-height:16.1px;font-weight:normal;color:#1b1b1b;white-space:pre;text-align:right;">(3,801)</div>
<div style="position:absolute;right:79.60px;top:1250.17px;font-family:'Liberation Sans', sans-serif;font-size:16.1px;line-height:16.1px;font-weight:normal;color:#1b1b1b;white-space:pre;text-align:right;">(3,812)</div>
<div style="position:absolute;left:139.00px;top:1271.96px;font-family:'Liberation Sans', sans-serif;font-size:15.4px;line-height:15.4px;font-weight:normal;color:#1b1b1b;white-space:pre;">Dividends Paid</div>
<div style="position:absolute;right:1983.60px;top:1270.97px;font-family:'Liberation Sans', sans-serif;font-size:16.1px;line-height:16.1px;font-weight:normal;color:#1b1b1b;white-space:pre;text-align:right;">-<span style="visibility:hidden">)</span></div>
<div style="position:absolute;right:1864.60px;top:1270.97px;font-family:'Liberation Sans', sans-serif;font-size:16.1px;line-height:16.1px;font-weight:normal;color:#1b1b1b;white-space:pre;text-align:right;">-<span style="visibility:hidden">)</span></div>
<div style="position:absolute;right:1745.60px;top:1270.97px;font-family:'Liberation Sans', sans-serif;font-size:16.1px;line-height:16.1px;font-weight:normal;color:#1b1b1b;white-space:pre;text-align:right;">-<span style="visibility:hidden">)</span></div>
<div style="position:absolute;right:1626.60px;top:1270.97px;font-family:'Liberation Sans', sans-serif;font-size:16.1px;line-height:16.1px;font-weight:normal;color:#1b1b1b;white-space:pre;text-align:right;">-<span style="visibility:hidden">)</span></div>
<div style="position:absolute;right:1507.60px;top:1270.97px;font-family:'Liberation Sans', sans-serif;font-size:16.1px;line-height:16.1px;font-weight:normal;color:#1b1b1b;white-space:pre;text-align:right;">-<span style="visibility:hidden">)</span></div>
<div style="position:absolute;right:1388.60px;top:1270.97px;font-family:'Liberation Sans', sans-serif;font-size:16.1px;line-height:16.1px;font-weight:normal;color:#1b1b1b;white-space:pre;text-align:right;">-<span style="visibility:hidden">)</span></div>
<div style="position:absolute;right:1269.60px;top:1270.97px;font-family:'Liberation Sans', sans-serif;font-size:16.1px;line-height:16.1px;font-weight:normal;color:#1b1b1b;white-space:pre;text-align:right;">-<span style="visibility:hidden">)</span></div>
<div style="position:absolute;right:1150.60px;top:1270.97px;font-family:'Liberation Sans', sans-serif;font-size:16.1px;line-height:16.1px;font-weight:normal;color:#1b1b1b;white-space:pre;text-align:right;">-<span style="visibility:hidden">)</span></div>
<div style="position:absolute;right:1031.60px;top:1270.97px;font-family:'Liberation Sans', sans-serif;font-size:16.1px;line-height:16.1px;font-weight:normal;color:#1b1b1b;white-space:pre;text-align:right;">-<span style="visibility:hidden">)</span></div>
<div style="position:absolute;right:912.60px;top:1270.97px;font-family:'Liberation Sans', sans-serif;font-size:16.1px;line-height:16.1px;font-weight:normal;color:#1b1b1b;white-space:pre;text-align:right;">-<span style="visibility:hidden">)</span></div>
<div style="position:absolute;right:793.60px;top:1270.97px;font-family:'Liberation Sans', sans-serif;font-size:16.1px;line-height:16.1px;font-weight:normal;color:#1b1b1b;white-space:pre;text-align:right;">-<span style="visibility:hidden">)</span></div>
<div style="position:absolute;right:674.60px;top:1270.97px;font-family:'Liberation Sans', sans-serif;font-size:16.1px;line-height:16.1px;font-weight:normal;color:#1b1b1b;white-space:pre;text-align:right;">-<span style="visibility:hidden">)</span></div>
<div style="position:absolute;right:555.60px;top:1270.97px;font-family:'Liberation Sans', sans-serif;font-size:16.1px;line-height:16.1px;font-weight:normal;color:#1b1b1b;white-space:pre;text-align:right;">-<span style="visibility:hidden">)</span></div>
<div style="position:absolute;right:436.60px;top:1270.97px;font-family:'Liberation Sans', sans-serif;font-size:16.1px;line-height:16.1px;font-weight:normal;color:#1b1b1b;white-space:pre;text-align:right;">-<span style="visibility:hidden">)</span></div>
<div style="position:absolute;right:317.60px;top:1270.97px;font-family:'Liberation Sans', sans-serif;font-size:16.1px;line-height:16.1px;font-weight:normal;color:#1b1b1b;white-space:pre;text-align:right;">-<span style="visibility:hidden">)</span></div>
<div style="position:absolute;right:198.60px;top:1270.97px;font-family:'Liberation Sans', sans-serif;font-size:16.1px;line-height:16.1px;font-weight:normal;color:#1b1b1b;white-space:pre;text-align:right;">-<span style="visibility:hidden">)</span></div>
<div style="position:absolute;right:79.60px;top:1270.97px;font-family:'Liberation Sans', sans-serif;font-size:16.1px;line-height:16.1px;font-weight:normal;color:#1b1b1b;white-space:pre;text-align:right;">-<span style="visibility:hidden">)</span></div>
<div style="position:absolute;left:121.70px;top:1288.90px;width:2738.30px;height:20.40px;background:#4ab2e8;"></div>
<div style="position:absolute;left:135.00px;top:1291.91px;font-family:'Liberation Sans', sans-serif;font-size:17.0px;line-height:17.0px;font-weight:bold;color:#ffffff;white-space:pre;">Total Cash From (For) Financing Activities</div>
<div style="position:absolute;right:1983.60px;top:1289.88px;font-family:'Liberation Serif', serif;font-size:19.4px;line-height:19.4px;font-weight:bold;color:#ffffff;white-space:pre;text-align:right;transform:scaleY(0.93);transform-origin:0 16.25px;-webkit-text-stroke:0.25px #ffffff">900,000<span style="visibility:hidden">)</span></div>
<div style="position:absolute;right:1864.60px;top:1291.40px;font-family:'Liberation Sans', sans-serif;font-size:17.6px;line-height:17.6px;font-weight:normal;color:#ffffff;white-space:pre;text-align:right;">-<span style="visibility:hidden">)</span></div>
<div style="position:absolute;right:1745.60px;top:1289.88px;font-family:'Liberation Serif', serif;font-size:19.4px;line-height:19.4px;font-weight:bold;color:#ffffff;white-space:pre;text-align:right;transform:scaleY(0.93);transform-origin:0 16.25px;-webkit-text-stroke:0.25px #ffffff">98,333<span style="visibility:hidden">)</span></div>
<div style="position:absolute;right:1626.60px;top:1289.88px;font-family:'Liberation Serif', serif;font-size:19.4px;line-height:19.4px;font-weight:bold;color:#ffffff;white-space:pre;text-align:right;transform:scaleY(0.93);transform-origin:0 16.25px;-webkit-text-stroke:0.25px #ffffff">(1,667)</div>
<div style="position:absolute;right:1507.60px;top:1289.88px;font-family:'Liberation Serif', serif;font-size:19.4px;line-height:19.4px;font-weight:bold;color:#ffffff;white-space:pre;text-align:right;transform:scaleY(0.93);transform-origin:0 16.25px;-webkit-text-stroke:0.25px #ffffff">(1,667)</div>
<div style="position:absolute;right:1388.60px;top:1289.88px;font-family:'Liberation Serif', serif;font-size:19.4px;line-height:19.4px;font-weight:bold;color:#ffffff;white-space:pre;text-align:right;transform:scaleY(0.93);transform-origin:0 16.25px;-webkit-text-stroke:0.25px #ffffff">(1,667)</div>
<div style="position:absolute;right:1269.60px;top:1289.88px;font-family:'Liberation Serif', serif;font-size:19.4px;line-height:19.4px;font-weight:bold;color:#ffffff;white-space:pre;text-align:right;transform:scaleY(0.93);transform-origin:0 16.25px;-webkit-text-stroke:0.25px #ffffff">(1,667)</div>
<div style="position:absolute;right:1150.60px;top:1289.88px;font-family:'Liberation Serif', serif;font-size:19.4px;line-height:19.4px;font-weight:bold;color:#ffffff;white-space:pre;text-align:right;transform:scaleY(0.93);transform-origin:0 16.25px;-webkit-text-stroke:0.25px #ffffff">(1,667)</div>
<div style="position:absolute;right:1031.60px;top:1289.88px;font-family:'Liberation Serif', serif;font-size:19.4px;line-height:19.4px;font-weight:bold;color:#ffffff;white-space:pre;text-align:right;transform:scaleY(0.93);transform-origin:0 16.25px;-webkit-text-stroke:0.25px #ffffff">(1,667)</div>
<div style="position:absolute;right:912.60px;top:1289.88px;font-family:'Liberation Serif', serif;font-size:19.4px;line-height:19.4px;font-weight:bold;color:#ffffff;white-space:pre;text-align:right;transform:scaleY(0.93);transform-origin:0 16.25px;-webkit-text-stroke:0.25px #ffffff">(1,667)</div>
<div style="position:absolute;right:793.60px;top:1289.88px;font-family:'Liberation Serif', serif;font-size:19.4px;line-height:19.4px;font-weight:bold;color:#ffffff;white-space:pre;text-align:right;transform:scaleY(0.93);transform-origin:0 16.25px;-webkit-text-stroke:0.25px #ffffff">(1,667)</div>
<div style="position:absolute;right:674.60px;top:1289.88px;font-family:'Liberation Serif', serif;font-size:19.4px;line-height:19.4px;font-weight:bold;color:#ffffff;white-space:pre;text-align:right;transform:scaleY(0.93);transform-origin:0 16.25px;-webkit-text-stroke:0.25px #ffffff">(1,667)</div>
<div style="position:absolute;right:555.60px;top:1289.88px;font-family:'Liberation Serif', serif;font-size:19.4px;line-height:19.4px;font-weight:bold;color:#ffffff;white-space:pre;text-align:right;transform:scaleY(0.93);transform-origin:0 16.25px;-webkit-text-stroke:0.25px #ffffff">(3,770)</div>
<div style="position:absolute;right:436.60px;top:1289.88px;font-family:'Liberation Serif', serif;font-size:19.4px;line-height:19.4px;font-weight:bold;color:#ffffff;white-space:pre;text-align:right;transform:scaleY(0.93);transform-origin:0 16.25px;-webkit-text-stroke:0.25px #ffffff">(3,780)</div>
<div style="position:absolute;right:317.60px;top:1289.88px;font-family:'Liberation Serif', serif;font-size:19.4px;line-height:19.4px;font-weight:bold;color:#ffffff;white-space:pre;text-align:right;transform:scaleY(0.93);transform-origin:0 16.25px;-webkit-text-stroke:0.25px #ffffff">(3,791)</div>
<div style="position:absolute;right:198.60px;top:1289.88px;font-family:'Liberation Serif', serif;font-size:19.4px;line-height:19.4px;font-weight:bold;color:#ffffff;white-space:pre;text-align:right;transform:scaleY(0.93);transform-origin:0 16.25px;-webkit-text-stroke:0.25px #ffffff">(3,801)</div>
<div style="position:absolute;right:79.60px;top:1289.88px;font-family:'Liberation Serif', serif;font-size:19.4px;line-height:19.4px;font-weight:bold;color:#ffffff;white-space:pre;text-align:right;transform:scaleY(0.93);transform-origin:0 16.25px;-webkit-text-stroke:0.25px #ffffff">(3,812)</div>
<div style="position:absolute;left:126.60px;top:1335.46px;font-family:'Liberation Sans', sans-serif;font-size:18.6px;line-height:18.6px;font-weight:bold;color:#1b1b1b;white-space:pre;">Cash Movement</div>
<div style="position:absolute;left:139.00px;top:1359.76px;font-family:'Liberation Sans', sans-serif;font-size:15.4px;line-height:15.4px;font-weight:normal;color:#1b1b1b;white-space:pre;">Cash and Cash Equivalents Beginning</div>
<div style="position:absolute;right:1983.60px;top:1358.57px;font-family:'Liberation Sans', sans-serif;font-size:16.1px;line-height:16.1px;font-weight:normal;color:#1b1b1b;white-space:pre;text-align:right;">-<span style="visibility:hidden">)</span></div>
<div style="position:absolute;right:1864.60px;top:1358.57px;font-family:'Liberation Sans', sans-serif;font-size:16.1px;line-height:16.1px;font-weight:normal;color:#1b1b1b;white-space:pre;text-align:right;">894,153<span style="visibility:hidden">)</span></div>
<div style="position:absolute;right:1745.60px;top:1358.57px;font-family:'Liberation Sans', sans-serif;font-size:16.1px;line-height:16.1px;font-weight:normal;color:#1b1b1b;white-space:pre;text-align:right;">897,656<span style="visibility:hidden">)</span></div>
<div style="position:absolute;right:1626.60px;top:1358.57px;font-family:'Liberation Sans', sans-serif;font-size:16.1px;line-height:16.1px;font-weight:normal;color:#1b1b1b;white-space:pre;text-align:right;">999,894<span style="visibility:hidden">)</span></div>
<div style="position:absolute;right:1507.60px;top:1358.57px;font-family:'Liberation Sans', sans-serif;font-size:16.1px;line-height:16.1px;font-weight:normal;color:#1b1b1b;white-space:pre;text-align:right;">1,004,641<span style="visibility:hidden">)</span></div>
<div style="position:absolute;right:1388.60px;top:1358.57px;font-family:'Liberation Sans', sans-serif;font-size:16.1px;line-height:16.1px;font-weight:normal;color:#1b1b1b;white-space:pre;text-align:right;">1,012,219<span style="visibility:hidden">)</span></div>
<div style="position:absolute;right:1269.60px;top:1358.57px;font-family:'Liberation Sans', sans-serif;font-size:16.1px;line-height:16.1px;font-weight:normal;color:#1b1b1b;white-space:pre;text-align:right;">1,020,914<span style="visibility:hidden">)</span></div>
<div style="position:absolute;right:1150.60px;top:1358.57px;font-family:'Liberation Sans', sans-serif;font-size:16.1px;line-height:16.1px;font-weight:normal;color:#1b1b1b;white-space:pre;text-align:right;">1,031,767<span style="visibility:hidden">)</span></div>
<div style="position:absolute;right:1031.60px;top:1358.57px;font-family:'Liberation Sans', sans-serif;font-size:16.1px;line-height:16.1px;font-weight:normal;color:#1b1b1b;white-space:pre;text-align:right;">1,042,807<span style="visibility:hidden">)</span></div>
<div style="position:absolute;right:912.60px;top:1358.57px;font-family:'Liberation Sans', sans-serif;font-size:16.1px;line-height:16.1px;font-weight:normal;color:#1b1b1b;white-space:pre;text-align:right;">1,054,157<span style="visibility:hidden">)</span></div>
<div style="position:absolute;right:793.60px;top:1358.57px;font-family:'Liberation Sans', sans-serif;font-size:16.1px;line-height:16.1px;font-weight:normal;color:#1b1b1b;white-space:pre;text-align:right;">1,066,411<span style="visibility:hidden">)</span></div>
<div style="position:absolute;right:674.60px;top:1358.57px;font-family:'Liberation Sans', sans-serif;font-size:16.1px;line-height:16.1px;font-weight:normal;color:#1b1b1b;white-space:pre;text-align:right;">1,077,778<span style="visibility:hidden">)</span></div>
<div style="position:absolute;right:555.60px;top:1358.57px;font-family:'Liberation Sans', sans-serif;font-size:16.1px;line-height:16.1px;font-weight:normal;color:#1b1b1b;white-space:pre;text-align:right;">1,090,049<span style="visibility:hidden">)</span></div>
<div style="position:absolute;right:436.60px;top:1358.57px;font-family:'Liberation Sans', sans-serif;font-size:16.1px;line-height:16.1px;font-weight:normal;color:#1b1b1b;white-space:pre;text-align:right;">1,114,172<span style="visibility:hidden">)</span></div>
<div style="position:absolute;right:317.60px;top:1358.57px;font-family:'Liberation Sans', sans-serif;font-size:16.1px;line-height:16.1px;font-weight:normal;color:#1b1b1b;white-space:pre;text-align:right;">1,176,681<span style="visibility:hidden">)</span></div>
<div style="position:absolute;right:198.60px;top:1358.57px;font-family:'Liberation Sans', sans-serif;font-size:16.1px;line-height:16.1px;font-weight:normal;color:#1b1b1b;white-space:pre;text-align:right;">1,251,631<span style="visibility:hidden">)</span></div>
<div style="position:absolute;right:79.60px;top:1358.57px;font-family:'Liberation Sans', sans-serif;font-size:16.1px;line-height:16.1px;font-weight:normal;color:#1b1b1b;white-space:pre;text-align:right;">1,318,434<span style="visibility:hidden">)</span></div>
<div style="position:absolute;left:139.00px;top:1382.86px;font-family:'Liberation Sans', sans-serif;font-size:15.4px;line-height:15.4px;font-weight:normal;color:#1b1b1b;white-space:pre;">Net (Increase) Decrease In Cash</div>
<div style="position:absolute;right:1983.60px;top:1381.77px;font-family:'Liberation Sans', sans-serif;font-size:16.1px;line-height:16.1px;font-weight:normal;color:#1b1b1b;white-space:pre;text-align:right;">894,153<span style="visibility:hidden">)</span></div>
<div style="position:absolute;right:1864.60px;top:1381.77px;font-family:'Liberation Sans', sans-serif;font-size:16.1px;line-height:16.1px;font-weight:normal;color:#1b1b1b;white-space:pre;text-align:right;">3,502<span style="visibility:hidden">)</span></div>
<div style="position:absolute;right:1745.60px;top:1381.77px;font-family:'Liberation Sans', sans-serif;font-size:16.1px;line-height:16.1px;font-weight:normal;color:#1b1b1b;white-space:pre;text-align:right;">102,238<span style="visibility:hidden">)</span></div>
<div style="position:absolute;right:1626.60px;top:1381.77px;font-family:'Liberation Sans', sans-serif;font-size:16.1px;line-height:16.1px;font-weight:normal;color:#1b1b1b;white-space:pre;text-align:right;">4,747<span style="visibility:hidden">)</span></div>
<div style="position:absolute;right:1507.60px;top:1381.77px;font-family:'Liberation Sans', sans-serif;font-size:16.1px;line-height:16.1px;font-weight:normal;color:#1b1b1b;white-space:pre;text-align:right;">7,578<span style="visibility:hidden">)</span></div>
<div style="position:absolute;right:1388.60px;top:1381.77px;font-family:'Liberation Sans', sans-serif;font-size:16.1px;line-height:16.1px;font-weight:normal;color:#1b1b1b;white-space:pre;text-align:right;">8,696<span style="visibility:hidden">)</span></div>
<div style="position:absolute;right:1269.60px;top:1381.77px;font-family:'Liberation Sans', sans-serif;font-size:16.1px;line-height:16.1px;font-weight:normal;color:#1b1b1b;white-space:pre;text-align:right;">10,853<span style="visibility:hidden">)</span></div>
<div style="position:absolute;right:1150.60px;top:1381.77px;font-family:'Liberation Sans', sans-serif;font-size:16.1px;line-height:16.1px;font-weight:normal;color:#1b1b1b;white-space:pre;text-align:right;">11,040<span style="visibility:hidden">)</span></div>
<div style="position:absolute;right:1031.60px;top:1381.77px;font-family:'Liberation Sans', sans-serif;font-size:16.1px;line-height:16.1px;font-weight:normal;color:#1b1b1b;white-space:pre;text-align:right;">11,350<span style="visibility:hidden">)</span></div>
<div style="position:absolute;right:912.60px;top:1381.77px;font-family:'Liberation Sans', sans-serif;font-size:16.1px;line-height:16.1px;font-weight:normal;color:#1b1b1b;white-space:pre;text-align:right;">12,254<span style="visibility:hidden">)</span></div>
<div style="position:absolute;right:793.60px;top:1381.77px;font-family:'Liberation Sans', sans-serif;font-size:16.1px;line-height:16.1px;font-weight:normal;color:#1b1b1b;white-space:pre;text-align:right;">11,367<span style="visibility:hidden">)</span></div>
<div style="position:absolute;right:674.60px;top:1381.77px;font-family:'Liberation Sans', sans-serif;font-size:16.1px;line-height:16.1px;font-weight:normal;color:#1b1b1b;white-space:pre;text-align:right;">12,271<span style="visibility:hidden">)</span></div>
<div style="position:absolute;right:555.60px;top:1381.77px;font-family:'Liberation Sans', sans-serif;font-size:16.1px;line-height:16.1px;font-weight:normal;color:#1b1b1b;white-space:pre;text-align:right;">24,124<span style="visibility:hidden">)</span></div>
<div style="position:absolute;right:436.60px;top:1381.77px;font-family:'Liberation Sans', sans-serif;font-size:16.1px;line-height:16.1px;font-weight:normal;color:#1b1b1b;white-space:pre;text-align:right;">62,508<span style="visibility:hidden">)</span></div>
<div style="position:absolute;right:317.60px;top:1381.77px;font-family:'Liberation Sans', sans-serif;font-size:16.1px;line-height:16.1px;font-weight:normal;color:#1b1b1b;white-space:pre;text-align:right;">74,950<span style="visibility:hidden">)</span></div>
<div style="position:absolute;right:198.60px;top:1381.77px;font-family:'Liberation Sans', sans-serif;font-size:16.1px;line-height:16.1px;font-weight:normal;color:#1b1b1b;white-space:pre;text-align:right;">66,803<span style="visibility:hidden">)</span></div>
<div style="position:absolute;right:79.60px;top:1381.77px;font-family:'Liberation Sans', sans-serif;font-size:16.1px;line-height:16.1px;font-weight:normal;color:#1b1b1b;white-space:pre;text-align:right;">70,678<span style="visibility:hidden">)</span></div>
<div style="position:absolute;left:121.70px;top:1401.30px;width:2738.30px;height:20.80px;background:#4ab2e8;"></div>
<div style="position:absolute;left:133.60px;top:1404.71px;font-family:'Liberation Sans', sans-serif;font-size:17.0px;line-height:17.0px;font-weight:bold;color:#ffffff;white-space:pre;">Total Cash and Cash Equivalents End</div>
<div style="position:absolute;right:1983.60px;top:1402.68px;font-family:'Liberation Serif', serif;font-size:19.4px;line-height:19.4px;font-weight:bold;color:#ffffff;white-space:pre;text-align:right;transform:scaleY(0.93);transform-origin:0 16.25px;-webkit-text-stroke:0.25px #ffffff">894,153<span style="visibility:hidden">)</span></div>
<div style="position:absolute;right:1864.60px;top:1402.68px;font-family:'Liberation Serif', serif;font-size:19.4px;line-height:19.4px;font-weight:bold;color:#ffffff;white-space:pre;text-align:right;transform:scaleY(0.93);transform-origin:0 16.25px;-webkit-text-stroke:0.25px #ffffff">897,656<span style="visibility:hidden">)</span></div>
<div style="position:absolute;right:1745.60px;top:1402.68px;font-family:'Liberation Serif', serif;font-size:19.4px;line-height:19.4px;font-weight:bold;color:#ffffff;white-space:pre;text-align:right;transform:scaleY(0.93);transform-origin:0 16.25px;-webkit-text-stroke:0.25px #ffffff">999,894<span style="visibility:hidden">)</span></div>
<div style="position:absolute;right:1626.60px;top:1402.68px;font-family:'Liberation Serif', serif;font-size:19.4px;line-height:19.4px;font-weight:bold;color:#ffffff;white-space:pre;text-align:right;transform:scaleY(0.93);transform-origin:0 16.25px;-webkit-text-stroke:0.25px #ffffff">1,004,641<span style="visibility:hidden">)</span></div>
<div style="position:absolute;right:1507.60px;top:1402.68px;font-family:'Liberation Serif', serif;font-size:19.4px;line-height:19.4px;font-weight:bold;color:#ffffff;white-space:pre;text-align:right;transform:scaleY(0.93);transform-origin:0 16.25px;-webkit-text-stroke:0.25px #ffffff">1,012,219<span style="visibility:hidden">)</span></div>
<div style="position:absolute;right:1388.60px;top:1402.68px;font-family:'Liberation Serif', serif;font-size:19.4px;line-height:19.4px;font-weight:bold;color:#ffffff;white-space:pre;text-align:right;transform:scaleY(0.93);transform-origin:0 16.25px;-webkit-text-stroke:0.25px #ffffff">1,020,914<span style="visibility:hidden">)</span></div>
<div style="position:absolute;right:1269.60px;top:1402.68px;font-family:'Liberation Serif', serif;font-size:19.4px;line-height:19.4px;font-weight:bold;color:#ffffff;white-space:pre;text-align:right;transform:scaleY(0.93);transform-origin:0 16.25px;-webkit-text-stroke:0.25px #ffffff">1,031,767<span style="visibility:hidden">)</span></div>
<div style="position:absolute;right:1150.60px;top:1402.68px;font-family:'Liberation Serif', serif;font-size:19.4px;line-height:19.4px;font-weight:bold;color:#ffffff;white-space:pre;text-align:right;transform:scaleY(0.93);transform-origin:0 16.25px;-webkit-text-stroke:0.25px #ffffff">1,042,807<span style="visibility:hidden">)</span></div>
<div style="position:absolute;right:1031.60px;top:1402.68px;font-family:'Liberation Serif', serif;font-size:19.4px;line-height:19.4px;font-weight:bold;color:#ffffff;white-space:pre;text-align:right;transform:scaleY(0.93);transform-origin:0 16.25px;-webkit-text-stroke:0.25px #ffffff">1,054,157<span style="visibility:hidden">)</span></div>
<div style="position:absolute;right:912.60px;top:1402.68px;font-family:'Liberation Serif', serif;font-size:19.4px;line-height:19.4px;font-weight:bold;color:#ffffff;white-space:pre;text-align:right;transform:scaleY(0.93);transform-origin:0 16.25px;-webkit-text-stroke:0.25px #ffffff">1,066,411<span style="visibility:hidden">)</span></div>
<div style="position:absolute;right:793.60px;top:1402.68px;font-family:'Liberation Serif', serif;font-size:19.4px;line-height:19.4px;font-weight:bold;color:#ffffff;white-space:pre;text-align:right;transform:scaleY(0.93);transform-origin:0 16.25px;-webkit-text-stroke:0.25px #ffffff">1,077,778<span style="visibility:hidden">)</span></div>
<div style="position:absolute;right:674.60px;top:1402.68px;font-family:'Liberation Serif', serif;font-size:19.4px;line-height:19.4px;font-weight:bold;color:#ffffff;white-space:pre;text-align:right;transform:scaleY(0.93);transform-origin:0 16.25px;-webkit-text-stroke:0.25px #ffffff">1,090,049<span style="visibility:hidden">)</span></div>
<div style="position:absolute;right:555.60px;top:1402.68px;font-family:'Liberation Serif', serif;font-size:19.4px;line-height:19.4px;font-weight:bold;color:#ffffff;white-space:pre;text-align:right;transform:scaleY(0.93);transform-origin:0 16.25px;-webkit-text-stroke:0.25px #ffffff">1,114,172<span style="visibility:hidden">)</span></div>
<div style="position:absolute;right:436.60px;top:1402.68px;font-family:'Liberation Serif', serif;font-size:19.4px;line-height:19.4px;font-weight:bold;color:#ffffff;white-space:pre;text-align:right;transform:scaleY(0.93);transform-origin:0 16.25px;-webkit-text-stroke:0.25px #ffffff">1,176,681<span style="visibility:hidden">)</span></div>
<div style="position:absolute;right:317.60px;top:1402.68px;font-family:'Liberation Serif', serif;font-size:19.4px;line-height:19.4px;font-weight:bold;color:#ffffff;white-space:pre;text-align:right;transform:scaleY(0.93);transform-origin:0 16.25px;-webkit-text-stroke:0.25px #ffffff">1,251,631<span style="visibility:hidden">)</span></div>
<div style="position:absolute;right:198.60px;top:1402.68px;font-family:'Liberation Serif', serif;font-size:19.4px;line-height:19.4px;font-weight:bold;color:#ffffff;white-space:pre;text-align:right;transform:scaleY(0.93);transform-origin:0 16.25px;-webkit-text-stroke:0.25px #ffffff">1,318,434<span style="visibility:hidden">)</span></div>
<div style="position:absolute;right:79.60px;top:1402.68px;font-family:'Liberation Serif', serif;font-size:19.4px;line-height:19.4px;font-weight:bold;color:#ffffff;white-space:pre;text-align:right;transform:scaleY(0.93);transform-origin:0 16.25px;-webkit-text-stroke:0.25px #ffffff">1,389,112<span style="visibility:hidden">)</span></div>
<div style="position:absolute;right:2110.00px;top:1404.20px;font-family:'Liberation Sans', sans-serif;font-size:17.6px;line-height:17.6px;font-weight:bold;color:#ffffff;white-space:pre;text-align:right;">-</div>
<div style="position:absolute;left:2857.00px;top:1402.68px;font-family:'Liberation Serif', serif;font-size:19.4px;line-height:19.4px;font-weight:bold;color:#ffffff;white-space:pre;">1</div>
<div style="position:absolute;left:127.80px;top:1461.75px;font-family:'Liberation Sans', sans-serif;font-size:21.2px;line-height:21.2px;font-weight:bold;color:#1b1b1b;white-space:pre;">Interest on Cash Breakdown</div>
<div style="position:absolute;left:139.00px;top:1500.06px;font-family:'Liberation Sans', sans-serif;font-size:15.4px;line-height:15.4px;font-weight:normal;color:#1b1b1b;white-space:pre;">Net Cash Flow from Investing Activities</div>
<div style="position:absolute;right:1982.60px;top:1500.68px;font-family:'Liberation Sans', sans-serif;font-size:14.2px;line-height:14.2px;font-weight:normal;color:#1b1b1b;white-space:pre;text-align:right;">(6,250)</div>
<div style="position:absolute;right:1863.60px;top:1500.68px;font-family:'Liberation Sans', sans-serif;font-size:14.2px;line-height:14.2px;font-weight:normal;color:#1b1b1b;white-space:pre;text-align:right;">(8,917)</div>
<div style="position:absolute;right:1744.60px;top:1500.68px;font-family:'Liberation Sans', sans-serif;font-size:14.2px;line-height:14.2px;font-weight:normal;color:#1b1b1b;white-space:pre;text-align:right;">(10,917)</div>
<div style="position:absolute;right:1625.60px;top:1500.68px;font-family:'Liberation Sans', sans-serif;font-size:14.2px;line-height:14.2px;font-weight:normal;color:#1b1b1b;white-space:pre;text-align:right;">(6,542)</div>
<div style="position:absolute;right:1506.60px;top:1500.68px;font-family:'Liberation Sans', sans-serif;font-size:14.2px;line-height:14.2px;font-weight:normal;color:#1b1b1b;white-space:pre;text-align:right;">(4,625)</div>
<div style="position:absolute;right:1387.60px;top:1500.68px;font-family:'Liberation Sans', sans-serif;font-size:14.2px;line-height:14.2px;font-weight:normal;color:#1b1b1b;white-space:pre;text-align:right;">(2,625)</div>
<div style="position:absolute;right:1268.60px;top:1500.68px;font-family:'Liberation Sans', sans-serif;font-size:14.2px;line-height:14.2px;font-weight:normal;color:#1b1b1b;white-space:pre;text-align:right;">(1,375)</div>
<div style="position:absolute;right:1149.60px;top:1500.68px;font-family:'Liberation Sans', sans-serif;font-size:14.2px;line-height:14.2px;font-weight:normal;color:#1b1b1b;white-space:pre;text-align:right;">(750)</div>
<div style="position:absolute;right:1030.60px;top:1500.68px;font-family:'Liberation Sans', sans-serif;font-size:14.2px;line-height:14.2px;font-weight:normal;color:#1b1b1b;white-space:pre;text-align:right;">-<span style="visibility:hidden">)</span></div>
<div style="position:absolute;right:911.60px;top:1500.68px;font-family:'Liberation Sans', sans-serif;font-size:14.2px;line-height:14.2px;font-weight:normal;color:#1b1b1b;white-space:pre;text-align:right;">-<span style="visibility:hidden">)</span></div>
<div style="position:absolute;right:792.60px;top:1500.68px;font-family:'Liberation Sans', sans-serif;font-size:14.2px;line-height:14.2px;font-weight:normal;color:#1b1b1b;white-space:pre;text-align:right;">-<span style="visibility:hidden">)</span></div>
<div style="position:absolute;right:673.60px;top:1500.68px;font-family:'Liberation Sans', sans-serif;font-size:14.2px;line-height:14.2px;font-weight:normal;color:#1b1b1b;white-space:pre;text-align:right;">-<span style="visibility:hidden">)</span></div>
<div style="position:absolute;right:554.60px;top:1500.68px;font-family:'Liberation Sans', sans-serif;font-size:14.2px;line-height:14.2px;font-weight:normal;color:#1b1b1b;white-space:pre;text-align:right;">-<span style="visibility:hidden">)</span></div>
<div style="position:absolute;right:435.60px;top:1500.68px;font-family:'Liberation Sans', sans-serif;font-size:14.2px;line-height:14.2px;font-weight:normal;color:#1b1b1b;white-space:pre;text-align:right;">-<span style="visibility:hidden">)</span></div>
<div style="position:absolute;right:316.60px;top:1500.68px;font-family:'Liberation Sans', sans-serif;font-size:14.2px;line-height:14.2px;font-weight:normal;color:#1b1b1b;white-space:pre;text-align:right;">-<span style="visibility:hidden">)</span></div>
<div style="position:absolute;right:197.60px;top:1500.68px;font-family:'Liberation Sans', sans-serif;font-size:14.2px;line-height:14.2px;font-weight:normal;color:#1b1b1b;white-space:pre;text-align:right;">-<span style="visibility:hidden">)</span></div>
<div style="position:absolute;right:78.60px;top:1500.68px;font-family:'Liberation Sans', sans-serif;font-size:14.2px;line-height:14.2px;font-weight:normal;color:#1b1b1b;white-space:pre;text-align:right;">-<span style="visibility:hidden">)</span></div>
<div style="position:absolute;left:139.00px;top:1519.96px;font-family:'Liberation Sans', sans-serif;font-size:15.4px;line-height:15.4px;font-weight:normal;color:#1b1b1b;white-space:pre;">Net Cash Flow from Financing Activities</div>
<div style="position:absolute;right:1982.60px;top:1520.58px;font-family:'Liberation Sans', sans-serif;font-size:14.2px;line-height:14.2px;font-weight:normal;color:#1b1b1b;white-space:pre;text-align:right;">900,000<span style="visibility:hidden">)</span></div>
<div style="position:absolute;right:1863.60px;top:1520.58px;font-family:'Liberation Sans', sans-serif;font-size:14.2px;line-height:14.2px;font-weight:normal;color:#1b1b1b;white-space:pre;text-align:right;">-<span style="visibility:hidden">)</span></div>
<div style="position:absolute;right:1744.60px;top:1520.58px;font-family:'Liberation Sans', sans-serif;font-size:14.2px;line-height:14.2px;font-weight:normal;color:#1b1b1b;white-space:pre;text-align:right;">98,333<span style="visibility:hidden">)</span></div>
<div style="position:absolute;right:1625.60px;top:1520.58px;font-family:'Liberation Sans', sans-serif;font-size:14.2px;line-height:14.2px;font-weight:normal;color:#1b1b1b;white-space:pre;text-align:right;">(1,667)</div>
<div style="position:absolute;right:1506.60px;top:1520.58px;font-family:'Liberation Sans', sans-serif;font-size:14.2px;line-height:14.2px;font-weight:normal;color:#1b1b1b;white-space:pre;text-align:right;">(1,667)</div>
<div style="position:absolute;right:1387.60px;top:1520.58px;font-family:'Liberation Sans', sans-serif;font-size:14.2px;line-height:14.2px;font-weight:normal;color:#1b1b1b;white-space:pre;text-align:right;">(1,667)</div>
<div style="position:absolute;right:1268.60px;top:1520.58px;font-family:'Liberation Sans', sans-serif;font-size:14.2px;line-height:14.2px;font-weight:normal;color:#1b1b1b;white-space:pre;text-align:right;">(1,667)</div>
<div style="position:absolute;right:1149.60px;top:1520.58px;font-family:'Liberation Sans', sans-serif;font-size:14.2px;line-height:14.2px;font-weight:normal;color:#1b1b1b;white-space:pre;text-align:right;">(1,667)</div>
<div style="position:absolute;right:1030.60px;top:1520.58px;font-family:'Liberation Sans', sans-serif;font-size:14.2px;line-height:14.2px;font-weight:normal;color:#1b1b1b;white-space:pre;text-align:right;">(1,667)</div>
<div style="position:absolute;right:911.60px;top:1520.58px;font-family:'Liberation Sans', sans-serif;font-size:14.2px;line-height:14.2px;font-weight:normal;color:#1b1b1b;white-space:pre;text-align:right;">(1,667)</div>
<div style="position:absolute;right:792.60px;top:1520.58px;font-family:'Liberation Sans', sans-serif;font-size:14.2px;line-height:14.2px;font-weight:normal;color:#1b1b1b;white-space:pre;text-align:right;">(1,667)</div>
<div style="position:absolute;right:673.60px;top:1520.58px;font-family:'Liberation Sans', sans-serif;font-size:14.2px;line-height:14.2px;font-weight:normal;color:#1b1b1b;white-space:pre;text-align:right;">(1,667)</div>
<div style="position:absolute;right:554.60px;top:1520.58px;font-family:'Liberation Sans', sans-serif;font-size:14.2px;line-height:14.2px;font-weight:normal;color:#1b1b1b;white-space:pre;text-align:right;">(3,770)</div>
<div style="position:absolute;right:435.60px;top:1520.58px;font-family:'Liberation Sans', sans-serif;font-size:14.2px;line-height:14.2px;font-weight:normal;color:#1b1b1b;white-space:pre;text-align:right;">(3,780)</div>
<div style="position:absolute;right:316.60px;top:1520.58px;font-family:'Liberation Sans', sans-serif;font-size:14.2px;line-height:14.2px;font-weight:normal;color:#1b1b1b;white-space:pre;text-align:right;">(3,791)</div>
<div style="position:absolute;right:197.60px;top:1520.58px;font-family:'Liberation Sans', sans-serif;font-size:14.2px;line-height:14.2px;font-weight:normal;color:#1b1b1b;white-space:pre;text-align:right;">(3,801)</div>
<div style="position:absolute;right:78.60px;top:1520.58px;font-family:'Liberation Sans', sans-serif;font-size:14.2px;line-height:14.2px;font-weight:normal;color:#1b1b1b;white-space:pre;text-align:right;">(3,812)</div>
<div style="position:absolute;left:139.00px;top:1540.06px;font-family:'Liberation Sans', sans-serif;font-size:15.4px;line-height:15.4px;font-weight:normal;color:#1b1b1b;white-space:pre;">Cash Receipts</div>
<div style="position:absolute;right:1982.60px;top:1540.68px;font-family:'Liberation Sans', sans-serif;font-size:14.2px;line-height:14.2px;font-weight:normal;color:#1b1b1b;white-space:pre;text-align:right;">32,258<span style="visibility:hidden">)</span></div>
<div style="position:absolute;right:1863.60px;top:1540.68px;font-family:'Liberation Sans', sans-serif;font-size:14.2px;line-height:14.2px;font-weight:normal;color:#1b1b1b;white-space:pre;text-align:right;">59,260<span style="visibility:hidden">)</span></div>
<div style="position:absolute;right:1744.60px;top:1540.68px;font-family:'Liberation Sans', sans-serif;font-size:14.2px;line-height:14.2px;font-weight:normal;color:#1b1b1b;white-space:pre;text-align:right;">65,740<span style="visibility:hidden">)</span></div>
<div style="position:absolute;right:1625.60px;top:1540.68px;font-family:'Liberation Sans', sans-serif;font-size:14.2px;line-height:14.2px;font-weight:normal;color:#1b1b1b;white-space:pre;text-align:right;">61,492<span style="visibility:hidden">)</span></div>
<div style="position:absolute;right:1506.60px;top:1540.68px;font-family:'Liberation Sans', sans-serif;font-size:14.2px;line-height:14.2px;font-weight:normal;color:#1b1b1b;white-space:pre;text-align:right;">63,508<span style="visibility:hidden">)</span></div>
<div style="position:absolute;right:1387.60px;top:1540.68px;font-family:'Liberation Sans', sans-serif;font-size:14.2px;line-height:14.2px;font-weight:normal;color:#1b1b1b;white-space:pre;text-align:right;">61,492<span style="visibility:hidden">)</span></div>
<div style="position:absolute;right:1268.60px;top:1540.68px;font-family:'Liberation Sans', sans-serif;font-size:14.2px;line-height:14.2px;font-weight:normal;color:#1b1b1b;white-space:pre;text-align:right;">63,508<span style="visibility:hidden">)</span></div>
<div style="position:absolute;right:1149.60px;top:1540.68px;font-family:'Liberation Sans', sans-serif;font-size:14.2px;line-height:14.2px;font-weight:normal;color:#1b1b1b;white-space:pre;text-align:right;">62,500<span style="visibility:hidden">)</span></div>
<div style="position:absolute;right:1030.60px;top:1540.68px;font-family:'Liberation Sans', sans-serif;font-size:14.2px;line-height:14.2px;font-weight:normal;color:#1b1b1b;white-space:pre;text-align:right;">61,492<span style="visibility:hidden">)</span></div>
<div style="position:absolute;right:911.60px;top:1540.68px;font-family:'Liberation Sans', sans-serif;font-size:14.2px;line-height:14.2px;font-weight:normal;color:#1b1b1b;white-space:pre;text-align:right;">63,508<span style="visibility:hidden">)</span></div>
<div style="position:absolute;right:792.60px;top:1540.68px;font-family:'Liberation Sans', sans-serif;font-size:14.2px;line-height:14.2px;font-weight:normal;color:#1b1b1b;white-space:pre;text-align:right;">61,492<span style="visibility:hidden">)</span></div>
<div style="position:absolute;right:673.60px;top:1540.68px;font-family:'Liberation Sans', sans-serif;font-size:14.2px;line-height:14.2px;font-weight:normal;color:#1b1b1b;white-space:pre;text-align:right;">63,508<span style="visibility:hidden">)</span></div>
<div style="position:absolute;right:554.60px;top:1540.68px;font-family:'Liberation Sans', sans-serif;font-size:14.2px;line-height:14.2px;font-weight:normal;color:#1b1b1b;white-space:pre;text-align:right;">121,166<span style="visibility:hidden">)</span></div>
<div style="position:absolute;right:435.60px;top:1540.68px;font-family:'Liberation Sans', sans-serif;font-size:14.2px;line-height:14.2px;font-weight:normal;color:#1b1b1b;white-space:pre;text-align:right;">167,033<span style="visibility:hidden">)</span></div>
<div style="position:absolute;right:316.60px;top:1540.68px;font-family:'Liberation Sans', sans-serif;font-size:14.2px;line-height:14.2px;font-weight:normal;color:#1b1b1b;white-space:pre;text-align:right;">185,299<span style="visibility:hidden">)</span></div>
<div style="position:absolute;right:197.60px;top:1540.68px;font-family:'Liberation Sans', sans-serif;font-size:14.2px;line-height:14.2px;font-weight:normal;color:#1b1b1b;white-space:pre;text-align:right;">173,325<span style="visibility:hidden">)</span></div>
<div style="position:absolute;right:78.60px;top:1540.68px;font-family:'Liberation Sans', sans-serif;font-size:14.2px;line-height:14.2px;font-weight:normal;color:#1b1b1b;white-space:pre;text-align:right;">179,008<span style="visibility:hidden">)</span></div>
<div style="position:absolute;left:139.00px;top:1560.16px;font-family:'Liberation Sans', sans-serif;font-size:15.4px;line-height:15.4px;font-weight:normal;color:#1b1b1b;white-space:pre;">Cash Payments</div>
<div style="position:absolute;right:1982.60px;top:1560.78px;font-family:'Liberation Sans', sans-serif;font-size:14.2px;line-height:14.2px;font-weight:normal;color:#1b1b1b;white-space:pre;text-align:right;">(26,259)</div>
<div style="position:absolute;right:1863.60px;top:1560.78px;font-family:'Liberation Sans', sans-serif;font-size:14.2px;line-height:14.2px;font-weight:normal;color:#1b1b1b;white-space:pre;text-align:right;">(41,263)</div>
<div style="position:absolute;right:1744.60px;top:1560.78px;font-family:'Liberation Sans', sans-serif;font-size:14.2px;line-height:14.2px;font-weight:normal;color:#1b1b1b;white-space:pre;text-align:right;">(44,864)</div>
<div style="position:absolute;right:1625.60px;top:1560.78px;font-family:'Liberation Sans', sans-serif;font-size:14.2px;line-height:14.2px;font-weight:normal;color:#1b1b1b;white-space:pre;text-align:right;">(42,504)</div>
<div style="position:absolute;right:1506.60px;top:1560.78px;font-family:'Liberation Sans', sans-serif;font-size:14.2px;line-height:14.2px;font-weight:normal;color:#1b1b1b;white-space:pre;text-align:right;">(43,624)</div>
<div style="position:absolute;right:1387.60px;top:1560.78px;font-family:'Liberation Sans', sans-serif;font-size:14.2px;line-height:14.2px;font-weight:normal;color:#1b1b1b;white-space:pre;text-align:right;">(42,504)</div>
<div style="position:absolute;right:1268.60px;top:1560.78px;font-family:'Liberation Sans', sans-serif;font-size:14.2px;line-height:14.2px;font-weight:normal;color:#1b1b1b;white-space:pre;text-align:right;">(43,624)</div>
<div style="position:absolute;right:1149.60px;top:1560.78px;font-family:'Liberation Sans', sans-serif;font-size:14.2px;line-height:14.2px;font-weight:normal;color:#1b1b1b;white-space:pre;text-align:right;">(43,064)</div>
<div style="position:absolute;right:1030.60px;top:1560.78px;font-family:'Liberation Sans', sans-serif;font-size:14.2px;line-height:14.2px;font-weight:normal;color:#1b1b1b;white-space:pre;text-align:right;">(42,504)</div>
<div style="position:absolute;right:911.60px;top:1560.78px;font-family:'Liberation Sans', sans-serif;font-size:14.2px;line-height:14.2px;font-weight:normal;color:#1b1b1b;white-space:pre;text-align:right;">(43,624)</div>
<div style="position:absolute;right:792.60px;top:1560.78px;font-family:'Liberation Sans', sans-serif;font-size:14.2px;line-height:14.2px;font-weight:normal;color:#1b1b1b;white-space:pre;text-align:right;">(42,504)</div>
<div style="position:absolute;right:673.60px;top:1560.78px;font-family:'Liberation Sans', sans-serif;font-size:14.2px;line-height:14.2px;font-weight:normal;color:#1b1b1b;white-space:pre;text-align:right;">(43,624)</div>
<div style="position:absolute;right:554.60px;top:1560.78px;font-family:'Liberation Sans', sans-serif;font-size:14.2px;line-height:14.2px;font-weight:normal;color:#1b1b1b;white-space:pre;text-align:right;">(67,671)</div>
<div style="position:absolute;right:435.60px;top:1560.78px;font-family:'Liberation Sans', sans-serif;font-size:14.2px;line-height:14.2px;font-weight:normal;color:#1b1b1b;white-space:pre;text-align:right;">(75,159)</div>
<div style="position:absolute;right:316.60px;top:1560.78px;font-family:'Liberation Sans', sans-serif;font-size:14.2px;line-height:14.2px;font-weight:normal;color:#1b1b1b;white-space:pre;text-align:right;">(80,989)</div>
<div style="position:absolute;right:197.60px;top:1560.78px;font-family:'Liberation Sans', sans-serif;font-size:14.2px;line-height:14.2px;font-weight:normal;color:#1b1b1b;white-space:pre;text-align:right;">(77,167)</div>
<div style="position:absolute;right:78.60px;top:1560.78px;font-family:'Liberation Sans', sans-serif;font-size:14.2px;line-height:14.2px;font-weight:normal;color:#1b1b1b;white-space:pre;text-align:right;">(78,981)</div>
<div style="position:absolute;left:139.00px;top:1580.06px;font-family:'Liberation Sans', sans-serif;font-size:15.4px;line-height:15.4px;font-weight:normal;color:#1b1b1b;white-space:pre;">Change in Cash (Pre-Corporate Tax &amp; Interest on Cash)</div>
<div style="position:absolute;right:1982.60px;top:1580.68px;font-family:'Liberation Sans', sans-serif;font-size:14.2px;line-height:14.2px;font-weight:normal;color:#1b1b1b;white-space:pre;text-align:right;">899,749<span style="visibility:hidden">)</span></div>
<div style="position:absolute;right:1863.60px;top:1580.68px;font-family:'Liberation Sans', sans-serif;font-size:14.2px;line-height:14.2px;font-weight:normal;color:#1b1b1b;white-space:pre;text-align:right;">9,080<span style="visibility:hidden">)</span></div>
<div style="position:absolute;right:1744.60px;top:1580.68px;font-family:'Liberation Sans', sans-serif;font-size:14.2px;line-height:14.2px;font-weight:normal;color:#1b1b1b;white-space:pre;text-align:right;">108,293<span style="visibility:hidden">)</span></div>
<div style="position:absolute;right:1625.60px;top:1580.68px;font-family:'Liberation Sans', sans-serif;font-size:14.2px;line-height:14.2px;font-weight:normal;color:#1b1b1b;white-space:pre;text-align:right;">10,780<span style="visibility:hidden">)</span></div>
<div style="position:absolute;right:1506.60px;top:1580.68px;font-family:'Liberation Sans', sans-serif;font-size:14.2px;line-height:14.2px;font-weight:normal;color:#1b1b1b;white-space:pre;text-align:right;">13,592<span style="visibility:hidden">)</span></div>
<div style="position:absolute;right:1387.60px;top:1580.68px;font-family:'Liberation Sans', sans-serif;font-size:14.2px;line-height:14.2px;font-weight:normal;color:#1b1b1b;white-space:pre;text-align:right;">14,697<span style="visibility:hidden">)</span></div>
<div style="position:absolute;right:1268.60px;top:1580.68px;font-family:'Liberation Sans', sans-serif;font-size:14.2px;line-height:14.2px;font-weight:normal;color:#1b1b1b;white-space:pre;text-align:right;">16,842<span style="visibility:hidden">)</span></div>
<div style="position:absolute;right:1149.60px;top:1580.68px;font-family:'Liberation Sans', sans-serif;font-size:14.2px;line-height:14.2px;font-weight:normal;color:#1b1b1b;white-space:pre;text-align:right;">17,020<span style="visibility:hidden">)</span></div>
<div style="position:absolute;right:1030.60px;top:1580.68px;font-family:'Liberation Sans', sans-serif;font-size:14.2px;line-height:14.2px;font-weight:normal;color:#1b1b1b;white-space:pre;text-align:right;">17,322<span style="visibility:hidden">)</span></div>
<div style="position:absolute;right:911.60px;top:1580.68px;font-family:'Liberation Sans', sans-serif;font-size:14.2px;line-height:14.2px;font-weight:normal;color:#1b1b1b;white-space:pre;text-align:right;">18,217<span style="visibility:hidden">)</span></div>
<div style="position:absolute;right:792.60px;top:1580.68px;font-family:'Liberation Sans', sans-serif;font-size:14.2px;line-height:14.2px;font-weight:normal;color:#1b1b1b;white-space:pre;text-align:right;">17,322<span style="visibility:hidden">)</span></div>
<div style="position:absolute;right:673.60px;top:1580.68px;font-family:'Liberation Sans', sans-serif;font-size:14.2px;line-height:14.2px;font-weight:normal;color:#1b1b1b;white-space:pre;text-align:right;">18,217<span style="visibility:hidden">)</span></div>
<div style="position:absolute;right:554.60px;top:1580.68px;font-family:'Liberation Sans', sans-serif;font-size:14.2px;line-height:14.2px;font-weight:normal;color:#1b1b1b;white-space:pre;text-align:right;">49,726<span style="visibility:hidden">)</span></div>
<div style="position:absolute;right:435.60px;top:1580.68px;font-family:'Liberation Sans', sans-serif;font-size:14.2px;line-height:14.2px;font-weight:normal;color:#1b1b1b;white-space:pre;text-align:right;">88,095<span style="visibility:hidden">)</span></div>
<div style="position:absolute;right:316.60px;top:1580.68px;font-family:'Liberation Sans', sans-serif;font-size:14.2px;line-height:14.2px;font-weight:normal;color:#1b1b1b;white-space:pre;text-align:right;">100,520<span style="visibility:hidden">)</span></div>
<div style="position:absolute;right:197.60px;top:1580.68px;font-family:'Liberation Sans', sans-serif;font-size:14.2px;line-height:14.2px;font-weight:normal;color:#1b1b1b;white-space:pre;text-align:right;">92,357<span style="visibility:hidden">)</span></div>
<div style="position:absolute;right:78.60px;top:1580.68px;font-family:'Liberation Sans', sans-serif;font-size:14.2px;line-height:14.2px;font-weight:normal;color:#1b1b1b;white-space:pre;text-align:right;">96,215<span style="visibility:hidden">)</span></div>
<div style="position:absolute;left:139.00px;top:1600.16px;font-family:'Liberation Sans', sans-serif;font-size:15.4px;line-height:15.4px;font-weight:normal;color:#1b1b1b;white-space:pre;">Interest Expense</div>
<div style="position:absolute;right:1982.60px;top:1600.78px;font-family:'Liberation Sans', sans-serif;font-size:14.2px;line-height:14.2px;font-weight:normal;color:#1b1b1b;white-space:pre;text-align:right;">(1,000)</div>
<div style="position:absolute;right:1863.60px;top:1600.78px;font-family:'Liberation Sans', sans-serif;font-size:14.2px;line-height:14.2px;font-weight:normal;color:#1b1b1b;white-space:pre;text-align:right;">(1,000)</div>
<div style="position:absolute;right:1744.60px;top:1600.78px;font-family:'Liberation Sans', sans-serif;font-size:14.2px;line-height:14.2px;font-weight:normal;color:#1b1b1b;white-space:pre;text-align:right;">(1,667)</div>
<div style="position:absolute;right:1625.60px;top:1600.78px;font-family:'Liberation Sans', sans-serif;font-size:14.2px;line-height:14.2px;font-weight:normal;color:#1b1b1b;white-space:pre;text-align:right;">(1,656)</div>
<div style="position:absolute;right:1506.60px;top:1600.78px;font-family:'Liberation Sans', sans-serif;font-size:14.2px;line-height:14.2px;font-weight:normal;color:#1b1b1b;white-space:pre;text-align:right;">(1,644)</div>
<div style="position:absolute;right:1387.60px;top:1600.78px;font-family:'Liberation Sans', sans-serif;font-size:14.2px;line-height:14.2px;font-weight:normal;color:#1b1b1b;white-space:pre;text-align:right;">(1,633)</div>
<div style="position:absolute;right:1268.60px;top:1600.78px;font-family:'Liberation Sans', sans-serif;font-size:14.2px;line-height:14.2px;font-weight:normal;color:#1b1b1b;white-space:pre;text-align:right;">(1,622)</div>
<div style="position:absolute;right:1149.60px;top:1600.78px;font-family:'Liberation Sans', sans-serif;font-size:14.2px;line-height:14.2px;font-weight:normal;color:#1b1b1b;white-space:pre;text-align:right;">(1,611)</div>
<div style="position:absolute;right:1030.60px;top:1600.78px;font-family:'Liberation Sans', sans-serif;font-size:14.2px;line-height:14.2px;font-weight:normal;color:#1b1b1b;white-space:pre;text-align:right;">(1,600)</div>
<div style="position:absolute;right:911.60px;top:1600.78px;font-family:'Liberation Sans', sans-serif;font-size:14.2px;line-height:14.2px;font-weight:normal;color:#1b1b1b;white-space:pre;text-align:right;">(1,589)</div>
<div style="position:absolute;right:792.60px;top:1600.78px;font-family:'Liberation Sans', sans-serif;font-size:14.2px;line-height:14.2px;font-weight:normal;color:#1b1b1b;white-space:pre;text-align:right;">(1,578)</div>
<div style="position:absolute;right:673.60px;top:1600.78px;font-family:'Liberation Sans', sans-serif;font-size:14.2px;line-height:14.2px;font-weight:normal;color:#1b1b1b;white-space:pre;text-align:right;">(1,567)</div>
<div style="position:absolute;right:554.60px;top:1600.78px;font-family:'Liberation Sans', sans-serif;font-size:14.2px;line-height:14.2px;font-weight:normal;color:#1b1b1b;white-space:pre;text-align:right;">(1,556)</div>
<div style="position:absolute;right:435.60px;top:1600.78px;font-family:'Liberation Sans', sans-serif;font-size:14.2px;line-height:14.2px;font-weight:normal;color:#1b1b1b;white-space:pre;text-align:right;">(1,534)</div>
<div style="position:absolute;right:316.60px;top:1600.78px;font-family:'Liberation Sans', sans-serif;font-size:14.2px;line-height:14.2px;font-weight:normal;color:#1b1b1b;white-space:pre;text-align:right;">(1,512)</div>
<div style="position:absolute;right:197.60px;top:1600.78px;font-family:'Liberation Sans', sans-serif;font-size:14.2px;line-height:14.2px;font-weight:normal;color:#1b1b1b;white-space:pre;text-align:right;">(1,491)</div>
<div style="position:absolute;right:78.60px;top:1600.78px;font-family:'Liberation Sans', sans-serif;font-size:14.2px;line-height:14.2px;font-weight:normal;color:#1b1b1b;white-space:pre;text-align:right;">(1,469)</div>
<div style="position:absolute;left:139.00px;top:1620.06px;font-family:'Liberation Sans', sans-serif;font-size:15.4px;line-height:15.4px;font-weight:normal;color:#1b1b1b;white-space:pre;">Corporate Tax Expense</div>
<div style="position:absolute;right:1982.60px;top:1620.68px;font-family:'Liberation Sans', sans-serif;font-size:14.2px;line-height:14.2px;font-weight:normal;color:#1b1b1b;white-space:pre;text-align:right;">(4,596)</div>
<div style="position:absolute;right:1863.60px;top:1620.68px;font-family:'Liberation Sans', sans-serif;font-size:14.2px;line-height:14.2px;font-weight:normal;color:#1b1b1b;white-space:pre;text-align:right;">(4,577)</div>
<div style="position:absolute;right:1744.60px;top:1620.68px;font-family:'Liberation Sans', sans-serif;font-size:14.2px;line-height:14.2px;font-weight:normal;color:#1b1b1b;white-space:pre;text-align:right;">(4,388)</div>
<div style="position:absolute;right:1625.60px;top:1620.68px;font-family:'Liberation Sans', sans-serif;font-size:14.2px;line-height:14.2px;font-weight:normal;color:#1b1b1b;white-space:pre;text-align:right;">(4,377)</div>
<div style="position:absolute;right:1506.60px;top:1620.68px;font-family:'Liberation Sans', sans-serif;font-size:14.2px;line-height:14.2px;font-weight:normal;color:#1b1b1b;white-space:pre;text-align:right;">(4,370)</div>
<div style="position:absolute;right:1387.60px;top:1620.68px;font-family:'Liberation Sans', sans-serif;font-size:14.2px;line-height:14.2px;font-weight:normal;color:#1b1b1b;white-space:pre;text-align:right;">(4,368)</div>
<div style="position:absolute;right:1268.60px;top:1620.68px;font-family:'Liberation Sans', sans-serif;font-size:14.2px;line-height:14.2px;font-weight:normal;color:#1b1b1b;white-space:pre;text-align:right;">(4,368)</div>
<div style="position:absolute;right:1149.60px;top:1620.68px;font-family:'Liberation Sans', sans-serif;font-size:14.2px;line-height:14.2px;font-weight:normal;color:#1b1b1b;white-space:pre;text-align:right;">(4,369)</div>
<div style="position:absolute;right:1030.60px;top:1620.68px;font-family:'Liberation Sans', sans-serif;font-size:14.2px;line-height:14.2px;font-weight:normal;color:#1b1b1b;white-space:pre;text-align:right;">(4,372)</div>
<div style="position:absolute;right:911.60px;top:1620.68px;font-family:'Liberation Sans', sans-serif;font-size:14.2px;line-height:14.2px;font-weight:normal;color:#1b1b1b;white-space:pre;text-align:right;">(4,374)</div>
<div style="position:absolute;right:792.60px;top:1620.68px;font-family:'Liberation Sans', sans-serif;font-size:14.2px;line-height:14.2px;font-weight:normal;color:#1b1b1b;white-space:pre;text-align:right;">(4,377)</div>
<div style="position:absolute;right:673.60px;top:1620.68px;font-family:'Liberation Sans', sans-serif;font-size:14.2px;line-height:14.2px;font-weight:normal;color:#1b1b1b;white-space:pre;text-align:right;">(4,380)</div>
<div style="position:absolute;right:554.60px;top:1620.68px;font-family:'Liberation Sans', sans-serif;font-size:14.2px;line-height:14.2px;font-weight:normal;color:#1b1b1b;white-space:pre;text-align:right;">(24,047)</div>
<div style="position:absolute;right:435.60px;top:1620.68px;font-family:'Liberation Sans', sans-serif;font-size:14.2px;line-height:14.2px;font-weight:normal;color:#1b1b1b;white-space:pre;text-align:right;">(24,052)</div>
<div style="position:absolute;right:316.60px;top:1620.68px;font-family:'Liberation Sans', sans-serif;font-size:14.2px;line-height:14.2px;font-weight:normal;color:#1b1b1b;white-space:pre;text-align:right;">(24,058)</div>
<div style="position:absolute;right:197.60px;top:1620.68px;font-family:'Liberation Sans', sans-serif;font-size:14.2px;line-height:14.2px;font-weight:normal;color:#1b1b1b;white-space:pre;text-align:right;">(24,063)</div>
<div style="position:absolute;right:78.60px;top:1620.68px;font-family:'Liberation Sans', sans-serif;font-size:14.2px;line-height:14.2px;font-weight:normal;color:#1b1b1b;white-space:pre;text-align:right;">(24,068)</div>
<div style="position:absolute;left:135.00px;top:1637.00px;width:2725.00px;height:20.80px;background:#4ab2e8;"></div>
<div style="position:absolute;left:146.50px;top:1640.01px;font-family:'Liberation Sans', sans-serif;font-size:17.0px;line-height:17.0px;font-weight:bold;color:#ffffff;white-space:pre;">Net Increase/(Decrease) in Cash Held</div>
<div style="position:absolute;right:1983.60px;top:1637.98px;font-family:'Liberation Serif', serif;font-size:19.4px;line-height:19.4px;font-weight:bold;color:#ffffff;white-space:pre;text-align:right;transform:scaleY(0.93);transform-origin:0 16.25px;-webkit-text-stroke:0.25px #ffffff">894,153<span style="visibility:hidden">)</span></div>
<div style="position:absolute;right:1864.60px;top:1637.98px;font-family:'Liberation Serif', serif;font-size:19.4px;line-height:19.4px;font-weight:bold;color:#ffffff;white-space:pre;text-align:right;transform:scaleY(0.93);transform-origin:0 16.25px;-webkit-text-stroke:0.25px #ffffff">3,502<span style="visibility:hidden">)</span></div>
<div style="position:absolute;right:1745.60px;top:1637.98px;font-family:'Liberation Serif', serif;font-size:19.4px;line-height:19.4px;font-weight:bold;color:#ffffff;white-space:pre;text-align:right;transform:scaleY(0.93);transform-origin:0 16.25px;-webkit-text-stroke:0.25px #ffffff">102,238<span style="visibility:hidden">)</span></div>
<div style="position:absolute;right:1626.60px;top:1637.98px;font-family:'Liberation Serif', serif;font-size:19.4px;line-height:19.4px;font-weight:bold;color:#ffffff;white-space:pre;text-align:right;transform:scaleY(0.93);transform-origin:0 16.25px;-webkit-text-stroke:0.25px #ffffff">4,747<span style="visibility:hidden">)</span></div>
<div style="position:absolute;right:1507.60px;top:1637.98px;font-family:'Liberation Serif', serif;font-size:19.4px;line-height:19.4px;font-weight:bold;color:#ffffff;white-space:pre;text-align:right;transform:scaleY(0.93);transform-origin:0 16.25px;-webkit-text-stroke:0.25px #ffffff">7,578<span style="visibility:hidden">)</span></div>
<div style="position:absolute;right:1388.60px;top:1637.98px;font-family:'Liberation Serif', serif;font-size:19.4px;line-height:19.4px;font-weight:bold;color:#ffffff;white-space:pre;text-align:right;transform:scaleY(0.93);transform-origin:0 16.25px;-webkit-text-stroke:0.25px #ffffff">8,696<span style="visibility:hidden">)</span></div>
<div style="position:absolute;right:1269.60px;top:1637.98px;font-family:'Liberation Serif', serif;font-size:19.4px;line-height:19.4px;font-weight:bold;color:#ffffff;white-space:pre;text-align:right;transform:scaleY(0.93);transform-origin:0 16.25px;-webkit-text-stroke:0.25px #ffffff">10,853<span style="visibility:hidden">)</span></div>
<div style="position:absolute;right:1150.60px;top:1637.98px;font-family:'Liberation Serif', serif;font-size:19.4px;line-height:19.4px;font-weight:bold;color:#ffffff;white-space:pre;text-align:right;transform:scaleY(0.93);transform-origin:0 16.25px;-webkit-text-stroke:0.25px #ffffff">11,040<span style="visibility:hidden">)</span></div>
<div style="position:absolute;right:1031.60px;top:1637.98px;font-family:'Liberation Serif', serif;font-size:19.4px;line-height:19.4px;font-weight:bold;color:#ffffff;white-space:pre;text-align:right;transform:scaleY(0.93);transform-origin:0 16.25px;-webkit-text-stroke:0.25px #ffffff">11,350<span style="visibility:hidden">)</span></div>
<div style="position:absolute;right:912.60px;top:1637.98px;font-family:'Liberation Serif', serif;font-size:19.4px;line-height:19.4px;font-weight:bold;color:#ffffff;white-space:pre;text-align:right;transform:scaleY(0.93);transform-origin:0 16.25px;-webkit-text-stroke:0.25px #ffffff">12,254<span style="visibility:hidden">)</span></div>
<div style="position:absolute;right:793.60px;top:1637.98px;font-family:'Liberation Serif', serif;font-size:19.4px;line-height:19.4px;font-weight:bold;color:#ffffff;white-space:pre;text-align:right;transform:scaleY(0.93);transform-origin:0 16.25px;-webkit-text-stroke:0.25px #ffffff">11,367<span style="visibility:hidden">)</span></div>
<div style="position:absolute;right:674.60px;top:1637.98px;font-family:'Liberation Serif', serif;font-size:19.4px;line-height:19.4px;font-weight:bold;color:#ffffff;white-space:pre;text-align:right;transform:scaleY(0.93);transform-origin:0 16.25px;-webkit-text-stroke:0.25px #ffffff">12,271<span style="visibility:hidden">)</span></div>
<div style="position:absolute;right:555.60px;top:1637.98px;font-family:'Liberation Serif', serif;font-size:19.4px;line-height:19.4px;font-weight:bold;color:#ffffff;white-space:pre;text-align:right;transform:scaleY(0.93);transform-origin:0 16.25px;-webkit-text-stroke:0.25px #ffffff">24,124<span style="visibility:hidden">)</span></div>
<div style="position:absolute;right:436.60px;top:1637.98px;font-family:'Liberation Serif', serif;font-size:19.4px;line-height:19.4px;font-weight:bold;color:#ffffff;white-space:pre;text-align:right;transform:scaleY(0.93);transform-origin:0 16.25px;-webkit-text-stroke:0.25px #ffffff">62,508<span style="visibility:hidden">)</span></div>
<div style="position:absolute;right:317.60px;top:1637.98px;font-family:'Liberation Serif', serif;font-size:19.4px;line-height:19.4px;font-weight:bold;color:#ffffff;white-space:pre;text-align:right;transform:scaleY(0.93);transform-origin:0 16.25px;-webkit-text-stroke:0.25px #ffffff">74,950<span style="visibility:hidden">)</span></div>
<div style="position:absolute;right:198.60px;top:1637.98px;font-family:'Liberation Serif', serif;font-size:19.4px;line-height:19.4px;font-weight:bold;color:#ffffff;white-space:pre;text-align:right;transform:scaleY(0.93);transform-origin:0 16.25px;-webkit-text-stroke:0.25px #ffffff">66,803<span style="visibility:hidden">)</span></div>
<div style="position:absolute;right:79.60px;top:1637.98px;font-family:'Liberation Serif', serif;font-size:19.4px;line-height:19.4px;font-weight:bold;color:#ffffff;white-space:pre;text-align:right;transform:scaleY(0.93);transform-origin:0 16.25px;-webkit-text-stroke:0.25px #ffffff">70,678<span style="visibility:hidden">)</span></div>
<div style="position:absolute;left:802.90px;top:297.00px;width:1.00px;height:1373.00px;background:#9a9a9a;"></div>
</div>
<div style="position:absolute;left:2860.00px;top:278.00px;width:30.00px;height:1392.00px;background:#141414;"></div>
<svg style="position:absolute;left:2868.00px;top:284.00px;" width="16" height="13" viewBox="0 0 16 13"><path d="M8 1.5 L14.5 11.5 H1.5 Z" fill="#9a9a9a" stroke="#9a9a9a" stroke-width="1.5" stroke-linejoin="round"/></svg>
<div style="position:absolute;left:2869.8px;top:303.7px;width:12.2px;height:1016px;border-radius:6px;background:#9b9b9b"></div>
<svg style="position:absolute;left:2868.00px;top:1653.00px;" width="16" height="13" viewBox="0 0 16 13"><path d="M1.5 1.5 H14.5 L8 11.5 Z" fill="#9a9a9a" stroke="#9a9a9a" stroke-width="1.5" stroke-linejoin="round"/></svg>
<div style="position:absolute;left:11.00px;top:1670.00px;width:2879.00px;height:48.00px;background:#0c0c0c;"></div>
<div style="position:absolute;left:11.00px;top:1717.20px;width:2879.00px;height:1.20px;background:#2e2e2e;"></div>
<div style="position:absolute;left:11.00px;top:1718.40px;width:2879.00px;height:32.60px;background:#161616;"></div>
<svg style="position:absolute;left:44.00px;top:1684.00px;" width="14" height="19" viewBox="0 0 14 19"><path d="M11 1.5 L3 9.5 L11 17.5" stroke="#9a9a9a" stroke-width="1.6" fill="none"/></svg>
<svg style="position:absolute;left:93.00px;top:1684.00px;" width="14" height="19" viewBox="0 0 14 19"><path d="M3 1.5 L11 9.5 L3 17.5" stroke="#d8d8d8" stroke-width="1.6" fill="none"/></svg>
<div style="position:absolute;left:190.50px;top:1685.23px;font-family:'Liberation Sans', sans-serif;font-size:20.4px;line-height:20.4px;font-weight:normal;color:#ffffff;white-space:pre;">Contents</div>
<div style="position:absolute;left:291.80px;top:1680.70px;width:1.20px;height:26.90px;background:#4a4a4a;"></div>
<div style="position:absolute;left:432.40px;top:1680.70px;width:1.20px;height:26.90px;background:#4a4a4a;"></div>
<div style="position:absolute;left:551.40px;top:1680.70px;width:1.20px;height:26.90px;background:#4a4a4a;"></div>
<div style="position:absolute;left:722.40px;top:1680.70px;width:1.20px;height:26.90px;background:#4a4a4a;"></div>
<div style="position:absolute;left:824.90px;top:1680.70px;width:1.20px;height:26.90px;background:#4a4a4a;"></div>
<div style="position:absolute;left:925.10px;top:1680.70px;width:1.20px;height:26.90px;background:#4a4a4a;"></div>
<div style="position:absolute;left:1050.40px;top:1680.70px;width:1.20px;height:26.90px;background:#4a4a4a;"></div>
<div style="position:absolute;left:1154.00px;top:1680.70px;width:1.20px;height:26.90px;background:#4a4a4a;"></div>
<div style="position:absolute;left:1208.80px;top:1680.70px;width:1.20px;height:26.90px;background:#4a4a4a;"></div>
<div style="position:absolute;left:1269.90px;top:1680.70px;width:1.20px;height:26.90px;background:#4a4a4a;"></div>
<div style="position:absolute;left:1330.80px;top:1680.70px;width:1.20px;height:26.90px;background:#4a4a4a;"></div>
<div style="position:absolute;left:1458.70px;top:1680.70px;width:1.20px;height:26.90px;background:#4a4a4a;"></div>
<div style="position:absolute;left:1587.00px;top:1680.70px;width:1.20px;height:26.90px;background:#4a4a4a;"></div>
<div style="position:absolute;left:1713.40px;top:1680.70px;width:1.20px;height:26.90px;background:#4a4a4a;"></div>
<div style="position:absolute;left:1774.40px;top:1680.70px;width:1.20px;height:26.90px;background:#4a4a4a;"></div>
<div style="position:absolute;left:1860.40px;top:1680.70px;width:1.20px;height:26.90px;background:#4a4a4a;"></div>
<div style="position:absolute;left:1957.40px;top:1680.70px;width:1.20px;height:26.90px;background:#4a4a4a;"></div>
<div style="position:absolute;left:2035.40px;top:1680.70px;width:1.20px;height:26.90px;background:#4a4a4a;"></div>
<div style="position:absolute;left:299.5px;top:1676.5px;width:127.5px;height:35.2px;border-radius:6px;background:#fbe870"></div>
<div style="position:absolute;left:-136.55px;width:1000px;top:1686.11px;font-family:'Liberation Sans', sans-serif;font-size:19.6px;line-height:19.6px;font-weight:normal;color:#111111;white-space:pre;text-align:center;letter-spacing:0.45px">Dashboard</div>
<div style="position:absolute;left:440px;top:1676.5px;width:105.7px;height:35.2px;border-radius:6px;background:#fbe870"></div>
<div style="position:absolute;left:-6.95px;width:1000px;top:1686.11px;font-family:'Liberation Sans', sans-serif;font-size:19.6px;line-height:19.6px;font-weight:normal;color:#111111;white-space:pre;text-align:center;letter-spacing:0.45px">Revenue</div>
<div style="position:absolute;left:559px;top:1676.5px;width:157.7px;height:35.2px;border-radius:6px;background:#fbe870"></div>
<div style="position:absolute;left:138.05px;width:1000px;top:1686.11px;font-family:'Liberation Sans', sans-serif;font-size:19.6px;line-height:19.6px;font-weight:normal;color:#111111;white-space:pre;text-align:center;letter-spacing:0.45px">COGS &amp; OPEX</div>
<div style="position:absolute;left:730px;top:1676.5px;width:89.0px;height:35.2px;border-radius:6px;background:#fbe870"></div>
<div style="position:absolute;left:274.70px;width:1000px;top:1686.11px;font-family:'Liberation Sans', sans-serif;font-size:19.6px;line-height:19.6px;font-weight:normal;color:#111111;white-space:pre;text-align:center;letter-spacing:0.45px">Payroll</div>
<div style="position:absolute;left:831.7px;top:1676.5px;width:87.0px;height:35.2px;border-radius:6px;background:#fbe870"></div>
<div style="position:absolute;left:375.40px;width:1000px;top:1686.11px;font-family:'Liberation Sans', sans-serif;font-size:19.6px;line-height:19.6px;font-weight:normal;color:#111111;white-space:pre;text-align:center;letter-spacing:0.45px">CAPEX</div>
<div style="position:absolute;left:932px;top:1676.5px;width:113.0px;height:35.2px;border-radius:6px;background:#fbe870"></div>
<div style="position:absolute;left:488.70px;width:1000px;top:1686.11px;font-family:'Liberation Sans', sans-serif;font-size:19.6px;line-height:19.6px;font-weight:normal;color:#111111;white-space:pre;text-align:center;letter-spacing:0.45px">CapTable</div>
<div style="position:absolute;left:1058px;top:1676.5px;width:90.0px;height:35.2px;border-radius:6px;background:#fbe870"></div>
<div style="position:absolute;left:603.20px;width:1000px;top:1686.11px;font-family:'Liberation Sans', sans-serif;font-size:19.6px;line-height:19.6px;font-weight:normal;color:#111111;white-space:pre;text-align:center;letter-spacing:0.45px">Capital</div>
<div style="position:absolute;left:1161px;top:1676.5px;width:42.0px;height:35.2px;border-radius:6px;background:#4db3e8"></div>
<div style="position:absolute;left:682.20px;width:1000px;top:1686.11px;font-family:'Liberation Sans', sans-serif;font-size:19.6px;line-height:19.6px;font-weight:normal;color:#111111;white-space:pre;text-align:center;letter-spacing:0.45px">IS</div>
<div style="position:absolute;left:1277px;top:1676.5px;width:47.8px;height:35.2px;border-radius:6px;background:#4db3e8"></div>
<div style="position:absolute;left:801.10px;width:1000px;top:1686.11px;font-family:'Liberation Sans', sans-serif;font-size:19.6px;line-height:19.6px;font-weight:normal;color:#111111;white-space:pre;text-align:center;letter-spacing:0.45px">BS</div>
<div style="position:absolute;left:1338px;top:1676.5px;width:114.7px;height:35.2px;border-radius:6px;background:#4db3e8"></div>
<div style="position:absolute;left:895.55px;width:1000px;top:1686.11px;font-family:'Liberation Sans', sans-serif;font-size:19.6px;line-height:19.6px;font-weight:normal;color:#111111;white-space:pre;text-align:center;letter-spacing:0.45px">Scenarios</div>
<div style="position:absolute;left:1466px;top:1676.5px;width:115.0px;height:35.2px;border-radius:6px;background:#4db3e8"></div>
<div style="position:absolute;left:1023.70px;width:1000px;top:1686.11px;font-family:'Liberation Sans', sans-serif;font-size:19.6px;line-height:19.6px;font-weight:normal;color:#111111;white-space:pre;text-align:center;letter-spacing:0.45px">Valuation</div>
<div style="position:absolute;left:1594px;top:1676.5px;width:114.0px;height:35.2px;border-radius:6px;background:#4db3e8"></div>
<div style="position:absolute;left:1151.20px;width:1000px;top:1686.11px;font-family:'Liberation Sans', sans-serif;font-size:19.6px;line-height:19.6px;font-weight:normal;color:#111111;white-space:pre;text-align:center;letter-spacing:0.45px">Summary</div>
<div style="position:absolute;left:1721px;top:1676.5px;width:48.0px;height:35.2px;border-radius:6px;background:#4db3e8"></div>
<div style="position:absolute;left:1245.20px;width:1000px;top:1686.11px;font-family:'Liberation Sans', sans-serif;font-size:19.6px;line-height:19.6px;font-weight:normal;color:#111111;white-space:pre;text-align:center;letter-spacing:0.45px">BE</div>
<div style="position:absolute;left:1782px;top:1676.5px;width:72.0px;height:35.2px;border-radius:6px;background:#4db3e8"></div>
<div style="position:absolute;left:1318.20px;width:1000px;top:1686.11px;font-family:'Liberation Sans', sans-serif;font-size:19.6px;line-height:19.6px;font-weight:normal;color:#111111;white-space:pre;text-align:center;letter-spacing:0.45px">ROIC</div>
<div style="position:absolute;left:1867px;top:1676.5px;width:84.7px;height:35.2px;border-radius:6px;background:#4db3e8"></div>
<div style="position:absolute;left:1409.55px;width:1000px;top:1686.11px;font-family:'Liberation Sans', sans-serif;font-size:19.6px;line-height:19.6px;font-weight:normal;color:#111111;white-space:pre;text-align:center;letter-spacing:0.45px">Charts</div>
<div style="position:absolute;left:1965px;top:1676.5px;width:64.0px;height:35.2px;border-radius:6px;background:#4db3e8"></div>
<div style="position:absolute;left:1497.20px;width:1000px;top:1686.11px;font-family:'Liberation Sans', sans-serif;font-size:19.6px;line-height:19.6px;font-weight:normal;color:#111111;white-space:pre;text-align:center;letter-spacing:0.45px">KPIs</div>
<div style="position:absolute;left:2042px;top:1676.5px;width:30px;height:35.2px;overflow:hidden"><div style="position:absolute;left:0;top:0;width:80px;height:35.2px;border-radius:6px;background:#4db3e8"></div><div style="position:absolute;left:10px;top:8.61px;font-family:'Liberation Sans', sans-serif;font-size:19.6px;line-height:19.6px;color:#111;white-space:pre">Sc</div></div>
<div style="position:absolute;left:1208px;top:1670px;width:64px;height:10px;background:#ffffff"></div>
<div style="position:absolute;left:1200px;top:1670px;width:16px;height:10px;background:#0c0c0c;border-top-right-radius:8px"></div>
<div style="position:absolute;left:1264px;top:1670px;width:16px;height:10px;background:#0c0c0c;border-top-left-radius:8px"></div>
<div style="position:absolute;left:1216px;top:1668px;width:48px;height:44px;border-radius:0 0 6px 6px;background:linear-gradient(#ffffff 0%, #ffffff 35%, #d3e6f6 100%)"></div>
<div style="position:absolute;left:740.00px;width:1000px;top:1680.71px;font-family:'Liberation Sans', sans-serif;font-size:19.6px;line-height:19.6px;font-weight:normal;color:#222222;white-space:pre;text-align:center;">CF</div>
<div style="position:absolute;left:1228.00px;top:1705.00px;width:24.00px;height:3.20px;background:#1e8a4c;"></div>
<div style="position:absolute;left:2086.4px;top:1690.4px;width:5.2px;height:5.2px;border-radius:50%;background:#e0e0e0"></div>
<div style="position:absolute;left:2092.9px;top:1690.4px;width:5.2px;height:5.2px;border-radius:50%;background:#e0e0e0"></div>
<div style="position:absolute;left:2099.4px;top:1690.4px;width:5.2px;height:5.2px;border-radius:50%;background:#e0e0e0"></div>
<svg style="position:absolute;left:2133.00px;top:1684.00px;" width="20" height="20" viewBox="0 0 20 20"><path d="M10 1 V19 M1 10 H19" stroke="#e8e8e8" stroke-width="1.7"/></svg>
<div style="position:absolute;left:2189.8px;top:1685.8px;width:4.4px;height:4.4px;border-radius:1px;background:#e0e0e0"></div>
<div style="position:absolute;left:2189.8px;top:1692.3px;width:4.4px;height:4.4px;border-radius:1px;background:#e0e0e0"></div>
<div style="position:absolute;left:2189.8px;top:1698.8px;width:4.4px;height:4.4px;border-radius:1px;background:#e0e0e0"></div>
<div style="position:absolute;left:2215.6px;top:1680px;width:644px;height:25.8px;border-radius:13px;background:#141414"></div>
<svg style="position:absolute;left:2222.00px;top:1686.00px;" width="13" height="15" viewBox="0 0 13 15"><path d="M11 1.5 V13.5 L2 7.5 Z" fill="#9a9a9a" stroke="#9a9a9a" stroke-width="1.4" stroke-linejoin="round"/></svg>
<div style="position:absolute;left:2241.5px;top:1687px;width:159.3px;height:12px;border-radius:6px;background:#9e9e9e"></div>
<svg style="position:absolute;left:2842.00px;top:1686.00px;" width="13" height="15" viewBox="0 0 13 15"><path d="M2 1.5 V13.5 L11 7.5 Z" fill="#9a9a9a" stroke="#9a9a9a" stroke-width="1.4" stroke-linejoin="round"/></svg>
<div style="position:absolute;left:27.00px;top:1728.89px;font-family:'Liberation Sans', sans-serif;font-size:14.9px;line-height:14.9px;font-weight:normal;color:#ffffff;white-space:pre;">Ready</div>
<svg style="position:absolute;left:98.00px;top:1725.00px;" width="24" height="22" viewBox="0 0 24 22"><path d="M1 1.5 H21.5 M1 1.5 V20 H9 M4.5 6 H18 M4.5 10 H8.5 M4.5 14 H8" stroke="#e8e8e8" stroke-width="1.6" fill="none"/><circle cx="15.5" cy="14" r="6.2" stroke="#e8e8e8" stroke-width="1.6" fill="none"/><circle cx="15.5" cy="14" r="3.2" fill="#e8e8e8"/><path d="M21.5 1.5 V7" stroke="#e8e8e8" stroke-width="1.6"/></svg>
<svg style="position:absolute;left:144.00px;top:1722.00px;" width="26" height="26" viewBox="0 0 26 26"><circle cx="10.5" cy="4.5" r="3" stroke="#eaeaea" stroke-width="1.6" fill="none"/><path d="M3 7.5 Q10.5 11 18 7.5 M10.5 10 V14 L6 20.5" stroke="#eaeaea" stroke-width="4.6" fill="none" stroke-linecap="round" stroke-linejoin="round"/><path d="M3 7.5 Q10.5 11 18 7.5 M10.5 10 V14 L6 20.5" stroke="#161616" stroke-width="1.4" fill="none" stroke-linecap="round" stroke-linejoin="round"/><path d="M12.5 17 L23 24.5 M23 17 L12.5 24.5" stroke="#161616" stroke-width="4"/><path d="M13.5 17.5 L22.5 24.5 M22.5 17.5 L13.5 24.5" stroke="#eaeaea" stroke-width="1.6"/></svg>
<div style="position:absolute;left:173.00px;top:1728.21px;font-family:'Liberation Sans', sans-serif;font-size:15.7px;line-height:15.7px;font-weight:bold;color:#ffffff;white-space:pre;">Accessibility: Investigate</div>
<div style="position:absolute;left:2444.50px;top:1719.00px;width:60.10px;height:32.00px;background:#262626;"></div>
<svg style="position:absolute;left:2463.00px;top:1724.00px;" width="22" height="21" viewBox="0 0 22 21"><rect x="1" y="1" width="19.5" height="18.5" stroke="#fff" stroke-width="1.6" fill="none"/><path d="M7.5 1 V19.5 M14 1 V19.5 M1 7.2 H20.5 M1 13.4 H20.5" stroke="#fff" stroke-width="1.6"/></svg>
<svg style="position:absolute;left:2523.00px;top:1724.00px;" width="24" height="21" viewBox="0 0 24 21"><rect x="1" y="1" width="21.5" height="18.5" stroke="#fff" stroke-width="1.6" fill="none"/><rect x="5" y="4" width="13.5" height="12.5" stroke="#fff" stroke-width="1.5" fill="none"/><path d="M8 7.5 H15.5 M8 10.3 H15.5 M8 13 H15.5" stroke="#fff" stroke-width="1.3"/></svg>
<svg style="position:absolute;left:2583.00px;top:1724.00px;" width="24" height="21" viewBox="0 0 24 21"><rect x="1" y="1" width="21.5" height="18.5" stroke="#fff" stroke-width="1.6" fill="none"/><path d="M6.5 1 V11.5 H1 M6.5 11.5 H12.5 V1 M12.5 8.5 H22.5" stroke="#fff" stroke-width="1.5" fill="none"/></svg>
<div style="position:absolute;left:2632.80px;top:1733.20px;width:11.20px;height:1.60px;background:#cfcfcf;"></div>
<div style="position:absolute;left:2653.00px;top:1734.20px;width:147.60px;height:1.40px;background:#9a9a9a;"></div>
<div style="position:absolute;left:2723.00px;top:1725.60px;width:7.70px;height:16.80px;background:#a8a8a8;"></div>
<svg style="position:absolute;left:2808.00px;top:1727.00px;" width="14" height="14" viewBox="0 0 14 14"><path d="M7 0.5 V13.5 M0.5 7 H13.5" stroke="#cfcfcf" stroke-width="1.5"/></svg>
<div style="position:absolute;left:2840.00px;top:1728.50px;font-family:'Liberation Sans', sans-serif;font-size:15.0px;line-height:15.0px;font-weight:normal;color:#ffffff;white-space:pre;">100%</div>
</body></html>
